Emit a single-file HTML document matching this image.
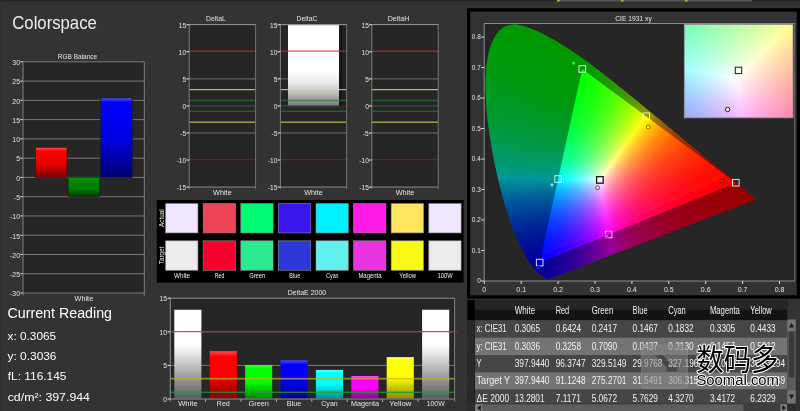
<!DOCTYPE html>
<html lang="en"><head><meta charset="utf-8"><title>Colorspace</title>
<style>
html,body{margin:0;padding:0;background:#333;overflow:hidden}
svg{display:block;font-family:"Liberation Sans", sans-serif;will-change:transform}
</style></head><body>
<svg width="800" height="411" viewBox="0 0 800 411">
<defs>
<linearGradient id="gR" x1="0" y1="0" x2="0" y2="1"><stop offset="0" stop-color="#ff5a5a"/><stop offset="0.12" stop-color="#ff0000"/><stop offset="0.55" stop-color="#e80000"/><stop offset="1" stop-color="#7a0000"/></linearGradient>
<linearGradient id="gG" x1="0" y1="0" x2="0" y2="1"><stop offset="0" stop-color="#00a000"/><stop offset="0.15" stop-color="#008a00"/><stop offset="0.6" stop-color="#007a00"/><stop offset="1" stop-color="#003c00"/></linearGradient>
<linearGradient id="gB" x1="0" y1="0" x2="0" y2="1"><stop offset="0" stop-color="#5a5aff"/><stop offset="0.05" stop-color="#0000ff"/><stop offset="0.55" stop-color="#0000e0"/><stop offset="1" stop-color="#000070"/></linearGradient>
<linearGradient id="gW" x1="0" y1="0" x2="0" y2="1"><stop offset="0" stop-color="#ffffff"/><stop offset="0.58" stop-color="#ffffff"/><stop offset="0.72" stop-color="#eaeaea"/><stop offset="0.86" stop-color="#b8b8b8"/><stop offset="1" stop-color="#7c7c7c"/></linearGradient>
</defs>
<rect width="800" height="411" fill="#333333"/>
<rect x="0" y="0" width="800" height="1.2" fill="#262626"/>
<rect x="558" y="0" width="194" height="1.5" fill="#555555"/>
<rect x="557" y="0" width="2.6" height="1.6" fill="#b4b428"/><rect x="621" y="0" width="2.6" height="1.6" fill="#b4b428"/><rect x="685" y="0" width="2.6" height="1.6" fill="#b4b428"/>
<rect x="0" y="0" width="1" height="411" fill="#2e2e2e"/>

<text x="12.30" y="28.70" font-size="19" text-anchor="start" fill="#ededed" textLength="84.5" lengthAdjust="spacingAndGlyphs" >Colorspace</text>
<rect x="23.0" y="61.8" width="121.3" height="231.2" fill="#262626"/>
<rect x="23.0" y="292.50" width="121.3" height="1" fill="#787878"/>
<rect x="20.4" y="292.50" width="2.6" height="1" fill="#e8e8e8"/>
<text transform="translate(20.00,296.30) scale(0.92,1)" font-size="7.5" text-anchor="end" fill="#e6e6e6" >-30</text>
<rect x="23.0" y="273.23" width="121.3" height="1" fill="#787878"/>
<rect x="20.4" y="273.23" width="2.6" height="1" fill="#e8e8e8"/>
<text transform="translate(20.00,277.03) scale(0.92,1)" font-size="7.5" text-anchor="end" fill="#e6e6e6" >-25</text>
<rect x="23.0" y="253.97" width="121.3" height="1" fill="#787878"/>
<rect x="20.4" y="253.97" width="2.6" height="1" fill="#e8e8e8"/>
<text transform="translate(20.00,257.77) scale(0.92,1)" font-size="7.5" text-anchor="end" fill="#e6e6e6" >-20</text>
<rect x="23.0" y="234.70" width="121.3" height="1" fill="#787878"/>
<rect x="20.4" y="234.70" width="2.6" height="1" fill="#e8e8e8"/>
<text transform="translate(20.00,238.50) scale(0.92,1)" font-size="7.5" text-anchor="end" fill="#e6e6e6" >-15</text>
<rect x="23.0" y="215.43" width="121.3" height="1" fill="#787878"/>
<rect x="20.4" y="215.43" width="2.6" height="1" fill="#e8e8e8"/>
<text transform="translate(20.00,219.23) scale(0.92,1)" font-size="7.5" text-anchor="end" fill="#e6e6e6" >-10</text>
<rect x="23.0" y="196.17" width="121.3" height="1" fill="#787878"/>
<rect x="20.4" y="196.17" width="2.6" height="1" fill="#e8e8e8"/>
<text transform="translate(20.00,199.97) scale(0.92,1)" font-size="7.5" text-anchor="end" fill="#e6e6e6" >-5</text>
<rect x="23.0" y="176.90" width="121.3" height="1" fill="#787878"/>
<rect x="20.4" y="176.90" width="2.6" height="1" fill="#e8e8e8"/>
<text transform="translate(20.00,180.70) scale(0.92,1)" font-size="7.5" text-anchor="end" fill="#e6e6e6" >0</text>
<rect x="23.0" y="157.63" width="121.3" height="1" fill="#787878"/>
<rect x="20.4" y="157.63" width="2.6" height="1" fill="#e8e8e8"/>
<text transform="translate(20.00,161.43) scale(0.92,1)" font-size="7.5" text-anchor="end" fill="#e6e6e6" >5</text>
<rect x="23.0" y="138.37" width="121.3" height="1" fill="#787878"/>
<rect x="20.4" y="138.37" width="2.6" height="1" fill="#e8e8e8"/>
<text transform="translate(20.00,142.17) scale(0.92,1)" font-size="7.5" text-anchor="end" fill="#e6e6e6" >10</text>
<rect x="23.0" y="119.10" width="121.3" height="1" fill="#787878"/>
<rect x="20.4" y="119.10" width="2.6" height="1" fill="#e8e8e8"/>
<text transform="translate(20.00,122.90) scale(0.92,1)" font-size="7.5" text-anchor="end" fill="#e6e6e6" >15</text>
<rect x="23.0" y="99.83" width="121.3" height="1" fill="#787878"/>
<rect x="20.4" y="99.83" width="2.6" height="1" fill="#e8e8e8"/>
<text transform="translate(20.00,103.63) scale(0.92,1)" font-size="7.5" text-anchor="end" fill="#e6e6e6" >20</text>
<rect x="23.0" y="80.57" width="121.3" height="1" fill="#787878"/>
<rect x="20.4" y="80.57" width="2.6" height="1" fill="#e8e8e8"/>
<text transform="translate(20.00,84.37) scale(0.92,1)" font-size="7.5" text-anchor="end" fill="#e6e6e6" >25</text>
<rect x="23.0" y="61.30" width="121.3" height="1" fill="#787878"/>
<rect x="20.4" y="61.30" width="2.6" height="1" fill="#e8e8e8"/>
<text transform="translate(20.00,65.10) scale(0.92,1)" font-size="7.5" text-anchor="end" fill="#e6e6e6" >30</text>
<rect x="22.5" y="61.8" width="1" height="233.7" fill="#808080"/>
<rect x="143.8" y="61.8" width="1" height="233.7" fill="#808080"/>
<rect x="35.5" y="147.34" width="31.50" height="30.06" fill="url(#gR)" stroke="#1a1a1a" stroke-width="0.6"/>
<rect x="68.0" y="177.40" width="31.90" height="19.27" fill="url(#gG)" stroke="#1a1a1a" stroke-width="0.6"/>
<rect x="100.5" y="98.02" width="31.80" height="79.38" fill="url(#gB)" stroke="#1a1a1a" stroke-width="0.6"/>
<text x="77.50" y="59.20" font-size="7.4" text-anchor="middle" fill="#e6e6e6" textLength="39.4" lengthAdjust="spacingAndGlyphs" >RGB Balance</text>
<text x="83.90" y="301.00" font-size="7.4" text-anchor="middle" fill="#e6e6e6" textLength="18.6" lengthAdjust="spacingAndGlyphs" >White</text>
<text x="7.50" y="318.40" font-size="14.0" text-anchor="start" fill="#fff" textLength="104.5" lengthAdjust="spacingAndGlyphs" >Current Reading</text>
<text x="7.50" y="339.50" font-size="11.6" text-anchor="start" fill="#fff" textLength="48.7" lengthAdjust="spacingAndGlyphs" >x: 0.3065</text>
<text x="7.50" y="359.80" font-size="11.6" text-anchor="start" fill="#fff" textLength="49.0" lengthAdjust="spacingAndGlyphs" >y: 0.3036</text>
<text x="7.70" y="380.30" font-size="11.6" text-anchor="start" fill="#fff" textLength="58.8" lengthAdjust="spacingAndGlyphs" >fL: 116.145</text>
<text x="7.70" y="400.60" font-size="11.6" text-anchor="start" fill="#fff" textLength="82.3" lengthAdjust="spacingAndGlyphs" >cd/m²: 397.944</text>
<rect x="189.2" y="24.6" width="66.4" height="162.5" fill="#262626"/>
<rect x="189.2" y="78.15" width="66.4" height="1.4" fill="#5a5a5a"/>
<rect x="189.2" y="132.25" width="66.4" height="1.4" fill="#5a5a5a"/>
<rect x="189.2" y="105.30" width="66.4" height="1.2" fill="#484848"/>
<rect x="189.2" y="50.55" width="67.4" height="1.3" fill="#c42626" opacity="0.85"/>
<rect x="189.2" y="158.85" width="67.4" height="1.3" fill="#8e1a1a" opacity="0.9"/>
<rect x="189.2" y="89.17" width="66.4" height="1.0" fill="#e6dc46" opacity="1"/>
<rect x="189.2" y="121.63" width="66.4" height="1.0" fill="#e6dc46" opacity="1"/>
<rect x="189.2" y="99.79" width="66.4" height="1.4" fill="#1f7a34" opacity="0.7"/>
<rect x="189.2" y="110.61" width="66.4" height="1.4" fill="#1f7a34" opacity="0.7"/>
<rect x="188.7" y="24.1" width="1" height="165.0" fill="#7c7c7c"/>
<rect x="255.1" y="24.1" width="1" height="165.0" fill="#727272"/>
<rect x="189.2" y="24.1" width="66.4" height="1" fill="#9a9a9a"/>
<rect x="189.2" y="186.55" width="66.4" height="1" fill="#8c8c8c"/>
<rect x="186.4" y="186.55" width="2.8" height="1" fill="#e8e8e8"/>
<text transform="translate(186.20,190.25) scale(0.88,1)" font-size="7.5" text-anchor="end" fill="#e6e6e6" >-15</text>
<rect x="186.4" y="159.50" width="2.8" height="1" fill="#e8e8e8"/>
<text transform="translate(186.20,163.20) scale(0.88,1)" font-size="7.5" text-anchor="end" fill="#e6e6e6" >-10</text>
<rect x="186.4" y="132.45" width="2.8" height="1" fill="#e8e8e8"/>
<text transform="translate(186.20,136.15) scale(0.88,1)" font-size="7.5" text-anchor="end" fill="#e6e6e6" >-5</text>
<rect x="186.4" y="105.40" width="2.8" height="1" fill="#e8e8e8"/>
<text transform="translate(186.20,109.10) scale(0.88,1)" font-size="7.5" text-anchor="end" fill="#e6e6e6" >0</text>
<rect x="186.4" y="78.35" width="2.8" height="1" fill="#e8e8e8"/>
<text transform="translate(186.20,82.05) scale(0.88,1)" font-size="7.5" text-anchor="end" fill="#e6e6e6" >5</text>
<rect x="186.4" y="51.30" width="2.8" height="1" fill="#e8e8e8"/>
<text transform="translate(186.20,55.00) scale(0.88,1)" font-size="7.5" text-anchor="end" fill="#e6e6e6" >10</text>
<rect x="186.4" y="24.25" width="2.8" height="1" fill="#e8e8e8"/>
<text transform="translate(186.20,27.95) scale(0.88,1)" font-size="7.5" text-anchor="end" fill="#e6e6e6" >15</text>
<text x="215.90" y="21.10" font-size="7.6" text-anchor="middle" fill="#e6e6e6" textLength="19.6" lengthAdjust="spacingAndGlyphs" >DeltaL</text>
<text x="222.40" y="195.00" font-size="7.6" text-anchor="middle" fill="#e6e6e6" textLength="18.6" lengthAdjust="spacingAndGlyphs" >White</text>
<rect x="280.4" y="24.6" width="66.2" height="162.5" fill="#262626"/>
<rect x="280.4" y="78.15" width="66.2" height="1.4" fill="#5a5a5a"/>
<rect x="280.4" y="132.25" width="66.2" height="1.4" fill="#5a5a5a"/>
<rect x="280.4" y="105.30" width="66.2" height="1.2" fill="#484848"/>
<rect x="339.0" y="25.1" width="3.6" height="81.3" fill="#181818"/>
<rect x="342.6" y="25.1" width="3.5" height="81.3" fill="#222222"/>
<rect x="288.0" y="25.1" width="51.0" height="80.3" fill="url(#gW)"/>
<rect x="280.4" y="50.55" width="67.2" height="1.3" fill="#c42626" opacity="0.85"/>
<rect x="280.4" y="158.85" width="67.2" height="1.3" fill="#8e1a1a" opacity="0.9"/>
<rect x="280.4" y="89.17" width="66.2" height="1.0" fill="#e6dc46" opacity="1"/>
<rect x="280.4" y="121.63" width="66.2" height="1.0" fill="#e6dc46" opacity="1"/>
<rect x="280.4" y="99.79" width="66.2" height="1.4" fill="#1f7a34" opacity="0.7"/>
<rect x="280.4" y="110.61" width="66.2" height="1.4" fill="#1f7a34" opacity="0.7"/>
<rect x="288.0" y="50.55" width="51.0" height="1.3" fill="#f78c8c"/>
<rect x="279.9" y="24.1" width="1" height="165.0" fill="#7c7c7c"/>
<rect x="346.1" y="24.1" width="1" height="165.0" fill="#727272"/>
<rect x="280.4" y="24.1" width="66.2" height="1" fill="#9a9a9a"/>
<rect x="280.4" y="186.55" width="66.2" height="1" fill="#8c8c8c"/>
<rect x="277.6" y="186.55" width="2.8" height="1" fill="#e8e8e8"/>
<text transform="translate(277.40,190.25) scale(0.88,1)" font-size="7.5" text-anchor="end" fill="#e6e6e6" >-15</text>
<rect x="277.6" y="159.50" width="2.8" height="1" fill="#e8e8e8"/>
<text transform="translate(277.40,163.20) scale(0.88,1)" font-size="7.5" text-anchor="end" fill="#e6e6e6" >-10</text>
<rect x="277.6" y="132.45" width="2.8" height="1" fill="#e8e8e8"/>
<text transform="translate(277.40,136.15) scale(0.88,1)" font-size="7.5" text-anchor="end" fill="#e6e6e6" >-5</text>
<rect x="277.6" y="105.40" width="2.8" height="1" fill="#e8e8e8"/>
<text transform="translate(277.40,109.10) scale(0.88,1)" font-size="7.5" text-anchor="end" fill="#e6e6e6" >0</text>
<rect x="277.6" y="78.35" width="2.8" height="1" fill="#e8e8e8"/>
<text transform="translate(277.40,82.05) scale(0.88,1)" font-size="7.5" text-anchor="end" fill="#e6e6e6" >5</text>
<rect x="277.6" y="51.30" width="2.8" height="1" fill="#e8e8e8"/>
<text transform="translate(277.40,55.00) scale(0.88,1)" font-size="7.5" text-anchor="end" fill="#e6e6e6" >10</text>
<rect x="277.6" y="24.25" width="2.8" height="1" fill="#e8e8e8"/>
<text transform="translate(277.40,27.95) scale(0.88,1)" font-size="7.5" text-anchor="end" fill="#e6e6e6" >15</text>
<text x="307.00" y="21.10" font-size="7.6" text-anchor="middle" fill="#e6e6e6" textLength="21.0" lengthAdjust="spacingAndGlyphs" >DeltaC</text>
<text x="313.50" y="195.00" font-size="7.6" text-anchor="middle" fill="#e6e6e6" textLength="18.6" lengthAdjust="spacingAndGlyphs" >White</text>
<rect x="371.8" y="24.6" width="66.4" height="162.5" fill="#262626"/>
<rect x="371.8" y="78.15" width="66.4" height="1.4" fill="#5a5a5a"/>
<rect x="371.8" y="132.25" width="66.4" height="1.4" fill="#5a5a5a"/>
<rect x="371.8" y="105.30" width="66.4" height="1.2" fill="#484848"/>
<rect x="371.8" y="50.55" width="67.4" height="1.3" fill="#c42626" opacity="0.85"/>
<rect x="371.8" y="158.85" width="67.4" height="1.3" fill="#8e1a1a" opacity="0.9"/>
<rect x="371.8" y="89.17" width="66.4" height="1.0" fill="#e6dc46" opacity="1"/>
<rect x="371.8" y="121.63" width="66.4" height="1.0" fill="#e6dc46" opacity="1"/>
<rect x="371.8" y="99.79" width="66.4" height="1.4" fill="#1f7a34" opacity="0.7"/>
<rect x="371.8" y="110.61" width="66.4" height="1.4" fill="#1f7a34" opacity="0.7"/>
<rect x="371.3" y="24.1" width="1" height="165.0" fill="#7c7c7c"/>
<rect x="437.7" y="24.1" width="1" height="165.0" fill="#727272"/>
<rect x="371.8" y="24.1" width="66.4" height="1" fill="#9a9a9a"/>
<rect x="371.8" y="186.55" width="66.4" height="1" fill="#8c8c8c"/>
<rect x="369.0" y="186.55" width="2.8" height="1" fill="#e8e8e8"/>
<text transform="translate(368.80,190.25) scale(0.88,1)" font-size="7.5" text-anchor="end" fill="#e6e6e6" >-15</text>
<rect x="369.0" y="159.50" width="2.8" height="1" fill="#e8e8e8"/>
<text transform="translate(368.80,163.20) scale(0.88,1)" font-size="7.5" text-anchor="end" fill="#e6e6e6" >-10</text>
<rect x="369.0" y="132.45" width="2.8" height="1" fill="#e8e8e8"/>
<text transform="translate(368.80,136.15) scale(0.88,1)" font-size="7.5" text-anchor="end" fill="#e6e6e6" >-5</text>
<rect x="369.0" y="105.40" width="2.8" height="1" fill="#e8e8e8"/>
<text transform="translate(368.80,109.10) scale(0.88,1)" font-size="7.5" text-anchor="end" fill="#e6e6e6" >0</text>
<rect x="369.0" y="78.35" width="2.8" height="1" fill="#e8e8e8"/>
<text transform="translate(368.80,82.05) scale(0.88,1)" font-size="7.5" text-anchor="end" fill="#e6e6e6" >5</text>
<rect x="369.0" y="51.30" width="2.8" height="1" fill="#e8e8e8"/>
<text transform="translate(368.80,55.00) scale(0.88,1)" font-size="7.5" text-anchor="end" fill="#e6e6e6" >10</text>
<rect x="369.0" y="24.25" width="2.8" height="1" fill="#e8e8e8"/>
<text transform="translate(368.80,27.95) scale(0.88,1)" font-size="7.5" text-anchor="end" fill="#e6e6e6" >15</text>
<text x="398.50" y="21.10" font-size="7.6" text-anchor="middle" fill="#e6e6e6" textLength="21.6" lengthAdjust="spacingAndGlyphs" >DeltaH</text>
<text x="405.00" y="195.00" font-size="7.6" text-anchor="middle" fill="#e6e6e6" textLength="18.6" lengthAdjust="spacingAndGlyphs" >White</text>
<rect x="156.8" y="200" width="306.8" height="82.6" fill="#000"/>
<rect x="165.6" y="203.6" width="32.3" height="29.3" fill="#f1e6ff" stroke="#9a9a9a" stroke-opacity="0.7" stroke-width="0.8"/>
<rect x="165.6" y="240.8" width="32.3" height="29.5" fill="#ebebeb" stroke="#9a9a9a" stroke-opacity="0.7" stroke-width="0.8"/>
<text x="182.00" y="277.50" font-size="6.7" text-anchor="middle" fill="#f0f0f0" textLength="16.0" lengthAdjust="spacingAndGlyphs" >White</text>
<rect x="203.2" y="203.6" width="32.3" height="29.3" fill="#ee4457" stroke="#9a9a9a" stroke-opacity="0.7" stroke-width="0.8"/>
<rect x="203.2" y="240.8" width="32.3" height="29.5" fill="#f5012c" stroke="#9a9a9a" stroke-opacity="0.7" stroke-width="0.8"/>
<text x="219.60" y="277.50" font-size="6.7" text-anchor="middle" fill="#f0f0f0" textLength="9.5" lengthAdjust="spacingAndGlyphs" >Red</text>
<rect x="240.8" y="203.6" width="32.3" height="29.3" fill="#00fb72" stroke="#9a9a9a" stroke-opacity="0.7" stroke-width="0.8"/>
<rect x="240.8" y="240.8" width="32.3" height="29.5" fill="#2aea8e" stroke="#9a9a9a" stroke-opacity="0.7" stroke-width="0.8"/>
<text x="257.20" y="277.50" font-size="6.7" text-anchor="middle" fill="#f0f0f0" textLength="16.0" lengthAdjust="spacingAndGlyphs" >Green</text>
<rect x="278.4" y="203.6" width="32.3" height="29.3" fill="#3a16f0" stroke="#9a9a9a" stroke-opacity="0.7" stroke-width="0.8"/>
<rect x="278.4" y="240.8" width="32.3" height="29.5" fill="#2c38d8" stroke="#9a9a9a" stroke-opacity="0.7" stroke-width="0.8"/>
<text x="294.80" y="277.50" font-size="6.7" text-anchor="middle" fill="#f0f0f0" textLength="11.0" lengthAdjust="spacingAndGlyphs" >Blue</text>
<rect x="316.0" y="203.6" width="32.3" height="29.3" fill="#00f0ff" stroke="#9a9a9a" stroke-opacity="0.7" stroke-width="0.8"/>
<rect x="316.0" y="240.8" width="32.3" height="29.5" fill="#60f0ee" stroke="#9a9a9a" stroke-opacity="0.7" stroke-width="0.8"/>
<text x="332.40" y="277.50" font-size="6.7" text-anchor="middle" fill="#f0f0f0" textLength="12.2" lengthAdjust="spacingAndGlyphs" >Cyan</text>
<rect x="353.6" y="203.6" width="32.3" height="29.3" fill="#ff1ce9" stroke="#9a9a9a" stroke-opacity="0.7" stroke-width="0.8"/>
<rect x="353.6" y="240.8" width="32.3" height="29.5" fill="#e932e0" stroke="#9a9a9a" stroke-opacity="0.7" stroke-width="0.8"/>
<text x="370.00" y="277.50" font-size="6.7" text-anchor="middle" fill="#f0f0f0" textLength="23.2" lengthAdjust="spacingAndGlyphs" >Magenta</text>
<rect x="391.2" y="203.6" width="32.3" height="29.3" fill="#ffe45e" stroke="#9a9a9a" stroke-opacity="0.7" stroke-width="0.8"/>
<rect x="391.2" y="240.8" width="32.3" height="29.5" fill="#f9f916" stroke="#9a9a9a" stroke-opacity="0.7" stroke-width="0.8"/>
<text x="407.60" y="277.50" font-size="6.7" text-anchor="middle" fill="#f0f0f0" textLength="16.6" lengthAdjust="spacingAndGlyphs" >Yellow</text>
<rect x="428.8" y="203.6" width="32.3" height="29.3" fill="#f1e6ff" stroke="#9a9a9a" stroke-opacity="0.7" stroke-width="0.8"/>
<rect x="428.8" y="240.8" width="32.3" height="29.5" fill="#ebebeb" stroke="#9a9a9a" stroke-opacity="0.7" stroke-width="0.8"/>
<text x="445.20" y="277.50" font-size="6.7" text-anchor="middle" fill="#f0f0f0" textLength="15.2" lengthAdjust="spacingAndGlyphs" >100W</text>
<text transform="translate(163.6,218.2) rotate(-90)" font-size="6.6" text-anchor="middle" fill="#f0f0f0" textLength="17.5" lengthAdjust="spacingAndGlyphs">Actual</text>
<text transform="translate(163.6,255.5) rotate(-90)" font-size="6.6" text-anchor="middle" fill="#f0f0f0" textLength="17.5" lengthAdjust="spacingAndGlyphs">Target</text>
<rect x="170.3" y="298.2" width="284.3" height="100.8" fill="#262626"/>
<rect x="170.3" y="364.90" width="284.3" height="1" fill="#777"/>
<rect x="170.3" y="331.30" width="284.3" height="1" fill="#777"/>
<defs>
<linearGradient id="e0" x1="0" y1="0" x2="0" y2="1"><stop offset="0" stop-color="#fff"/><stop offset="0.4" stop-color="#fff"/><stop offset="1" stop-color="#5c5c5c"/></linearGradient>
<linearGradient id="e1" x1="0" y1="0" x2="0" y2="1"><stop offset="0" stop-color="#ff4a4a"/><stop offset="0.12" stop-color="#ff0000"/><stop offset="0.5" stop-color="#ff0000"/><stop offset="1" stop-color="#8a0000"/></linearGradient>
<linearGradient id="e2" x1="0" y1="0" x2="0" y2="1"><stop offset="0" stop-color="#3cff3c"/><stop offset="0.12" stop-color="#00ff00"/><stop offset="0.5" stop-color="#00ff00"/><stop offset="1" stop-color="#008a00"/></linearGradient>
<linearGradient id="e3" x1="0" y1="0" x2="0" y2="1"><stop offset="0" stop-color="#4a4aff"/><stop offset="0.12" stop-color="#0000ff"/><stop offset="0.5" stop-color="#0000ff"/><stop offset="1" stop-color="#00008a"/></linearGradient>
<linearGradient id="e4" x1="0" y1="0" x2="0" y2="1"><stop offset="0" stop-color="#5affff"/><stop offset="0.12" stop-color="#00ffff"/><stop offset="0.5" stop-color="#00ffff"/><stop offset="1" stop-color="#008a8a"/></linearGradient>
<linearGradient id="e5" x1="0" y1="0" x2="0" y2="1"><stop offset="0" stop-color="#ff5aff"/><stop offset="0.12" stop-color="#ff00ff"/><stop offset="0.5" stop-color="#ff00ff"/><stop offset="1" stop-color="#8a008a"/></linearGradient>
<linearGradient id="e6" x1="0" y1="0" x2="0" y2="1"><stop offset="0" stop-color="#ffff5a"/><stop offset="0.12" stop-color="#ffff00"/><stop offset="0.5" stop-color="#ffff00"/><stop offset="1" stop-color="#8a8a00"/></linearGradient>
<linearGradient id="e7" x1="0" y1="0" x2="0" y2="1"><stop offset="0" stop-color="#fff"/><stop offset="0.4" stop-color="#fff"/><stop offset="1" stop-color="#5c5c5c"/></linearGradient>
</defs>
<rect x="174.3" y="309.76" width="27.1" height="88.74" fill="url(#e0)"/>
<text x="187.90" y="406.00" font-size="7.6" text-anchor="middle" fill="#e6e6e6" textLength="19.5" lengthAdjust="spacingAndGlyphs" >White</text>
<rect x="209.7" y="351.17" width="27.1" height="47.33" fill="url(#e1)"/>
<text x="223.30" y="406.00" font-size="7.6" text-anchor="middle" fill="#e6e6e6" textLength="13.0" lengthAdjust="spacingAndGlyphs" >Red</text>
<rect x="205.1" y="399.0" width="1" height="3" fill="#aaa"/>
<rect x="245.1" y="364.95" width="27.1" height="33.55" fill="url(#e2)"/>
<text x="258.70" y="406.00" font-size="7.6" text-anchor="middle" fill="#e6e6e6" textLength="20.5" lengthAdjust="spacingAndGlyphs" >Green</text>
<rect x="240.5" y="399.0" width="1" height="3" fill="#aaa"/>
<rect x="280.5" y="360.27" width="27.1" height="38.23" fill="url(#e3)"/>
<text x="294.10" y="406.00" font-size="7.6" text-anchor="middle" fill="#e6e6e6" textLength="14.5" lengthAdjust="spacingAndGlyphs" >Blue</text>
<rect x="275.9" y="399.0" width="1" height="3" fill="#aaa"/>
<rect x="315.9" y="369.92" width="27.1" height="28.58" fill="url(#e4)"/>
<text x="329.50" y="406.00" font-size="7.6" text-anchor="middle" fill="#e6e6e6" textLength="16.5" lengthAdjust="spacingAndGlyphs" >Cyan</text>
<rect x="311.3" y="399.0" width="1" height="3" fill="#aaa"/>
<rect x="351.3" y="376.04" width="27.1" height="22.46" fill="url(#e5)"/>
<text x="364.90" y="406.00" font-size="7.6" text-anchor="middle" fill="#e6e6e6" textLength="28.0" lengthAdjust="spacingAndGlyphs" >Magenta</text>
<rect x="346.7" y="399.0" width="1" height="3" fill="#aaa"/>
<rect x="386.7" y="357.11" width="27.1" height="41.39" fill="url(#e6)"/>
<text x="400.30" y="406.00" font-size="7.6" text-anchor="middle" fill="#e6e6e6" textLength="22.0" lengthAdjust="spacingAndGlyphs" >Yellow</text>
<rect x="382.1" y="399.0" width="1" height="3" fill="#aaa"/>
<rect x="422.1" y="309.76" width="27.1" height="88.74" fill="url(#e7)"/>
<text x="435.70" y="406.00" font-size="7.6" text-anchor="middle" fill="#e6e6e6" textLength="18.0" lengthAdjust="spacingAndGlyphs" >100W</text>
<rect x="417.5" y="399.0" width="1" height="3" fill="#aaa"/>
<rect x="170.3" y="331.20" width="286.8" height="1.0" fill="#d02222"/>
<rect x="170.3" y="377.84" width="284.3" height="1.7" fill="#c4b41e" opacity="0.7"/>
<rect x="170.3" y="391.68" width="284.3" height="1.2" fill="#1f9a34" opacity="0.9"/>
<rect x="169.8" y="297.7" width="1" height="103.8" fill="#909090"/>
<rect x="454.1" y="297.7" width="1" height="103.8" fill="#808080"/>
<rect x="170.3" y="297.7" width="284.3" height="1" fill="#909090"/>
<rect x="170.3" y="398.50" width="284.3" height="1" fill="#909090"/>
<rect x="167.5" y="398.50" width="2.8" height="1" fill="#e8e8e8"/>
<text transform="translate(167.10,402.00) scale(0.9,1)" font-size="7.5" text-anchor="end" fill="#e6e6e6" >0</text>
<rect x="167.5" y="364.90" width="2.8" height="1" fill="#e8e8e8"/>
<text transform="translate(167.10,368.40) scale(0.9,1)" font-size="7.5" text-anchor="end" fill="#e6e6e6" >5</text>
<rect x="167.5" y="331.30" width="2.8" height="1" fill="#e8e8e8"/>
<text transform="translate(167.10,334.80) scale(0.9,1)" font-size="7.5" text-anchor="end" fill="#e6e6e6" >10</text>
<rect x="167.5" y="297.70" width="2.8" height="1" fill="#e8e8e8"/>
<text transform="translate(167.10,301.20) scale(0.9,1)" font-size="7.5" text-anchor="end" fill="#e6e6e6" >15</text>
<text x="307.00" y="295.00" font-size="7.6" text-anchor="middle" fill="#e6e6e6" textLength="38.5" lengthAdjust="spacingAndGlyphs" >DeltaE 2000</text>
<rect x="467" y="8.2" width="333" height="290.5" fill="#000"/>
<rect x="470.2" y="11.6" width="326.6" height="283.7" fill="#333333"/>
<rect x="484.2" y="23.5" width="310.4" height="257.5" fill="#262626"/>
<defs><clipPath id="loc"><polygon points="547.6,279.4 547.5,279.3 547.3,279.2 547.0,279.1 546.7,278.9 546.4,278.6 546.0,278.4 545.5,278.0 545.0,277.7 544.4,277.2 543.8,276.8 543.0,276.2 542.1,275.6 541.2,274.9 540.1,274.1 538.9,273.2 537.5,271.9 535.8,270.1 533.8,267.9 531.9,265.5 530.1,263.2 528.7,261.2 527.4,259.1 526.1,256.9 524.8,254.3 523.2,251.3 521.6,248.0 519.8,244.3 518.0,240.2 516.0,235.7 513.9,230.7 511.8,225.3 509.6,219.3 507.5,212.8 505.3,205.8 503.1,198.3 501.0,190.3 498.9,181.9 496.8,172.9 494.7,163.6 492.9,154.2 491.2,144.6 489.7,134.8 488.3,125.1 487.2,115.5 486.4,106.3 485.9,97.1 485.6,88.2 485.6,79.8 486.1,71.8 486.8,64.1 487.9,56.9 489.3,50.5 491.2,44.7 493.4,39.6 495.9,35.1 498.6,31.5 501.6,28.7 504.8,26.8 508.2,25.5 511.7,24.8 515.3,24.6 519.0,25.1 522.7,26.0 526.5,27.1 530.2,28.4 534.0,29.9 537.7,31.6 541.4,33.3 545.0,35.1 548.6,36.9 552.1,38.9 555.6,40.8 559.0,42.8 562.4,44.9 565.8,47.0 569.2,49.2 572.5,51.4 575.9,53.7 579.2,56.1 582.5,58.4 585.9,60.8 589.2,63.3 592.5,65.8 595.8,68.3 599.1,70.8 602.4,73.3 605.7,75.9 609.0,78.5 612.3,81.1 615.6,83.8 618.9,86.4 622.2,89.1 625.5,91.8 628.8,94.4 632.1,97.1 635.4,99.8 638.7,102.5 642.0,105.2 645.3,107.9 648.5,110.5 651.8,113.2 655.0,115.9 658.2,118.5 661.4,121.1 664.5,123.8 667.6,126.3 670.8,128.9 673.8,131.5 676.9,134.0 679.9,136.5 682.8,138.9 685.8,141.4 688.7,143.7 691.5,146.1 694.3,148.4 697.0,150.6 699.7,152.9 702.3,155.0 704.8,157.1 707.3,159.2 709.6,161.1 711.9,163.0 714.1,164.8 716.2,166.5 718.3,168.2 720.3,169.9 722.2,171.5 724.0,173.0 725.7,174.4 727.2,175.6 728.7,176.9 730.5,178.4 732.8,180.2 735.3,182.3 737.8,184.4 740.1,186.3 741.9,187.8 743.4,189.0 744.8,190.2 746.1,191.3 747.3,192.3 748.4,193.2 749.4,194.0 750.2,194.7 751.0,195.3 751.7,195.9 752.3,196.4 752.8,196.8 753.3,197.2 753.6,197.5 753.9,197.7 754.3,198.0 754.8,198.4 755.3,198.8 755.7,199.2 756.0,199.5"/></clipPath><clipPath id="tri"><polygon points="735.8,182.7 582.2,69.0 539.7,262.6"/></clipPath>
<linearGradient id="r0" gradientUnits="userSpaceOnUse" x1="484.2" x2="758.0" y1="0" y2="0"><stop offset="0.000" stop-color="#00ff08"/><stop offset="0.190" stop-color="#00ff00"/><stop offset="0.410" stop-color="#03ff00"/><stop offset="0.516" stop-color="#27ff00"/><stop offset="0.645" stop-color="#6aff00"/><stop offset="0.766" stop-color="#bfff00"/><stop offset="0.842" stop-color="#fffd00"/><stop offset="0.916" stop-color="#ffc400"/><stop offset="1.000" stop-color="#ff9700"/></linearGradient>
<linearGradient id="r1" gradientUnits="userSpaceOnUse" x1="484.2" x2="758.0" y1="0" y2="0"><stop offset="0.000" stop-color="#00ff08"/><stop offset="0.205" stop-color="#00ff00"/><stop offset="0.410" stop-color="#03ff00"/><stop offset="0.513" stop-color="#27ff00"/><stop offset="0.641" stop-color="#6aff00"/><stop offset="0.758" stop-color="#bdff00"/><stop offset="0.835" stop-color="#fffe00"/><stop offset="0.908" stop-color="#ffc500"/><stop offset="1.000" stop-color="#ff9400"/></linearGradient>
<linearGradient id="r2" gradientUnits="userSpaceOnUse" x1="484.2" x2="758.0" y1="0" y2="0"><stop offset="0.000" stop-color="#00ff09"/><stop offset="0.209" stop-color="#00ff00"/><stop offset="0.407" stop-color="#03ff00"/><stop offset="0.505" stop-color="#25ff00"/><stop offset="0.619" stop-color="#5fff00"/><stop offset="0.740" stop-color="#b2ff00"/><stop offset="0.832" stop-color="#fffd00"/><stop offset="0.908" stop-color="#ffc100"/><stop offset="1.000" stop-color="#ff9100"/></linearGradient>
<linearGradient id="r3" gradientUnits="userSpaceOnUse" x1="484.2" x2="758.0" y1="0" y2="0"><stop offset="0.000" stop-color="#00ff0a"/><stop offset="0.212" stop-color="#00ff00"/><stop offset="0.407" stop-color="#03ff00"/><stop offset="0.516" stop-color="#2bff00"/><stop offset="0.645" stop-color="#71ff00"/><stop offset="0.755" stop-color="#c2ff00"/><stop offset="0.824" stop-color="#ffff00"/><stop offset="0.894" stop-color="#ffc700"/><stop offset="0.993" stop-color="#ff9100"/><stop offset="1.000" stop-color="#ff8e00"/></linearGradient>
<linearGradient id="r4" gradientUnits="userSpaceOnUse" x1="484.2" x2="758.0" y1="0" y2="0"><stop offset="0.000" stop-color="#00ff0b"/><stop offset="0.216" stop-color="#00ff00"/><stop offset="0.403" stop-color="#03ff00"/><stop offset="0.498" stop-color="#24ff00"/><stop offset="0.615" stop-color="#61ff00"/><stop offset="0.729" stop-color="#b1ff00"/><stop offset="0.821" stop-color="#fffd00"/><stop offset="0.894" stop-color="#ffc300"/><stop offset="0.993" stop-color="#ff8e00"/><stop offset="1.000" stop-color="#ff8b00"/></linearGradient>
<linearGradient id="r5" gradientUnits="userSpaceOnUse" x1="484.2" x2="758.0" y1="0" y2="0"><stop offset="0.000" stop-color="#00ff0c"/><stop offset="0.223" stop-color="#00ff00"/><stop offset="0.403" stop-color="#03ff00"/><stop offset="0.509" stop-color="#2aff00"/><stop offset="0.634" stop-color="#6fff00"/><stop offset="0.747" stop-color="#c3ff00"/><stop offset="0.813" stop-color="#ffff00"/><stop offset="0.886" stop-color="#ffc400"/><stop offset="0.985" stop-color="#ff8e00"/><stop offset="1.000" stop-color="#ff8800"/></linearGradient>
<linearGradient id="r6" gradientUnits="userSpaceOnUse" x1="484.2" x2="758.0" y1="0" y2="0"><stop offset="0.000" stop-color="#00ff0d"/><stop offset="0.231" stop-color="#00ff00"/><stop offset="0.399" stop-color="#03ff00"/><stop offset="0.491" stop-color="#23ff00"/><stop offset="0.608" stop-color="#61ff00"/><stop offset="0.725" stop-color="#b5ff00"/><stop offset="0.810" stop-color="#fffd00"/><stop offset="0.879" stop-color="#ffc500"/><stop offset="0.982" stop-color="#ff8d00"/><stop offset="1.000" stop-color="#ff8500"/></linearGradient>
<linearGradient id="r7" gradientUnits="userSpaceOnUse" x1="484.2" x2="758.0" y1="0" y2="0"><stop offset="0.000" stop-color="#00ff0e"/><stop offset="0.238" stop-color="#00ff00"/><stop offset="0.399" stop-color="#03ff00"/><stop offset="0.495" stop-color="#26ff00"/><stop offset="0.615" stop-color="#68ff00"/><stop offset="0.725" stop-color="#b9ff00"/><stop offset="0.802" stop-color="#ffff00"/><stop offset="0.879" stop-color="#ffc100"/><stop offset="0.974" stop-color="#ff8d00"/><stop offset="1.000" stop-color="#ff8300"/></linearGradient>
<linearGradient id="r8" gradientUnits="userSpaceOnUse" x1="484.2" x2="758.0" y1="0" y2="0"><stop offset="0.000" stop-color="#00ff0f"/><stop offset="0.242" stop-color="#00ff00"/><stop offset="0.399" stop-color="#03ff00"/><stop offset="0.505" stop-color="#2cff00"/><stop offset="0.623" stop-color="#6fff00"/><stop offset="0.740" stop-color="#c9ff00"/><stop offset="0.799" stop-color="#fffe00"/><stop offset="0.875" stop-color="#ffbf00"/><stop offset="0.974" stop-color="#ff8a00"/><stop offset="1.000" stop-color="#ff8000"/></linearGradient>
<linearGradient id="r9" gradientUnits="userSpaceOnUse" x1="484.2" x2="758.0" y1="0" y2="0"><stop offset="0.000" stop-color="#00ff10"/><stop offset="0.253" stop-color="#00ff00"/><stop offset="0.396" stop-color="#03ff00"/><stop offset="0.495" stop-color="#28ff00"/><stop offset="0.608" stop-color="#68ff00"/><stop offset="0.714" stop-color="#b7ff00"/><stop offset="0.795" stop-color="#fffc00"/><stop offset="0.868" stop-color="#ffc000"/><stop offset="0.967" stop-color="#ff8a00"/><stop offset="1.000" stop-color="#ff7d00"/></linearGradient>
<linearGradient id="r10" gradientUnits="userSpaceOnUse" x1="484.2" x2="758.0" y1="0" y2="0"><stop offset="0.000" stop-color="#00ff11"/><stop offset="0.260" stop-color="#00ff00"/><stop offset="0.396" stop-color="#03ff00"/><stop offset="0.502" stop-color="#2dff00"/><stop offset="0.612" stop-color="#6dff00"/><stop offset="0.714" stop-color="#bbff00"/><stop offset="0.788" stop-color="#fffe00"/><stop offset="0.868" stop-color="#ffbc00"/><stop offset="0.967" stop-color="#ff8700"/><stop offset="1.000" stop-color="#ff7a00"/></linearGradient>
<linearGradient id="r11" gradientUnits="userSpaceOnUse" x1="484.2" x2="758.0" y1="0" y2="0"><stop offset="0.000" stop-color="#00ff12"/><stop offset="0.271" stop-color="#00ff00"/><stop offset="0.392" stop-color="#03ff00"/><stop offset="0.487" stop-color="#27ff00"/><stop offset="0.601" stop-color="#68ff00"/><stop offset="0.711" stop-color="#bcff00"/><stop offset="0.784" stop-color="#fffc00"/><stop offset="0.861" stop-color="#ffbd00"/><stop offset="0.956" stop-color="#ff8900"/><stop offset="1.000" stop-color="#ff7800"/></linearGradient>
<linearGradient id="r12" gradientUnits="userSpaceOnUse" x1="484.2" x2="758.0" y1="0" y2="0"><stop offset="0.000" stop-color="#00ff13"/><stop offset="0.282" stop-color="#00ff00"/><stop offset="0.392" stop-color="#03ff00"/><stop offset="0.491" stop-color="#2aff00"/><stop offset="0.604" stop-color="#6dff00"/><stop offset="0.711" stop-color="#c0ff00"/><stop offset="0.777" stop-color="#fffe00"/><stop offset="0.850" stop-color="#ffc000"/><stop offset="0.956" stop-color="#ff8600"/><stop offset="1.000" stop-color="#ff7500"/></linearGradient>
<linearGradient id="r13" gradientUnits="userSpaceOnUse" x1="484.2" x2="758.0" y1="0" y2="0"><stop offset="0.000" stop-color="#00ff14"/><stop offset="0.286" stop-color="#00ff00"/><stop offset="0.388" stop-color="#03ff00"/><stop offset="0.480" stop-color="#26ff00"/><stop offset="0.586" stop-color="#63ff00"/><stop offset="0.692" stop-color="#b4ff00"/><stop offset="0.773" stop-color="#fffd00"/><stop offset="0.842" stop-color="#ffc100"/><stop offset="0.930" stop-color="#ff8f00"/><stop offset="1.000" stop-color="#ff7200"/></linearGradient>
<linearGradient id="r14" gradientUnits="userSpaceOnUse" x1="484.2" x2="758.0" y1="0" y2="0"><stop offset="0.000" stop-color="#00ff16"/><stop offset="0.293" stop-color="#00ff00"/><stop offset="0.388" stop-color="#03ff00"/><stop offset="0.491" stop-color="#2dff00"/><stop offset="0.597" stop-color="#6dff00"/><stop offset="0.703" stop-color="#c2ff00"/><stop offset="0.766" stop-color="#ffff00"/><stop offset="0.832" stop-color="#ffc500"/><stop offset="0.916" stop-color="#ff9200"/><stop offset="1.000" stop-color="#ff7000"/></linearGradient>
<linearGradient id="r15" gradientUnits="userSpaceOnUse" x1="484.2" x2="758.0" y1="0" y2="0"><stop offset="0.000" stop-color="#00ff17"/><stop offset="0.304" stop-color="#00ff00"/><stop offset="0.385" stop-color="#03ff00"/><stop offset="0.476" stop-color="#27ff00"/><stop offset="0.579" stop-color="#63ff00"/><stop offset="0.681" stop-color="#b3ff00"/><stop offset="0.762" stop-color="#fffd00"/><stop offset="0.828" stop-color="#ffc300"/><stop offset="0.919" stop-color="#ff8d00"/><stop offset="1.000" stop-color="#ff6d00"/></linearGradient>
<linearGradient id="r16" gradientUnits="userSpaceOnUse" x1="484.2" x2="758.0" y1="0" y2="0"><stop offset="0.000" stop-color="#00ff18"/><stop offset="0.311" stop-color="#00ff00"/><stop offset="0.385" stop-color="#03ff00"/><stop offset="0.484" stop-color="#2cff00"/><stop offset="0.590" stop-color="#6dff00"/><stop offset="0.696" stop-color="#c4ff00"/><stop offset="0.755" stop-color="#ffff00"/><stop offset="0.821" stop-color="#ffc400"/><stop offset="0.908" stop-color="#ff8f00"/><stop offset="1.000" stop-color="#ff6a00"/></linearGradient>
<linearGradient id="r17" gradientUnits="userSpaceOnUse" x1="484.2" x2="758.0" y1="0" y2="0"><stop offset="0.000" stop-color="#00ff19"/><stop offset="0.322" stop-color="#00ff00"/><stop offset="0.381" stop-color="#03ff00"/><stop offset="0.469" stop-color="#26ff00"/><stop offset="0.571" stop-color="#63ff00"/><stop offset="0.674" stop-color="#b4ff00"/><stop offset="0.751" stop-color="#fffd00"/><stop offset="0.817" stop-color="#ffc300"/><stop offset="0.897" stop-color="#ff9100"/><stop offset="1.000" stop-color="#ff6800"/></linearGradient>
<linearGradient id="r18" gradientUnits="userSpaceOnUse" x1="484.2" x2="758.0" y1="0" y2="0"><stop offset="0.000" stop-color="#00ff1b"/><stop offset="0.330" stop-color="#00ff00"/><stop offset="0.385" stop-color="#04ff00"/><stop offset="0.480" stop-color="#2dff00"/><stop offset="0.582" stop-color="#6dff00"/><stop offset="0.681" stop-color="#bfff00"/><stop offset="0.747" stop-color="#fffc00"/><stop offset="0.806" stop-color="#ffc600"/><stop offset="0.894" stop-color="#ff9000"/><stop offset="1.000" stop-color="#ff6500"/></linearGradient>
<linearGradient id="r19" gradientUnits="userSpaceOnUse" x1="484.2" x2="758.0" y1="0" y2="0"><stop offset="0.000" stop-color="#00ff1c"/><stop offset="0.337" stop-color="#00ff00"/><stop offset="0.381" stop-color="#04ff00"/><stop offset="0.465" stop-color="#27ff00"/><stop offset="0.564" stop-color="#63ff00"/><stop offset="0.678" stop-color="#c0ff00"/><stop offset="0.740" stop-color="#fffe00"/><stop offset="0.799" stop-color="#ffc800"/><stop offset="0.875" stop-color="#ff9600"/><stop offset="0.978" stop-color="#ff6a00"/><stop offset="1.000" stop-color="#ff6300"/></linearGradient>
<linearGradient id="r20" gradientUnits="userSpaceOnUse" x1="484.2" x2="758.0" y1="0" y2="0"><stop offset="0.000" stop-color="#00ff1e"/><stop offset="0.348" stop-color="#00ff00"/><stop offset="0.392" stop-color="#08ff00"/><stop offset="0.487" stop-color="#34ff00"/><stop offset="0.586" stop-color="#76ff00"/><stop offset="0.678" stop-color="#c5ff00"/><stop offset="0.736" stop-color="#fffc00"/><stop offset="0.802" stop-color="#ffc000"/><stop offset="0.886" stop-color="#ff8d00"/><stop offset="1.000" stop-color="#ff6000"/></linearGradient>
<linearGradient id="r21" gradientUnits="userSpaceOnUse" x1="484.2" x2="758.0" y1="0" y2="0"><stop offset="0.000" stop-color="#00ff1f"/><stop offset="0.355" stop-color="#00ff00"/><stop offset="0.414" stop-color="#11ff00"/><stop offset="0.516" stop-color="#47ff00"/><stop offset="0.619" stop-color="#94ff00"/><stop offset="0.707" stop-color="#e8ff00"/><stop offset="0.729" stop-color="#fffe00"/><stop offset="0.791" stop-color="#ffc400"/><stop offset="0.872" stop-color="#ff9100"/><stop offset="0.989" stop-color="#ff6100"/><stop offset="1.000" stop-color="#ff5e00"/></linearGradient>
<linearGradient id="r22" gradientUnits="userSpaceOnUse" x1="484.2" x2="758.0" y1="0" y2="0"><stop offset="0.000" stop-color="#00ff20"/><stop offset="0.366" stop-color="#01ff00"/><stop offset="0.454" stop-color="#25ff00"/><stop offset="0.557" stop-color="#65ff00"/><stop offset="0.659" stop-color="#bcff00"/><stop offset="0.725" stop-color="#fffc00"/><stop offset="0.791" stop-color="#ffbf00"/><stop offset="0.875" stop-color="#ff8b00"/><stop offset="0.989" stop-color="#ff5f00"/><stop offset="1.000" stop-color="#ff5b00"/></linearGradient>
<linearGradient id="r23" gradientUnits="userSpaceOnUse" x1="484.2" x2="758.0" y1="0" y2="0"><stop offset="0.000" stop-color="#00ff22"/><stop offset="0.370" stop-color="#03ff00"/><stop offset="0.454" stop-color="#26ff00"/><stop offset="0.557" stop-color="#68ff00"/><stop offset="0.648" stop-color="#b6ff00"/><stop offset="0.718" stop-color="#ffff00"/><stop offset="0.773" stop-color="#ffc900"/><stop offset="0.853" stop-color="#ff9300"/><stop offset="0.967" stop-color="#ff6300"/><stop offset="1.000" stop-color="#ff5900"/></linearGradient>
<linearGradient id="r24" gradientUnits="userSpaceOnUse" x1="484.2" x2="758.0" y1="0" y2="0"><stop offset="0.000" stop-color="#00ff24"/><stop offset="0.370" stop-color="#03ff00"/><stop offset="0.454" stop-color="#28ff00"/><stop offset="0.549" stop-color="#65ff00"/><stop offset="0.645" stop-color="#b7ff00"/><stop offset="0.714" stop-color="#fffd00"/><stop offset="0.777" stop-color="#ffc100"/><stop offset="0.857" stop-color="#ff8e00"/><stop offset="0.960" stop-color="#ff6300"/><stop offset="1.000" stop-color="#ff5600"/></linearGradient>
<linearGradient id="r25" gradientUnits="userSpaceOnUse" x1="484.2" x2="758.0" y1="0" y2="0"><stop offset="0.000" stop-color="#00ff25"/><stop offset="0.366" stop-color="#03ff01"/><stop offset="0.447" stop-color="#25ff00"/><stop offset="0.546" stop-color="#65ff00"/><stop offset="0.641" stop-color="#b8ff00"/><stop offset="0.707" stop-color="#ffff00"/><stop offset="0.766" stop-color="#ffc500"/><stop offset="0.846" stop-color="#ff9000"/><stop offset="0.949" stop-color="#ff6400"/><stop offset="1.000" stop-color="#ff5400"/></linearGradient>
<linearGradient id="r26" gradientUnits="userSpaceOnUse" x1="484.2" x2="758.0" y1="0" y2="0"><stop offset="0.000" stop-color="#00ff27"/><stop offset="0.366" stop-color="#03ff01"/><stop offset="0.447" stop-color="#27ff00"/><stop offset="0.535" stop-color="#60ff00"/><stop offset="0.626" stop-color="#aeff00"/><stop offset="0.703" stop-color="#fffd00"/><stop offset="0.758" stop-color="#ffc700"/><stop offset="0.839" stop-color="#ff9000"/><stop offset="0.941" stop-color="#ff6400"/><stop offset="1.000" stop-color="#ff5200"/></linearGradient>
<linearGradient id="r27" gradientUnits="userSpaceOnUse" x1="484.2" x2="758.0" y1="0" y2="0"><stop offset="0.000" stop-color="#00ff29"/><stop offset="0.363" stop-color="#03ff03"/><stop offset="0.440" stop-color="#24ff00"/><stop offset="0.538" stop-color="#65ff00"/><stop offset="0.630" stop-color="#b6ff00"/><stop offset="0.696" stop-color="#ffff00"/><stop offset="0.755" stop-color="#ffc500"/><stop offset="0.828" stop-color="#ff9300"/><stop offset="0.919" stop-color="#ff6900"/><stop offset="1.000" stop-color="#ff4f00"/></linearGradient>
<linearGradient id="r28" gradientUnits="userSpaceOnUse" x1="484.2" x2="758.0" y1="0" y2="0"><stop offset="0.000" stop-color="#00ff2a"/><stop offset="0.363" stop-color="#03ff04"/><stop offset="0.443" stop-color="#28ff00"/><stop offset="0.535" stop-color="#65ff00"/><stop offset="0.626" stop-color="#b7ff00"/><stop offset="0.692" stop-color="#fffd00"/><stop offset="0.751" stop-color="#ffc300"/><stop offset="0.824" stop-color="#ff9100"/><stop offset="0.919" stop-color="#ff6600"/><stop offset="1.000" stop-color="#ff4d00"/></linearGradient>
<linearGradient id="r29" gradientUnits="userSpaceOnUse" x1="484.2" x2="758.0" y1="0" y2="0"><stop offset="0.000" stop-color="#00ff2c"/><stop offset="0.359" stop-color="#02ff05"/><stop offset="0.443" stop-color="#29ff00"/><stop offset="0.535" stop-color="#68ff00"/><stop offset="0.623" stop-color="#b8ff00"/><stop offset="0.685" stop-color="#feff00"/><stop offset="0.744" stop-color="#ffc400"/><stop offset="0.824" stop-color="#ff8d00"/><stop offset="0.930" stop-color="#ff5f00"/><stop offset="1.000" stop-color="#ff4b00"/></linearGradient>
<linearGradient id="r30" gradientUnits="userSpaceOnUse" x1="484.2" x2="758.0" y1="0" y2="0"><stop offset="0.000" stop-color="#00ff2e"/><stop offset="0.359" stop-color="#03ff06"/><stop offset="0.440" stop-color="#28ff00"/><stop offset="0.535" stop-color="#6bff00"/><stop offset="0.623" stop-color="#bdff00"/><stop offset="0.681" stop-color="#fffe00"/><stop offset="0.736" stop-color="#ffc500"/><stop offset="0.806" stop-color="#ff9400"/><stop offset="0.897" stop-color="#ff6800"/><stop offset="1.000" stop-color="#ff4900"/></linearGradient>
<linearGradient id="r31" gradientUnits="userSpaceOnUse" x1="484.2" x2="758.0" y1="0" y2="0"><stop offset="0.000" stop-color="#00ff30"/><stop offset="0.355" stop-color="#02ff08"/><stop offset="0.436" stop-color="#28ff00"/><stop offset="0.527" stop-color="#68ff00"/><stop offset="0.615" stop-color="#baff00"/><stop offset="0.674" stop-color="#feff00"/><stop offset="0.736" stop-color="#ffc000"/><stop offset="0.810" stop-color="#ff8e00"/><stop offset="0.901" stop-color="#ff6400"/><stop offset="1.000" stop-color="#ff4600"/></linearGradient>
<linearGradient id="r32" gradientUnits="userSpaceOnUse" x1="484.2" x2="758.0" y1="0" y2="0"><stop offset="0.000" stop-color="#00ff32"/><stop offset="0.355" stop-color="#03ff09"/><stop offset="0.436" stop-color="#29ff01"/><stop offset="0.535" stop-color="#71ff00"/><stop offset="0.626" stop-color="#cbff00"/><stop offset="0.670" stop-color="#fffe00"/><stop offset="0.725" stop-color="#ffc400"/><stop offset="0.799" stop-color="#ff9000"/><stop offset="0.894" stop-color="#ff6400"/><stop offset="1.000" stop-color="#ff4400"/></linearGradient>
<linearGradient id="r33" gradientUnits="userSpaceOnUse" x1="484.2" x2="758.0" y1="0" y2="0"><stop offset="0.000" stop-color="#00ff34"/><stop offset="0.355" stop-color="#03ff0b"/><stop offset="0.440" stop-color="#2dff01"/><stop offset="0.531" stop-color="#71ff00"/><stop offset="0.615" stop-color="#c4ff00"/><stop offset="0.667" stop-color="#fffc00"/><stop offset="0.722" stop-color="#ffc200"/><stop offset="0.799" stop-color="#ff8c00"/><stop offset="0.894" stop-color="#ff6100"/><stop offset="1.000" stop-color="#ff4200"/></linearGradient>
<linearGradient id="r34" gradientUnits="userSpaceOnUse" x1="484.2" x2="758.0" y1="0" y2="0"><stop offset="0.000" stop-color="#00ff36"/><stop offset="0.352" stop-color="#03ff0c"/><stop offset="0.432" stop-color="#2aff03"/><stop offset="0.524" stop-color="#6eff00"/><stop offset="0.604" stop-color="#beff00"/><stop offset="0.659" stop-color="#ffff00"/><stop offset="0.711" stop-color="#ffc700"/><stop offset="0.777" stop-color="#ff9500"/><stop offset="0.872" stop-color="#ff6600"/><stop offset="1.000" stop-color="#ff4000"/></linearGradient>
<linearGradient id="r35" gradientUnits="userSpaceOnUse" x1="484.2" x2="758.0" y1="0" y2="0"><stop offset="0.000" stop-color="#00ff38"/><stop offset="0.352" stop-color="#03ff0e"/><stop offset="0.436" stop-color="#2eff04"/><stop offset="0.524" stop-color="#72ff00"/><stop offset="0.601" stop-color="#bfff00"/><stop offset="0.656" stop-color="#fffc00"/><stop offset="0.711" stop-color="#ffc100"/><stop offset="0.784" stop-color="#ff8d00"/><stop offset="0.872" stop-color="#ff6300"/><stop offset="1.000" stop-color="#ff3e00"/></linearGradient>
<linearGradient id="r36" gradientUnits="userSpaceOnUse" x1="484.2" x2="758.0" y1="0" y2="0"><stop offset="0.000" stop-color="#00ff3b"/><stop offset="0.348" stop-color="#03ff10"/><stop offset="0.421" stop-color="#27ff07"/><stop offset="0.505" stop-color="#65ff00"/><stop offset="0.582" stop-color="#b0ff00"/><stop offset="0.648" stop-color="#ffff00"/><stop offset="0.707" stop-color="#ffbf00"/><stop offset="0.780" stop-color="#ff8b00"/><stop offset="0.872" stop-color="#ff6000"/><stop offset="1.000" stop-color="#ff3c00"/></linearGradient>
<linearGradient id="r37" gradientUnits="userSpaceOnUse" x1="484.2" x2="758.0" y1="0" y2="0"><stop offset="0.000" stop-color="#00ff3d"/><stop offset="0.348" stop-color="#03ff12"/><stop offset="0.421" stop-color="#29ff08"/><stop offset="0.502" stop-color="#65ff00"/><stop offset="0.579" stop-color="#b0ff00"/><stop offset="0.645" stop-color="#fffd00"/><stop offset="0.703" stop-color="#ffbd00"/><stop offset="0.777" stop-color="#ff8900"/><stop offset="0.875" stop-color="#ff5c00"/><stop offset="1.000" stop-color="#ff3a00"/></linearGradient>
<linearGradient id="r38" gradientUnits="userSpaceOnUse" x1="484.2" x2="758.0" y1="0" y2="0"><stop offset="0.000" stop-color="#00ff3f"/><stop offset="0.344" stop-color="#03ff14"/><stop offset="0.421" stop-color="#2aff0a"/><stop offset="0.505" stop-color="#6bff00"/><stop offset="0.590" stop-color="#c2ff00"/><stop offset="0.637" stop-color="#feff00"/><stop offset="0.700" stop-color="#ffbb00"/><stop offset="0.773" stop-color="#ff8700"/><stop offset="0.875" stop-color="#ff5900"/><stop offset="1.000" stop-color="#ff3800"/></linearGradient>
<linearGradient id="r39" gradientUnits="userSpaceOnUse" x1="484.2" x2="758.0" y1="0" y2="0"><stop offset="0.000" stop-color="#00ff42"/><stop offset="0.344" stop-color="#03ff16"/><stop offset="0.429" stop-color="#31ff0a"/><stop offset="0.516" stop-color="#79ff00"/><stop offset="0.601" stop-color="#d5ff00"/><stop offset="0.634" stop-color="#fffd00"/><stop offset="0.685" stop-color="#ffc300"/><stop offset="0.751" stop-color="#ff9000"/><stop offset="0.842" stop-color="#ff6200"/><stop offset="0.982" stop-color="#ff3900"/><stop offset="1.000" stop-color="#ff3600"/></linearGradient>
<linearGradient id="r40" gradientUnits="userSpaceOnUse" x1="484.2" x2="758.0" y1="0" y2="0"><stop offset="0.000" stop-color="#00ff44"/><stop offset="0.341" stop-color="#03ff19"/><stop offset="0.407" stop-color="#24ff0f"/><stop offset="0.487" stop-color="#61ff04"/><stop offset="0.564" stop-color="#afff00"/><stop offset="0.626" stop-color="#feff00"/><stop offset="0.678" stop-color="#ffc400"/><stop offset="0.747" stop-color="#ff8e00"/><stop offset="0.835" stop-color="#ff6200"/><stop offset="0.963" stop-color="#ff3b00"/><stop offset="1.000" stop-color="#ff3400"/></linearGradient>
<linearGradient id="r41" gradientUnits="userSpaceOnUse" x1="484.2" x2="758.0" y1="0" y2="0"><stop offset="0.000" stop-color="#00ff47"/><stop offset="0.341" stop-color="#03ff1b"/><stop offset="0.418" stop-color="#2dff10"/><stop offset="0.502" stop-color="#72ff04"/><stop offset="0.586" stop-color="#cfff00"/><stop offset="0.623" stop-color="#fffe00"/><stop offset="0.667" stop-color="#ffc900"/><stop offset="0.733" stop-color="#ff9300"/><stop offset="0.817" stop-color="#ff6600"/><stop offset="0.945" stop-color="#ff3d00"/><stop offset="1.000" stop-color="#ff3200"/></linearGradient>
<linearGradient id="r42" gradientUnits="userSpaceOnUse" x1="484.2" x2="758.0" y1="0" y2="0"><stop offset="0.000" stop-color="#00ff49"/><stop offset="0.337" stop-color="#03ff1e"/><stop offset="0.403" stop-color="#25ff14"/><stop offset="0.480" stop-color="#61ff08"/><stop offset="0.557" stop-color="#b1ff00"/><stop offset="0.615" stop-color="#fdff00"/><stop offset="0.674" stop-color="#ffbc00"/><stop offset="0.744" stop-color="#ff8800"/><stop offset="0.832" stop-color="#ff5d00"/><stop offset="0.967" stop-color="#ff3600"/><stop offset="1.000" stop-color="#ff3000"/></linearGradient>
<linearGradient id="r43" gradientUnits="userSpaceOnUse" x1="484.2" x2="758.0" y1="0" y2="0"><stop offset="0.000" stop-color="#00ff4c"/><stop offset="0.337" stop-color="#03ff20"/><stop offset="0.414" stop-color="#2eff14"/><stop offset="0.498" stop-color="#76ff07"/><stop offset="0.571" stop-color="#c9ff00"/><stop offset="0.612" stop-color="#fffe00"/><stop offset="0.659" stop-color="#ffc500"/><stop offset="0.725" stop-color="#ff8f00"/><stop offset="0.813" stop-color="#ff6100"/><stop offset="0.938" stop-color="#ff3b00"/><stop offset="1.000" stop-color="#ff2e00"/></linearGradient>
<linearGradient id="r44" gradientUnits="userSpaceOnUse" x1="484.2" x2="758.0" y1="0" y2="0"><stop offset="0.000" stop-color="#00ff4f"/><stop offset="0.333" stop-color="#03ff23"/><stop offset="0.407" stop-color="#2bff18"/><stop offset="0.480" stop-color="#68ff0c"/><stop offset="0.553" stop-color="#b8ff01"/><stop offset="0.608" stop-color="#fffc00"/><stop offset="0.656" stop-color="#ffc200"/><stop offset="0.722" stop-color="#ff8d00"/><stop offset="0.806" stop-color="#ff6100"/><stop offset="0.934" stop-color="#ff3900"/><stop offset="1.000" stop-color="#ff2c00"/></linearGradient>
<linearGradient id="r45" gradientUnits="userSpaceOnUse" x1="484.2" x2="758.0" y1="0" y2="0"><stop offset="0.000" stop-color="#00ff52"/><stop offset="0.333" stop-color="#03ff26"/><stop offset="0.399" stop-color="#28ff1b"/><stop offset="0.476" stop-color="#68ff0e"/><stop offset="0.549" stop-color="#b9ff03"/><stop offset="0.601" stop-color="#ffff00"/><stop offset="0.641" stop-color="#ffcc00"/><stop offset="0.696" stop-color="#ff9a00"/><stop offset="0.773" stop-color="#ff6c00"/><stop offset="0.886" stop-color="#ff4300"/><stop offset="1.000" stop-color="#ff2a00"/></linearGradient>
<linearGradient id="r46" gradientUnits="userSpaceOnUse" x1="484.2" x2="758.0" y1="0" y2="0"><stop offset="0.000" stop-color="#00ff55"/><stop offset="0.330" stop-color="#02ff29"/><stop offset="0.396" stop-color="#27ff1e"/><stop offset="0.469" stop-color="#64ff12"/><stop offset="0.546" stop-color="#baff05"/><stop offset="0.597" stop-color="#fffc00"/><stop offset="0.641" stop-color="#ffc500"/><stop offset="0.703" stop-color="#ff9000"/><stop offset="0.788" stop-color="#ff6200"/><stop offset="0.905" stop-color="#ff3c00"/><stop offset="1.000" stop-color="#ff2800"/></linearGradient>
<linearGradient id="r47" gradientUnits="userSpaceOnUse" x1="484.2" x2="758.0" y1="0" y2="0"><stop offset="0.000" stop-color="#00ff58"/><stop offset="0.330" stop-color="#03ff2c"/><stop offset="0.396" stop-color="#29ff21"/><stop offset="0.469" stop-color="#68ff14"/><stop offset="0.538" stop-color="#b7ff08"/><stop offset="0.590" stop-color="#ffff00"/><stop offset="0.634" stop-color="#ffc700"/><stop offset="0.692" stop-color="#ff9300"/><stop offset="0.773" stop-color="#ff6500"/><stop offset="0.890" stop-color="#ff3d00"/><stop offset="1.000" stop-color="#ff2600"/></linearGradient>
<linearGradient id="r48" gradientUnits="userSpaceOnUse" x1="484.2" x2="758.0" y1="0" y2="0"><stop offset="0.000" stop-color="#00ff5b"/><stop offset="0.326" stop-color="#02ff2f"/><stop offset="0.392" stop-color="#28ff24"/><stop offset="0.465" stop-color="#68ff17"/><stop offset="0.535" stop-color="#b8ff0b"/><stop offset="0.586" stop-color="#fffd02"/><stop offset="0.630" stop-color="#ffc400"/><stop offset="0.692" stop-color="#ff8e00"/><stop offset="0.777" stop-color="#ff6000"/><stop offset="0.886" stop-color="#ff3c00"/><stop offset="1.000" stop-color="#ff2500"/></linearGradient>
<linearGradient id="r49" gradientUnits="userSpaceOnUse" x1="484.2" x2="758.0" y1="0" y2="0"><stop offset="0.000" stop-color="#00ff5e"/><stop offset="0.326" stop-color="#03ff32"/><stop offset="0.392" stop-color="#2aff27"/><stop offset="0.465" stop-color="#6cff1a"/><stop offset="0.535" stop-color="#beff0d"/><stop offset="0.579" stop-color="#feff05"/><stop offset="0.623" stop-color="#ffc600"/><stop offset="0.681" stop-color="#ff9100"/><stop offset="0.762" stop-color="#ff6300"/><stop offset="0.872" stop-color="#ff3d00"/><stop offset="1.000" stop-color="#ff2300"/></linearGradient>
<linearGradient id="r50" gradientUnits="userSpaceOnUse" x1="484.2" x2="758.0" y1="0" y2="0"><stop offset="0.000" stop-color="#00ff62"/><stop offset="0.322" stop-color="#02ff36"/><stop offset="0.385" stop-color="#27ff2b"/><stop offset="0.454" stop-color="#64ff1f"/><stop offset="0.524" stop-color="#b6ff11"/><stop offset="0.575" stop-color="#fffd08"/><stop offset="0.619" stop-color="#ffc300"/><stop offset="0.681" stop-color="#ff8c00"/><stop offset="0.769" stop-color="#ff5c00"/><stop offset="0.886" stop-color="#ff3700"/><stop offset="1.000" stop-color="#ff2100"/></linearGradient>
<linearGradient id="r51" gradientUnits="userSpaceOnUse" x1="484.2" x2="758.0" y1="0" y2="0"><stop offset="0.000" stop-color="#00ff65"/><stop offset="0.322" stop-color="#03ff39"/><stop offset="0.381" stop-color="#26ff2f"/><stop offset="0.454" stop-color="#68ff22"/><stop offset="0.524" stop-color="#bcff14"/><stop offset="0.568" stop-color="#feff0b"/><stop offset="0.615" stop-color="#ffc102"/><stop offset="0.670" stop-color="#ff8f00"/><stop offset="0.747" stop-color="#ff6200"/><stop offset="0.857" stop-color="#ff3c00"/><stop offset="1.000" stop-color="#ff1f00"/></linearGradient>
<linearGradient id="r52" gradientUnits="userSpaceOnUse" x1="484.2" x2="758.0" y1="0" y2="0"><stop offset="0.000" stop-color="#00ff69"/><stop offset="0.319" stop-color="#02ff3d"/><stop offset="0.377" stop-color="#25ff33"/><stop offset="0.447" stop-color="#64ff26"/><stop offset="0.513" stop-color="#b3ff19"/><stop offset="0.564" stop-color="#fffe0f"/><stop offset="0.608" stop-color="#ffc204"/><stop offset="0.667" stop-color="#ff8d00"/><stop offset="0.740" stop-color="#ff6200"/><stop offset="0.850" stop-color="#ff3b00"/><stop offset="1.000" stop-color="#ff1e00"/></linearGradient>
<linearGradient id="r53" gradientUnits="userSpaceOnUse" x1="484.2" x2="758.0" y1="0" y2="0"><stop offset="0.000" stop-color="#00ff6c"/><stop offset="0.319" stop-color="#03ff41"/><stop offset="0.377" stop-color="#27ff37"/><stop offset="0.447" stop-color="#68ff2a"/><stop offset="0.509" stop-color="#b5ff1d"/><stop offset="0.557" stop-color="#fdff13"/><stop offset="0.601" stop-color="#ffc407"/><stop offset="0.656" stop-color="#ff9000"/><stop offset="0.729" stop-color="#ff6400"/><stop offset="0.824" stop-color="#ff4000"/><stop offset="0.971" stop-color="#ff2000"/><stop offset="1.000" stop-color="#ff1c00"/></linearGradient>
<linearGradient id="r54" gradientUnits="userSpaceOnUse" x1="484.2" x2="758.0" y1="0" y2="0"><stop offset="0.000" stop-color="#00ff70"/><stop offset="0.315" stop-color="#02ff45"/><stop offset="0.374" stop-color="#26ff3b"/><stop offset="0.447" stop-color="#6cff2d"/><stop offset="0.509" stop-color="#bbff20"/><stop offset="0.553" stop-color="#fffe17"/><stop offset="0.601" stop-color="#ffbd09"/><stop offset="0.659" stop-color="#ff8800"/><stop offset="0.751" stop-color="#ff5600"/><stop offset="0.861" stop-color="#ff3300"/><stop offset="1.000" stop-color="#ff1a00"/></linearGradient>
<linearGradient id="r55" gradientUnits="userSpaceOnUse" x1="484.2" x2="758.0" y1="0" y2="0"><stop offset="0.000" stop-color="#00ff74"/><stop offset="0.315" stop-color="#03ff49"/><stop offset="0.374" stop-color="#28ff3f"/><stop offset="0.447" stop-color="#70ff31"/><stop offset="0.509" stop-color="#c2ff24"/><stop offset="0.546" stop-color="#fcff1c"/><stop offset="0.597" stop-color="#ffba0c"/><stop offset="0.656" stop-color="#ff8602"/><stop offset="0.747" stop-color="#ff5400"/><stop offset="0.868" stop-color="#ff2f00"/><stop offset="1.000" stop-color="#ff1900"/></linearGradient>
<linearGradient id="r56" gradientUnits="userSpaceOnUse" x1="484.2" x2="758.0" y1="0" y2="0"><stop offset="0.000" stop-color="#00ff78"/><stop offset="0.311" stop-color="#02ff4e"/><stop offset="0.366" stop-color="#25ff45"/><stop offset="0.432" stop-color="#64ff38"/><stop offset="0.495" stop-color="#b3ff2b"/><stop offset="0.542" stop-color="#ffff20"/><stop offset="0.582" stop-color="#ffc411"/><stop offset="0.634" stop-color="#ff9206"/><stop offset="0.696" stop-color="#ff6900"/><stop offset="0.780" stop-color="#ff4500"/><stop offset="0.912" stop-color="#ff2400"/><stop offset="1.000" stop-color="#ff1700"/></linearGradient>
<linearGradient id="r57" gradientUnits="userSpaceOnUse" x1="484.2" x2="758.0" y1="0" y2="0"><stop offset="0.000" stop-color="#00ff7d"/><stop offset="0.311" stop-color="#03ff53"/><stop offset="0.363" stop-color="#24ff4a"/><stop offset="0.425" stop-color="#60ff3e"/><stop offset="0.487" stop-color="#afff31"/><stop offset="0.538" stop-color="#fffc24"/><stop offset="0.575" stop-color="#ffc616"/><stop offset="0.626" stop-color="#ff9209"/><stop offset="0.696" stop-color="#ff6400"/><stop offset="0.799" stop-color="#ff3c00"/><stop offset="0.945" stop-color="#ff1d00"/><stop offset="1.000" stop-color="#ff1600"/></linearGradient>
<linearGradient id="r58" gradientUnits="userSpaceOnUse" x1="484.2" x2="758.0" y1="0" y2="0"><stop offset="0.000" stop-color="#00ff81"/><stop offset="0.311" stop-color="#03ff57"/><stop offset="0.370" stop-color="#2cff4d"/><stop offset="0.432" stop-color="#6cff41"/><stop offset="0.498" stop-color="#c7ff32"/><stop offset="0.531" stop-color="#ffff2b"/><stop offset="0.571" stop-color="#ffc319"/><stop offset="0.619" stop-color="#ff930c"/><stop offset="0.685" stop-color="#ff6601"/><stop offset="0.780" stop-color="#ff3f00"/><stop offset="0.919" stop-color="#ff1f00"/><stop offset="1.000" stop-color="#ff1400"/></linearGradient>
<linearGradient id="r59" gradientUnits="userSpaceOnUse" x1="484.2" x2="758.0" y1="0" y2="0"><stop offset="0.000" stop-color="#00ff86"/><stop offset="0.308" stop-color="#03ff5d"/><stop offset="0.359" stop-color="#25ff54"/><stop offset="0.418" stop-color="#5fff48"/><stop offset="0.476" stop-color="#adff3c"/><stop offset="0.527" stop-color="#fffc2f"/><stop offset="0.568" stop-color="#ffc01c"/><stop offset="0.619" stop-color="#ff8d0d"/><stop offset="0.685" stop-color="#ff6202"/><stop offset="0.780" stop-color="#ff3c00"/><stop offset="0.919" stop-color="#ff1d00"/><stop offset="1.000" stop-color="#ff1300"/></linearGradient>
<linearGradient id="r60" gradientUnits="userSpaceOnUse" x1="484.2" x2="758.0" y1="0" y2="0"><stop offset="0.000" stop-color="#00ff8a"/><stop offset="0.308" stop-color="#03ff62"/><stop offset="0.363" stop-color="#2aff58"/><stop offset="0.436" stop-color="#7aff4a"/><stop offset="0.491" stop-color="#cbff3d"/><stop offset="0.520" stop-color="#feff36"/><stop offset="0.564" stop-color="#ffbd20"/><stop offset="0.619" stop-color="#ff870f"/><stop offset="0.692" stop-color="#ff5a03"/><stop offset="0.795" stop-color="#ff3500"/><stop offset="0.949" stop-color="#ff1700"/><stop offset="1.000" stop-color="#ff1100"/></linearGradient>
<linearGradient id="r61" gradientUnits="userSpaceOnUse" x1="484.2" x2="758.0" y1="0" y2="0"><stop offset="0.000" stop-color="#00ff8f"/><stop offset="0.304" stop-color="#03ff68"/><stop offset="0.355" stop-color="#26ff5f"/><stop offset="0.414" stop-color="#63ff53"/><stop offset="0.473" stop-color="#b5ff47"/><stop offset="0.516" stop-color="#fffd3c"/><stop offset="0.553" stop-color="#ffc427"/><stop offset="0.601" stop-color="#ff9116"/><stop offset="0.667" stop-color="#ff6307"/><stop offset="0.762" stop-color="#ff3c00"/><stop offset="0.897" stop-color="#ff1d00"/><stop offset="1.000" stop-color="#ff1000"/></linearGradient>
<linearGradient id="r62" gradientUnits="userSpaceOnUse" x1="484.2" x2="758.0" y1="0" y2="0"><stop offset="0.000" stop-color="#00ff94"/><stop offset="0.300" stop-color="#02ff6e"/><stop offset="0.352" stop-color="#25ff65"/><stop offset="0.421" stop-color="#71ff58"/><stop offset="0.480" stop-color="#c8ff4b"/><stop offset="0.509" stop-color="#fdff44"/><stop offset="0.549" stop-color="#ffc12b"/><stop offset="0.597" stop-color="#ff8e19"/><stop offset="0.663" stop-color="#ff6109"/><stop offset="0.758" stop-color="#ff3a00"/><stop offset="0.890" stop-color="#ff1c00"/><stop offset="1.000" stop-color="#ff0e00"/></linearGradient>
<linearGradient id="r63" gradientUnits="userSpaceOnUse" x1="484.2" x2="758.0" y1="0" y2="0"><stop offset="0.000" stop-color="#00ff99"/><stop offset="0.293" stop-color="#00ff75"/><stop offset="0.333" stop-color="#18ff6e"/><stop offset="0.388" stop-color="#4dff64"/><stop offset="0.447" stop-color="#9bff58"/><stop offset="0.498" stop-color="#f2ff4c"/><stop offset="0.505" stop-color="#fffe4a"/><stop offset="0.542" stop-color="#ffc232"/><stop offset="0.593" stop-color="#ff8b1c"/><stop offset="0.659" stop-color="#ff5f0b"/><stop offset="0.755" stop-color="#ff3800"/><stop offset="0.897" stop-color="#ff1900"/><stop offset="1.000" stop-color="#ff0d00"/></linearGradient>
<linearGradient id="r64" gradientUnits="userSpaceOnUse" x1="484.2" x2="758.0" y1="0" y2="0"><stop offset="0.000" stop-color="#00ff9f"/><stop offset="0.300" stop-color="#03ff7a"/><stop offset="0.352" stop-color="#2aff71"/><stop offset="0.410" stop-color="#6dff66"/><stop offset="0.462" stop-color="#baff5b"/><stop offset="0.498" stop-color="#fcff52"/><stop offset="0.538" stop-color="#ffbf36"/><stop offset="0.586" stop-color="#ff8c20"/><stop offset="0.648" stop-color="#ff600f"/><stop offset="0.751" stop-color="#ff3601"/><stop offset="0.886" stop-color="#ff1900"/><stop offset="1.000" stop-color="#ff0c00"/></linearGradient>
<linearGradient id="r65" gradientUnits="userSpaceOnUse" x1="484.2" x2="758.0" y1="0" y2="0"><stop offset="0.000" stop-color="#00ffa4"/><stop offset="0.289" stop-color="#00ff82"/><stop offset="0.326" stop-color="#16ff7c"/><stop offset="0.381" stop-color="#4cff72"/><stop offset="0.440" stop-color="#9dff67"/><stop offset="0.495" stop-color="#fffe5a"/><stop offset="0.535" stop-color="#ffbc3b"/><stop offset="0.582" stop-color="#ff8924"/><stop offset="0.648" stop-color="#ff5c10"/><stop offset="0.736" stop-color="#ff3803"/><stop offset="0.861" stop-color="#ff1b00"/><stop offset="1.000" stop-color="#ff0a00"/></linearGradient>
<linearGradient id="r66" gradientUnits="userSpaceOnUse" x1="484.2" x2="758.0" y1="0" y2="0"><stop offset="0.000" stop-color="#00ffaa"/><stop offset="0.293" stop-color="#01ff88"/><stop offset="0.344" stop-color="#28ff80"/><stop offset="0.399" stop-color="#68ff76"/><stop offset="0.447" stop-color="#b0ff6c"/><stop offset="0.487" stop-color="#fcff63"/><stop offset="0.527" stop-color="#ffbe42"/><stop offset="0.579" stop-color="#ff8627"/><stop offset="0.645" stop-color="#ff5913"/><stop offset="0.736" stop-color="#ff3504"/><stop offset="0.868" stop-color="#ff1800"/><stop offset="1.000" stop-color="#ff0900"/></linearGradient>
<linearGradient id="r67" gradientUnits="userSpaceOnUse" x1="484.2" x2="758.0" y1="0" y2="0"><stop offset="0.000" stop-color="#00ffb0"/><stop offset="0.293" stop-color="#02ff8f"/><stop offset="0.341" stop-color="#27ff88"/><stop offset="0.396" stop-color="#68ff7e"/><stop offset="0.447" stop-color="#b8ff74"/><stop offset="0.484" stop-color="#ffff6b"/><stop offset="0.516" stop-color="#ffc54d"/><stop offset="0.557" stop-color="#ff9434"/><stop offset="0.612" stop-color="#ff681d"/><stop offset="0.692" stop-color="#ff400b"/><stop offset="0.813" stop-color="#ff2000"/><stop offset="0.985" stop-color="#ff0900"/><stop offset="1.000" stop-color="#ff0800"/></linearGradient>
<linearGradient id="r68" gradientUnits="userSpaceOnUse" x1="484.2" x2="758.0" y1="0" y2="0"><stop offset="0.000" stop-color="#00ffb7"/><stop offset="0.293" stop-color="#03ff97"/><stop offset="0.341" stop-color="#2aff8f"/><stop offset="0.392" stop-color="#68ff86"/><stop offset="0.440" stop-color="#b3ff7d"/><stop offset="0.476" stop-color="#fbff75"/><stop offset="0.491" stop-color="#ffe667"/><stop offset="0.527" stop-color="#ffae47"/><stop offset="0.579" stop-color="#ff7a2b"/><stop offset="0.652" stop-color="#ff4d14"/><stop offset="0.758" stop-color="#ff2903"/><stop offset="0.919" stop-color="#ff0e00"/><stop offset="1.000" stop-color="#ff0700"/></linearGradient>
<linearGradient id="r69" gradientUnits="userSpaceOnUse" x1="484.2" x2="758.0" y1="0" y2="0"><stop offset="0.000" stop-color="#00ffbd"/><stop offset="0.289" stop-color="#02ff9f"/><stop offset="0.337" stop-color="#29ff98"/><stop offset="0.388" stop-color="#68ff8f"/><stop offset="0.440" stop-color="#bcff86"/><stop offset="0.473" stop-color="#feff7f"/><stop offset="0.509" stop-color="#ffbe58"/><stop offset="0.553" stop-color="#ff8a3a"/><stop offset="0.615" stop-color="#ff5c20"/><stop offset="0.700" stop-color="#ff370c"/><stop offset="0.824" stop-color="#ff1900"/><stop offset="1.000" stop-color="#ff0600"/></linearGradient>
<linearGradient id="r70" gradientUnits="userSpaceOnUse" x1="484.2" x2="758.0" y1="0" y2="0"><stop offset="0.000" stop-color="#00ffc4"/><stop offset="0.289" stop-color="#03ffa7"/><stop offset="0.333" stop-color="#28ffa1"/><stop offset="0.385" stop-color="#68ff99"/><stop offset="0.432" stop-color="#b7ff90"/><stop offset="0.469" stop-color="#fffc87"/><stop offset="0.502" stop-color="#ffc062"/><stop offset="0.542" stop-color="#ff8e43"/><stop offset="0.601" stop-color="#ff6027"/><stop offset="0.681" stop-color="#ff3a11"/><stop offset="0.795" stop-color="#ff1c02"/><stop offset="0.989" stop-color="#ff0500"/><stop offset="1.000" stop-color="#ff0400"/></linearGradient>
<linearGradient id="r71" gradientUnits="userSpaceOnUse" x1="484.2" x2="758.0" y1="0" y2="0"><stop offset="0.000" stop-color="#00ffcb"/><stop offset="0.286" stop-color="#02ffb0"/><stop offset="0.330" stop-color="#27ffab"/><stop offset="0.377" stop-color="#62ffa4"/><stop offset="0.425" stop-color="#b2ff9c"/><stop offset="0.462" stop-color="#feff95"/><stop offset="0.495" stop-color="#ffc26c"/><stop offset="0.535" stop-color="#ff8f4a"/><stop offset="0.590" stop-color="#ff622d"/><stop offset="0.663" stop-color="#ff3d16"/><stop offset="0.784" stop-color="#ff1c03"/><stop offset="0.963" stop-color="#ff0600"/><stop offset="1.000" stop-color="#ff0300"/></linearGradient>
<linearGradient id="r72" gradientUnits="userSpaceOnUse" x1="484.2" x2="758.0" y1="0" y2="0"><stop offset="0.000" stop-color="#00ffd3"/><stop offset="0.286" stop-color="#03ffba"/><stop offset="0.330" stop-color="#29ffb4"/><stop offset="0.388" stop-color="#79ffac"/><stop offset="0.432" stop-color="#c9ffa5"/><stop offset="0.458" stop-color="#fffd9f"/><stop offset="0.487" stop-color="#ffc477"/><stop offset="0.527" stop-color="#ff9052"/><stop offset="0.571" stop-color="#ff6937"/><stop offset="0.648" stop-color="#ff3f1b"/><stop offset="0.758" stop-color="#ff1f07"/><stop offset="0.886" stop-color="#ff0c00"/><stop offset="1.000" stop-color="#ff0200"/></linearGradient>
<linearGradient id="r73" gradientUnits="userSpaceOnUse" x1="484.2" x2="758.0" y1="0" y2="0"><stop offset="0.000" stop-color="#00ffda"/><stop offset="0.282" stop-color="#02ffc4"/><stop offset="0.326" stop-color="#28ffbf"/><stop offset="0.381" stop-color="#73ffb8"/><stop offset="0.425" stop-color="#c4ffb1"/><stop offset="0.451" stop-color="#fdffad"/><stop offset="0.484" stop-color="#ffc17e"/><stop offset="0.520" stop-color="#ff905a"/><stop offset="0.571" stop-color="#ff6439"/><stop offset="0.645" stop-color="#ff3d1e"/><stop offset="0.766" stop-color="#ff1b07"/><stop offset="0.897" stop-color="#ff0900"/><stop offset="1.000" stop-color="#ff0200"/></linearGradient>
<linearGradient id="r74" gradientUnits="userSpaceOnUse" x1="484.2" x2="758.0" y1="0" y2="0"><stop offset="0.000" stop-color="#00ffe2"/><stop offset="0.282" stop-color="#03ffce"/><stop offset="0.326" stop-color="#2bffca"/><stop offset="0.370" stop-color="#68ffc5"/><stop offset="0.414" stop-color="#b7ffbf"/><stop offset="0.447" stop-color="#fffdb9"/><stop offset="0.476" stop-color="#ffc38a"/><stop offset="0.513" stop-color="#ff9163"/><stop offset="0.564" stop-color="#ff633f"/><stop offset="0.637" stop-color="#ff3c22"/><stop offset="0.755" stop-color="#ff1b09"/><stop offset="0.897" stop-color="#ff0800"/><stop offset="1.000" stop-color="#ff0100"/></linearGradient>
<linearGradient id="r75" gradientUnits="userSpaceOnUse" x1="484.2" x2="758.0" y1="0" y2="0"><stop offset="0.000" stop-color="#00ffeb"/><stop offset="0.278" stop-color="#02ffd9"/><stop offset="0.315" stop-color="#22ffd6"/><stop offset="0.366" stop-color="#68ffd1"/><stop offset="0.410" stop-color="#b9ffcc"/><stop offset="0.440" stop-color="#fcffc8"/><stop offset="0.476" stop-color="#ffb98d"/><stop offset="0.516" stop-color="#ff8562"/><stop offset="0.571" stop-color="#ff593e"/><stop offset="0.648" stop-color="#ff3420"/><stop offset="0.773" stop-color="#ff1508"/><stop offset="0.912" stop-color="#ff0500"/><stop offset="1.000" stop-color="#ff0000"/></linearGradient>
<linearGradient id="r76" gradientUnits="userSpaceOnUse" x1="484.2" x2="758.0" y1="0" y2="0"><stop offset="0.000" stop-color="#00fff3"/><stop offset="0.278" stop-color="#03ffe5"/><stop offset="0.315" stop-color="#25ffe2"/><stop offset="0.359" stop-color="#62ffdf"/><stop offset="0.403" stop-color="#b3ffda"/><stop offset="0.436" stop-color="#fffed6"/><stop offset="0.462" stop-color="#ffc8a6"/><stop offset="0.495" stop-color="#ff967a"/><stop offset="0.546" stop-color="#ff654f"/><stop offset="0.619" stop-color="#ff3c2b"/><stop offset="0.729" stop-color="#ff1b0f"/><stop offset="0.886" stop-color="#ff0600"/><stop offset="1.000" stop-color="#ff0000"/></linearGradient>
<linearGradient id="r77" gradientUnits="userSpaceOnUse" x1="484.2" x2="758.0" y1="0" y2="0"><stop offset="0.000" stop-color="#00fffc"/><stop offset="0.275" stop-color="#01fff1"/><stop offset="0.311" stop-color="#23ffef"/><stop offset="0.355" stop-color="#62ffec"/><stop offset="0.403" stop-color="#bdffe9"/><stop offset="0.429" stop-color="#fbffe7"/><stop offset="0.443" stop-color="#ffe0ca"/><stop offset="0.473" stop-color="#ffab98"/><stop offset="0.516" stop-color="#ff7767"/><stop offset="0.575" stop-color="#ff4d40"/><stop offset="0.656" stop-color="#ff2b21"/><stop offset="0.780" stop-color="#ff1009"/><stop offset="0.923" stop-color="#ff0200"/><stop offset="1.000" stop-color="#ff0000"/></linearGradient>
<linearGradient id="r78" gradientUnits="userSpaceOnUse" x1="484.2" x2="758.0" y1="0" y2="0"><stop offset="0.000" stop-color="#00f8ff"/><stop offset="0.275" stop-color="#03fffe"/><stop offset="0.308" stop-color="#22fffd"/><stop offset="0.352" stop-color="#61fffb"/><stop offset="0.396" stop-color="#b7fff9"/><stop offset="0.425" stop-color="#fffff7"/><stop offset="0.451" stop-color="#ffc6bf"/><stop offset="0.480" stop-color="#ff9891"/><stop offset="0.524" stop-color="#ff6a64"/><stop offset="0.582" stop-color="#ff443e"/><stop offset="0.670" stop-color="#ff241f"/><stop offset="0.795" stop-color="#ff0c08"/><stop offset="0.945" stop-color="#ff0000"/><stop offset="1.000" stop-color="#ff0000"/></linearGradient>
<linearGradient id="r79" gradientUnits="userSpaceOnUse" x1="484.2" x2="758.0" y1="0" y2="0"><stop offset="0.000" stop-color="#00efff"/><stop offset="0.271" stop-color="#01f2ff"/><stop offset="0.308" stop-color="#23f3ff"/><stop offset="0.352" stop-color="#63f4ff"/><stop offset="0.392" stop-color="#b2f5ff"/><stop offset="0.421" stop-color="#faf5ff"/><stop offset="0.429" stop-color="#ffe8f1"/><stop offset="0.458" stop-color="#ffafb5"/><stop offset="0.495" stop-color="#ff7f82"/><stop offset="0.546" stop-color="#ff5456"/><stop offset="0.612" stop-color="#ff3333"/><stop offset="0.733" stop-color="#ff1312"/><stop offset="0.905" stop-color="#ff0100"/><stop offset="1.000" stop-color="#ff0000"/></linearGradient>
<linearGradient id="r80" gradientUnits="userSpaceOnUse" x1="484.2" x2="758.0" y1="0" y2="0"><stop offset="0.000" stop-color="#00e6ff"/><stop offset="0.271" stop-color="#02e6ff"/><stop offset="0.308" stop-color="#24e6ff"/><stop offset="0.352" stop-color="#63e5ff"/><stop offset="0.392" stop-color="#b1e5ff"/><stop offset="0.425" stop-color="#ffe4fe"/><stop offset="0.451" stop-color="#ffb1c5"/><stop offset="0.484" stop-color="#ff8392"/><stop offset="0.527" stop-color="#ff5b66"/><stop offset="0.586" stop-color="#ff3a40"/><stop offset="0.674" stop-color="#ff1d21"/><stop offset="0.810" stop-color="#ff0708"/><stop offset="0.967" stop-color="#ff0000"/><stop offset="1.000" stop-color="#ff0000"/></linearGradient>
<linearGradient id="r81" gradientUnits="userSpaceOnUse" x1="484.2" x2="758.0" y1="0" y2="0"><stop offset="0.000" stop-color="#00deff"/><stop offset="0.271" stop-color="#03daff"/><stop offset="0.311" stop-color="#2ad9ff"/><stop offset="0.355" stop-color="#6ad7ff"/><stop offset="0.396" stop-color="#b7d6ff"/><stop offset="0.425" stop-color="#fdd5ff"/><stop offset="0.454" stop-color="#ffa1c1"/><stop offset="0.491" stop-color="#ff748c"/><stop offset="0.538" stop-color="#ff4e5f"/><stop offset="0.608" stop-color="#ff2d38"/><stop offset="0.714" stop-color="#ff1218"/><stop offset="0.879" stop-color="#ff0103"/><stop offset="1.000" stop-color="#ff0000"/></linearGradient>
<linearGradient id="r82" gradientUnits="userSpaceOnUse" x1="484.2" x2="758.0" y1="0" y2="0"><stop offset="0.000" stop-color="#00d5ff"/><stop offset="0.267" stop-color="#02ceff"/><stop offset="0.304" stop-color="#22cdff"/><stop offset="0.352" stop-color="#64caff"/><stop offset="0.392" stop-color="#aec8ff"/><stop offset="0.425" stop-color="#fac6ff"/><stop offset="0.432" stop-color="#ffbbf1"/><stop offset="0.465" stop-color="#ff88b2"/><stop offset="0.502" stop-color="#ff6282"/><stop offset="0.557" stop-color="#ff3e55"/><stop offset="0.634" stop-color="#ff2130"/><stop offset="0.747" stop-color="#ff0b13"/><stop offset="0.908" stop-color="#ff0001"/><stop offset="1.000" stop-color="#ff0000"/></linearGradient>
<linearGradient id="r83" gradientUnits="userSpaceOnUse" x1="484.2" x2="758.0" y1="0" y2="0"><stop offset="0.000" stop-color="#00cdff"/><stop offset="0.267" stop-color="#03c3ff"/><stop offset="0.308" stop-color="#27c1ff"/><stop offset="0.352" stop-color="#64beff"/><stop offset="0.392" stop-color="#adbbff"/><stop offset="0.429" stop-color="#ffb7fd"/><stop offset="0.458" stop-color="#ff89c0"/><stop offset="0.498" stop-color="#ff5f89"/><stop offset="0.549" stop-color="#ff3d5c"/><stop offset="0.626" stop-color="#ff2034"/><stop offset="0.747" stop-color="#ff0914"/><stop offset="0.897" stop-color="#ff0003"/><stop offset="1.000" stop-color="#ff0000"/></linearGradient>
<linearGradient id="r84" gradientUnits="userSpaceOnUse" x1="484.2" x2="758.0" y1="0" y2="0"><stop offset="0.000" stop-color="#00c5ff"/><stop offset="0.264" stop-color="#01b9ff"/><stop offset="0.308" stop-color="#28b5ff"/><stop offset="0.355" stop-color="#6ab2ff"/><stop offset="0.399" stop-color="#bbaeff"/><stop offset="0.429" stop-color="#feaaff"/><stop offset="0.458" stop-color="#ff80c3"/><stop offset="0.502" stop-color="#ff5687"/><stop offset="0.557" stop-color="#ff3559"/><stop offset="0.634" stop-color="#ff1b33"/><stop offset="0.744" stop-color="#ff0816"/><stop offset="0.883" stop-color="#ff0004"/><stop offset="1.000" stop-color="#ff0000"/></linearGradient>
<linearGradient id="r85" gradientUnits="userSpaceOnUse" x1="484.2" x2="758.0" y1="0" y2="0"><stop offset="0.000" stop-color="#00beff"/><stop offset="0.264" stop-color="#02aeff"/><stop offset="0.308" stop-color="#29abff"/><stop offset="0.355" stop-color="#6aa6ff"/><stop offset="0.399" stop-color="#baa1ff"/><stop offset="0.429" stop-color="#fb9eff"/><stop offset="0.443" stop-color="#ff8ae2"/><stop offset="0.473" stop-color="#ff68af"/><stop offset="0.509" stop-color="#ff4a82"/><stop offset="0.564" stop-color="#ff2e57"/><stop offset="0.645" stop-color="#ff1631"/><stop offset="0.762" stop-color="#ff0414"/><stop offset="0.941" stop-color="#ff0001"/><stop offset="1.000" stop-color="#ff0000"/></linearGradient>
<linearGradient id="r86" gradientUnits="userSpaceOnUse" x1="484.2" x2="758.0" y1="0" y2="0"><stop offset="0.000" stop-color="#00b6ff"/><stop offset="0.264" stop-color="#03a5ff"/><stop offset="0.308" stop-color="#2aa0ff"/><stop offset="0.359" stop-color="#709bff"/><stop offset="0.403" stop-color="#c095ff"/><stop offset="0.432" stop-color="#ff90fd"/><stop offset="0.458" stop-color="#ff6fc9"/><stop offset="0.491" stop-color="#ff5199"/><stop offset="0.542" stop-color="#ff3368"/><stop offset="0.608" stop-color="#ff1b41"/><stop offset="0.707" stop-color="#ff0921"/><stop offset="0.839" stop-color="#ff000a"/><stop offset="1.000" stop-color="#ff0000"/></linearGradient>
<linearGradient id="r87" gradientUnits="userSpaceOnUse" x1="484.2" x2="758.0" y1="0" y2="0"><stop offset="0.000" stop-color="#00afff"/><stop offset="0.260" stop-color="#029cff"/><stop offset="0.304" stop-color="#2797ff"/><stop offset="0.352" stop-color="#6491ff"/><stop offset="0.403" stop-color="#be8aff"/><stop offset="0.432" stop-color="#fe85ff"/><stop offset="0.465" stop-color="#ff60bf"/><stop offset="0.509" stop-color="#ff3f87"/><stop offset="0.564" stop-color="#ff265b"/><stop offset="0.637" stop-color="#ff1237"/><stop offset="0.762" stop-color="#ff0216"/><stop offset="0.945" stop-color="#ff0002"/><stop offset="1.000" stop-color="#ff0000"/></linearGradient>
<linearGradient id="r88" gradientUnits="userSpaceOnUse" x1="484.2" x2="758.0" y1="0" y2="0"><stop offset="0.000" stop-color="#00a8ff"/><stop offset="0.260" stop-color="#0393ff"/><stop offset="0.304" stop-color="#288dff"/><stop offset="0.355" stop-color="#6a87ff"/><stop offset="0.399" stop-color="#b680ff"/><stop offset="0.432" stop-color="#fc7aff"/><stop offset="0.469" stop-color="#ff55bc"/><stop offset="0.513" stop-color="#ff3786"/><stop offset="0.564" stop-color="#ff225d"/><stop offset="0.641" stop-color="#ff0e37"/><stop offset="0.758" stop-color="#ff0118"/><stop offset="0.938" stop-color="#ff0003"/><stop offset="1.000" stop-color="#ff0000"/></linearGradient>
<linearGradient id="r89" gradientUnits="userSpaceOnUse" x1="484.2" x2="758.0" y1="0" y2="0"><stop offset="0.000" stop-color="#00a1ff"/><stop offset="0.256" stop-color="#028aff"/><stop offset="0.304" stop-color="#2984ff"/><stop offset="0.355" stop-color="#6a7dff"/><stop offset="0.399" stop-color="#b476ff"/><stop offset="0.436" stop-color="#ff6efd"/><stop offset="0.465" stop-color="#ff51c5"/><stop offset="0.502" stop-color="#ff3894"/><stop offset="0.553" stop-color="#ff2166"/><stop offset="0.630" stop-color="#ff0e3d"/><stop offset="0.740" stop-color="#ff011d"/><stop offset="0.908" stop-color="#ff0006"/><stop offset="1.000" stop-color="#ff0000"/></linearGradient>
<linearGradient id="r90" gradientUnits="userSpaceOnUse" x1="484.2" x2="758.0" y1="0" y2="0"><stop offset="0.000" stop-color="#009aff"/><stop offset="0.256" stop-color="#0282ff"/><stop offset="0.304" stop-color="#2a7cff"/><stop offset="0.355" stop-color="#6a74ff"/><stop offset="0.407" stop-color="#c16bff"/><stop offset="0.436" stop-color="#ff65ff"/><stop offset="0.469" stop-color="#ff47c1"/><stop offset="0.513" stop-color="#ff2d8b"/><stop offset="0.571" stop-color="#ff185c"/><stop offset="0.659" stop-color="#ff0734"/><stop offset="0.777" stop-color="#ff0017"/><stop offset="0.960" stop-color="#ff0003"/><stop offset="1.000" stop-color="#ff0001"/></linearGradient>
<linearGradient id="r91" gradientUnits="userSpaceOnUse" x1="484.2" x2="758.0" y1="0" y2="0"><stop offset="0.000" stop-color="#0094ff"/><stop offset="0.256" stop-color="#037aff"/><stop offset="0.308" stop-color="#2e73ff"/><stop offset="0.359" stop-color="#706aff"/><stop offset="0.403" stop-color="#b962ff"/><stop offset="0.436" stop-color="#fc5cff"/><stop offset="0.476" stop-color="#ff3cb9"/><stop offset="0.520" stop-color="#ff2586"/><stop offset="0.579" stop-color="#ff135a"/><stop offset="0.663" stop-color="#ff0534"/><stop offset="0.780" stop-color="#ff0018"/><stop offset="0.952" stop-color="#ff0004"/><stop offset="1.000" stop-color="#ff0001"/></linearGradient>
<linearGradient id="r92" gradientUnits="userSpaceOnUse" x1="484.2" x2="758.0" y1="0" y2="0"><stop offset="0.000" stop-color="#008eff"/><stop offset="0.253" stop-color="#0273ff"/><stop offset="0.308" stop-color="#2f6bff"/><stop offset="0.363" stop-color="#7561ff"/><stop offset="0.410" stop-color="#c558ff"/><stop offset="0.440" stop-color="#ff51fc"/><stop offset="0.476" stop-color="#ff36bb"/><stop offset="0.520" stop-color="#ff2188"/><stop offset="0.579" stop-color="#ff105c"/><stop offset="0.659" stop-color="#ff0337"/><stop offset="0.788" stop-color="#ff0017"/><stop offset="0.978" stop-color="#ff0003"/><stop offset="1.000" stop-color="#ff0002"/></linearGradient>
<linearGradient id="r93" gradientUnits="userSpaceOnUse" x1="484.2" x2="758.0" y1="0" y2="0"><stop offset="0.000" stop-color="#0088ff"/><stop offset="0.253" stop-color="#036bff"/><stop offset="0.308" stop-color="#3063ff"/><stop offset="0.359" stop-color="#705aff"/><stop offset="0.410" stop-color="#c450ff"/><stop offset="0.440" stop-color="#ff49ff"/><stop offset="0.473" stop-color="#ff32c3"/><stop offset="0.513" stop-color="#ff1f91"/><stop offset="0.571" stop-color="#ff0e62"/><stop offset="0.652" stop-color="#ff023b"/><stop offset="0.777" stop-color="#ff001a"/><stop offset="0.967" stop-color="#ff0004"/><stop offset="1.000" stop-color="#ff0002"/></linearGradient>
<linearGradient id="r94" gradientUnits="userSpaceOnUse" x1="484.2" x2="758.0" y1="0" y2="0"><stop offset="0.000" stop-color="#0082ff"/><stop offset="0.249" stop-color="#0265ff"/><stop offset="0.293" stop-color="#225eff"/><stop offset="0.352" stop-color="#6554ff"/><stop offset="0.403" stop-color="#b54aff"/><stop offset="0.440" stop-color="#fd42ff"/><stop offset="0.480" stop-color="#ff29bb"/><stop offset="0.524" stop-color="#ff1889"/><stop offset="0.582" stop-color="#ff095d"/><stop offset="0.670" stop-color="#ff0036"/><stop offset="0.795" stop-color="#ff0018"/><stop offset="0.993" stop-color="#ff0003"/><stop offset="1.000" stop-color="#ff0002"/></linearGradient>
<linearGradient id="r95" gradientUnits="userSpaceOnUse" x1="484.2" x2="758.0" y1="0" y2="0"><stop offset="0.000" stop-color="#007cff"/><stop offset="0.249" stop-color="#035eff"/><stop offset="0.293" stop-color="#2357ff"/><stop offset="0.344" stop-color="#5c4eff"/><stop offset="0.396" stop-color="#a844ff"/><stop offset="0.443" stop-color="#ff38fc"/><stop offset="0.476" stop-color="#ff25c3"/><stop offset="0.516" stop-color="#ff1692"/><stop offset="0.571" stop-color="#ff0966"/><stop offset="0.645" stop-color="#ff0041"/><stop offset="0.784" stop-color="#ff001b"/><stop offset="0.982" stop-color="#ff0004"/><stop offset="1.000" stop-color="#ff0003"/></linearGradient>
<linearGradient id="r96" gradientUnits="userSpaceOnUse" x1="484.2" x2="758.0" y1="0" y2="0"><stop offset="0.000" stop-color="#0076ff"/><stop offset="0.249" stop-color="#0357ff"/><stop offset="0.300" stop-color="#2b4fff"/><stop offset="0.352" stop-color="#6646ff"/><stop offset="0.403" stop-color="#b33bff"/><stop offset="0.443" stop-color="#ff32fe"/><stop offset="0.476" stop-color="#ff20c5"/><stop offset="0.520" stop-color="#ff1191"/><stop offset="0.571" stop-color="#ff0668"/><stop offset="0.648" stop-color="#ff0041"/><stop offset="0.784" stop-color="#ff001c"/><stop offset="0.978" stop-color="#ff0005"/><stop offset="1.000" stop-color="#ff0004"/></linearGradient>
<linearGradient id="r97" gradientUnits="userSpaceOnUse" x1="484.2" x2="758.0" y1="0" y2="0"><stop offset="0.000" stop-color="#0071ff"/><stop offset="0.245" stop-color="#0252ff"/><stop offset="0.297" stop-color="#2849ff"/><stop offset="0.352" stop-color="#663fff"/><stop offset="0.407" stop-color="#b833ff"/><stop offset="0.443" stop-color="#fd2bff"/><stop offset="0.484" stop-color="#ff19bd"/><stop offset="0.535" stop-color="#ff0a85"/><stop offset="0.597" stop-color="#ff015a"/><stop offset="0.696" stop-color="#ff0032"/><stop offset="0.846" stop-color="#ff0013"/><stop offset="1.000" stop-color="#ff0004"/></linearGradient>
<linearGradient id="r98" gradientUnits="userSpaceOnUse" x1="484.2" x2="758.0" y1="0" y2="0"><stop offset="0.000" stop-color="#006bff"/><stop offset="0.245" stop-color="#034cff"/><stop offset="0.297" stop-color="#2943ff"/><stop offset="0.352" stop-color="#6639ff"/><stop offset="0.407" stop-color="#b72dff"/><stop offset="0.447" stop-color="#ff23fc"/><stop offset="0.484" stop-color="#ff14bf"/><stop offset="0.535" stop-color="#ff0787"/><stop offset="0.604" stop-color="#ff0058"/><stop offset="0.696" stop-color="#ff0034"/><stop offset="0.832" stop-color="#ff0016"/><stop offset="1.000" stop-color="#ff0005"/></linearGradient>
<linearGradient id="r99" gradientUnits="userSpaceOnUse" x1="484.2" x2="758.0" y1="0" y2="0"><stop offset="0.000" stop-color="#0066ff"/><stop offset="0.242" stop-color="#0246ff"/><stop offset="0.293" stop-color="#263eff"/><stop offset="0.355" stop-color="#6b32ff"/><stop offset="0.410" stop-color="#bc26ff"/><stop offset="0.447" stop-color="#ff1efe"/><stop offset="0.484" stop-color="#ff10c2"/><stop offset="0.538" stop-color="#ff0486"/><stop offset="0.612" stop-color="#ff0056"/><stop offset="0.707" stop-color="#ff0032"/><stop offset="0.846" stop-color="#ff0015"/><stop offset="1.000" stop-color="#ff0005"/></linearGradient>
<linearGradient id="r100" gradientUnits="userSpaceOnUse" x1="484.2" x2="758.0" y1="0" y2="0"><stop offset="0.000" stop-color="#0061ff"/><stop offset="0.242" stop-color="#0341ff"/><stop offset="0.293" stop-color="#2738ff"/><stop offset="0.355" stop-color="#6b2cff"/><stop offset="0.410" stop-color="#bb21ff"/><stop offset="0.447" stop-color="#fe18ff"/><stop offset="0.484" stop-color="#ff0cc4"/><stop offset="0.538" stop-color="#ff0288"/><stop offset="0.604" stop-color="#ff005c"/><stop offset="0.700" stop-color="#ff0035"/><stop offset="0.839" stop-color="#ff0017"/><stop offset="1.000" stop-color="#ff0006"/></linearGradient>
<linearGradient id="r101" gradientUnits="userSpaceOnUse" x1="484.2" x2="758.0" y1="0" y2="0"><stop offset="0.000" stop-color="#005cff"/><stop offset="0.242" stop-color="#033bff"/><stop offset="0.297" stop-color="#2b32ff"/><stop offset="0.359" stop-color="#6f26ff"/><stop offset="0.418" stop-color="#c61aff"/><stop offset="0.451" stop-color="#ff12fc"/><stop offset="0.487" stop-color="#ff08c1"/><stop offset="0.538" stop-color="#ff008a"/><stop offset="0.604" stop-color="#ff005d"/><stop offset="0.696" stop-color="#ff0038"/><stop offset="0.832" stop-color="#ff0019"/><stop offset="1.000" stop-color="#ff0006"/></linearGradient>
<linearGradient id="r102" gradientUnits="userSpaceOnUse" x1="484.2" x2="758.0" y1="0" y2="0"><stop offset="0.000" stop-color="#0057ff"/><stop offset="0.238" stop-color="#0237ff"/><stop offset="0.289" stop-color="#252eff"/><stop offset="0.352" stop-color="#6622ff"/><stop offset="0.410" stop-color="#b916ff"/><stop offset="0.451" stop-color="#ff0dfe"/><stop offset="0.487" stop-color="#ff04c3"/><stop offset="0.538" stop-color="#ff008c"/><stop offset="0.608" stop-color="#ff005d"/><stop offset="0.703" stop-color="#ff0037"/><stop offset="0.839" stop-color="#ff0019"/><stop offset="1.000" stop-color="#ff0007"/></linearGradient>
<linearGradient id="r103" gradientUnits="userSpaceOnUse" x1="484.2" x2="758.0" y1="0" y2="0"><stop offset="0.000" stop-color="#0053ff"/><stop offset="0.238" stop-color="#0332ff"/><stop offset="0.293" stop-color="#2928ff"/><stop offset="0.352" stop-color="#661dff"/><stop offset="0.410" stop-color="#b811ff"/><stop offset="0.451" stop-color="#fe09ff"/><stop offset="0.487" stop-color="#ff02c6"/><stop offset="0.538" stop-color="#ff008e"/><stop offset="0.604" stop-color="#ff0061"/><stop offset="0.689" stop-color="#ff003d"/><stop offset="0.813" stop-color="#ff001e"/><stop offset="1.000" stop-color="#ff0008"/></linearGradient>
<linearGradient id="r104" gradientUnits="userSpaceOnUse" x1="484.2" x2="758.0" y1="0" y2="0"><stop offset="0.000" stop-color="#004eff"/><stop offset="0.234" stop-color="#022eff"/><stop offset="0.293" stop-color="#2a23ff"/><stop offset="0.359" stop-color="#6f17ff"/><stop offset="0.418" stop-color="#c30cff"/><stop offset="0.451" stop-color="#fc05ff"/><stop offset="0.502" stop-color="#ff00b5"/><stop offset="0.557" stop-color="#ff0081"/><stop offset="0.634" stop-color="#ff0054"/><stop offset="0.736" stop-color="#ff0030"/><stop offset="0.894" stop-color="#ff0013"/><stop offset="1.000" stop-color="#ff0008"/></linearGradient>
<linearGradient id="r105" gradientUnits="userSpaceOnUse" x1="484.2" x2="758.0" y1="0" y2="0"><stop offset="0.000" stop-color="#004aff"/><stop offset="0.234" stop-color="#0329ff"/><stop offset="0.286" stop-color="#2520ff"/><stop offset="0.344" stop-color="#5e16ff"/><stop offset="0.407" stop-color="#b00aff"/><stop offset="0.454" stop-color="#ff02fe"/><stop offset="0.491" stop-color="#ff00c5"/><stop offset="0.538" stop-color="#ff0092"/><stop offset="0.612" stop-color="#ff0060"/><stop offset="0.703" stop-color="#ff003b"/><stop offset="0.832" stop-color="#ff001d"/><stop offset="1.000" stop-color="#ff0009"/></linearGradient>
<linearGradient id="r106" gradientUnits="userSpaceOnUse" x1="484.2" x2="758.0" y1="0" y2="0"><stop offset="0.000" stop-color="#0046ff"/><stop offset="0.234" stop-color="#0325ff"/><stop offset="0.293" stop-color="#2b1bff"/><stop offset="0.359" stop-color="#6f0fff"/><stop offset="0.418" stop-color="#c004ff"/><stop offset="0.454" stop-color="#fe00ff"/><stop offset="0.495" stop-color="#ff00c2"/><stop offset="0.546" stop-color="#ff008e"/><stop offset="0.612" stop-color="#ff0062"/><stop offset="0.707" stop-color="#ff003b"/><stop offset="0.842" stop-color="#ff001c"/><stop offset="1.000" stop-color="#ff000a"/></linearGradient>
<linearGradient id="r107" gradientUnits="userSpaceOnUse" x1="484.2" x2="758.0" y1="0" y2="0"><stop offset="0.000" stop-color="#0041ff"/><stop offset="0.231" stop-color="#0321ff"/><stop offset="0.286" stop-color="#2618ff"/><stop offset="0.348" stop-color="#630dff"/><stop offset="0.403" stop-color="#a904ff"/><stop offset="0.454" stop-color="#fc00ff"/><stop offset="0.505" stop-color="#ff00b7"/><stop offset="0.564" stop-color="#ff0081"/><stop offset="0.645" stop-color="#ff0053"/><stop offset="0.762" stop-color="#ff002d"/><stop offset="0.930" stop-color="#ff0011"/><stop offset="1.000" stop-color="#ff000a"/></linearGradient>
<linearGradient id="r108" gradientUnits="userSpaceOnUse" x1="484.2" x2="758.0" y1="0" y2="0"><stop offset="0.000" stop-color="#003dff"/><stop offset="0.231" stop-color="#031dff"/><stop offset="0.286" stop-color="#2714ff"/><stop offset="0.348" stop-color="#630aff"/><stop offset="0.407" stop-color="#ae01ff"/><stop offset="0.458" stop-color="#ff00fd"/><stop offset="0.498" stop-color="#ff00c2"/><stop offset="0.546" stop-color="#ff0092"/><stop offset="0.612" stop-color="#ff0065"/><stop offset="0.714" stop-color="#ff003b"/><stop offset="0.861" stop-color="#ff001b"/><stop offset="1.000" stop-color="#ff000b"/></linearGradient>
<linearGradient id="r109" gradientUnits="userSpaceOnUse" x1="484.2" x2="758.0" y1="0" y2="0"><stop offset="0.000" stop-color="#003aff"/><stop offset="0.227" stop-color="#021aff"/><stop offset="0.286" stop-color="#2710ff"/><stop offset="0.355" stop-color="#6b05ff"/><stop offset="0.418" stop-color="#bd00ff"/><stop offset="0.458" stop-color="#ff00ff"/><stop offset="0.498" stop-color="#ff00c4"/><stop offset="0.553" stop-color="#ff008d"/><stop offset="0.626" stop-color="#ff005f"/><stop offset="0.729" stop-color="#ff0038"/><stop offset="0.879" stop-color="#ff0019"/><stop offset="1.000" stop-color="#ff000c"/></linearGradient>
<linearGradient id="r110" gradientUnits="userSpaceOnUse" x1="484.2" x2="758.0" y1="0" y2="0"><stop offset="0.000" stop-color="#0036ff"/><stop offset="0.227" stop-color="#0316ff"/><stop offset="0.286" stop-color="#280dff"/><stop offset="0.352" stop-color="#6703ff"/><stop offset="0.410" stop-color="#b100ff"/><stop offset="0.458" stop-color="#fd00ff"/><stop offset="0.509" stop-color="#ff00b9"/><stop offset="0.564" stop-color="#ff0087"/><stop offset="0.637" stop-color="#ff005b"/><stop offset="0.751" stop-color="#ff0033"/><stop offset="0.916" stop-color="#ff0015"/><stop offset="1.000" stop-color="#ff000c"/></linearGradient>
<linearGradient id="r111" gradientUnits="userSpaceOnUse" x1="484.2" x2="758.0" y1="0" y2="0"><stop offset="0.000" stop-color="#0032ff"/><stop offset="0.223" stop-color="#0213ff"/><stop offset="0.282" stop-color="#260aff"/><stop offset="0.348" stop-color="#6301ff"/><stop offset="0.410" stop-color="#b100ff"/><stop offset="0.462" stop-color="#ff00fd"/><stop offset="0.502" stop-color="#ff00c3"/><stop offset="0.560" stop-color="#ff008b"/><stop offset="0.634" stop-color="#ff005f"/><stop offset="0.729" stop-color="#ff003b"/><stop offset="0.872" stop-color="#ff001c"/><stop offset="1.000" stop-color="#ff000d"/></linearGradient>
<linearGradient id="r112" gradientUnits="userSpaceOnUse" x1="484.2" x2="758.0" y1="0" y2="0"><stop offset="0.000" stop-color="#002fff"/><stop offset="0.223" stop-color="#0310ff"/><stop offset="0.282" stop-color="#2607ff"/><stop offset="0.352" stop-color="#6700ff"/><stop offset="0.414" stop-color="#b500ff"/><stop offset="0.462" stop-color="#ff00ff"/><stop offset="0.502" stop-color="#ff00c5"/><stop offset="0.560" stop-color="#ff008d"/><stop offset="0.634" stop-color="#ff0060"/><stop offset="0.736" stop-color="#ff003a"/><stop offset="0.890" stop-color="#ff001a"/><stop offset="1.000" stop-color="#ff000e"/></linearGradient>
<linearGradient id="r113" gradientUnits="userSpaceOnUse" x1="484.2" x2="758.0" y1="0" y2="0"><stop offset="0.000" stop-color="#002bff"/><stop offset="0.223" stop-color="#030dff"/><stop offset="0.286" stop-color="#2a04ff"/><stop offset="0.355" stop-color="#6b00ff"/><stop offset="0.421" stop-color="#be00ff"/><stop offset="0.462" stop-color="#fd00ff"/><stop offset="0.509" stop-color="#ff00bf"/><stop offset="0.568" stop-color="#ff0089"/><stop offset="0.645" stop-color="#ff005c"/><stop offset="0.762" stop-color="#ff0034"/><stop offset="0.927" stop-color="#ff0016"/><stop offset="1.000" stop-color="#ff000e"/></linearGradient>
<linearGradient id="r114" gradientUnits="userSpaceOnUse" x1="484.2" x2="758.0" y1="0" y2="0"><stop offset="0.000" stop-color="#0028ff"/><stop offset="0.220" stop-color="#020aff"/><stop offset="0.278" stop-color="#2503ff"/><stop offset="0.352" stop-color="#6700ff"/><stop offset="0.421" stop-color="#bd00ff"/><stop offset="0.465" stop-color="#ff00fd"/><stop offset="0.509" stop-color="#ff00c1"/><stop offset="0.560" stop-color="#ff0090"/><stop offset="0.637" stop-color="#ff0061"/><stop offset="0.747" stop-color="#ff0039"/><stop offset="0.905" stop-color="#ff001a"/><stop offset="1.000" stop-color="#ff000f"/></linearGradient>
<linearGradient id="r115" gradientUnits="userSpaceOnUse" x1="484.2" x2="758.0" y1="0" y2="0"><stop offset="0.000" stop-color="#0024ff"/><stop offset="0.220" stop-color="#0308ff"/><stop offset="0.286" stop-color="#2b00ff"/><stop offset="0.359" stop-color="#6f00ff"/><stop offset="0.421" stop-color="#bc00ff"/><stop offset="0.465" stop-color="#ff00ff"/><stop offset="0.513" stop-color="#ff00be"/><stop offset="0.571" stop-color="#ff008a"/><stop offset="0.645" stop-color="#ff005f"/><stop offset="0.758" stop-color="#ff0037"/><stop offset="0.934" stop-color="#ff0017"/><stop offset="1.000" stop-color="#ff0010"/></linearGradient>
<linearGradient id="r116" gradientUnits="userSpaceOnUse" x1="484.2" x2="758.0" y1="0" y2="0"><stop offset="0.000" stop-color="#0021ff"/><stop offset="0.216" stop-color="#0206ff"/><stop offset="0.278" stop-color="#2600ff"/><stop offset="0.348" stop-color="#6400ff"/><stop offset="0.410" stop-color="#ad00ff"/><stop offset="0.465" stop-color="#fd00ff"/><stop offset="0.516" stop-color="#ff00bc"/><stop offset="0.579" stop-color="#ff0086"/><stop offset="0.670" stop-color="#ff0055"/><stop offset="0.791" stop-color="#ff0030"/><stop offset="0.974" stop-color="#ff0013"/><stop offset="1.000" stop-color="#ff0010"/></linearGradient>
<linearGradient id="r117" gradientUnits="userSpaceOnUse" x1="484.2" x2="758.0" y1="0" y2="0"><stop offset="0.000" stop-color="#001eff"/><stop offset="0.216" stop-color="#0303ff"/><stop offset="0.275" stop-color="#2400ff"/><stop offset="0.348" stop-color="#6400ff"/><stop offset="0.410" stop-color="#ac00ff"/><stop offset="0.469" stop-color="#ff00fd"/><stop offset="0.513" stop-color="#ff00c2"/><stop offset="0.571" stop-color="#ff008d"/><stop offset="0.648" stop-color="#ff0060"/><stop offset="0.758" stop-color="#ff003a"/><stop offset="0.901" stop-color="#ff001d"/><stop offset="1.000" stop-color="#ff0011"/></linearGradient>
<linearGradient id="r118" gradientUnits="userSpaceOnUse" x1="484.2" x2="758.0" y1="0" y2="0"><stop offset="0.000" stop-color="#001bff"/><stop offset="0.216" stop-color="#0301ff"/><stop offset="0.282" stop-color="#2a00ff"/><stop offset="0.355" stop-color="#6b00ff"/><stop offset="0.421" stop-color="#ba00ff"/><stop offset="0.469" stop-color="#ff00fe"/><stop offset="0.513" stop-color="#ff00c4"/><stop offset="0.568" stop-color="#ff0092"/><stop offset="0.641" stop-color="#ff0065"/><stop offset="0.751" stop-color="#ff003d"/><stop offset="0.905" stop-color="#ff001d"/><stop offset="1.000" stop-color="#ff0012"/></linearGradient>
<linearGradient id="r119" gradientUnits="userSpaceOnUse" x1="484.2" x2="758.0" y1="0" y2="0"><stop offset="0.000" stop-color="#0019ff"/><stop offset="0.212" stop-color="#0200ff"/><stop offset="0.278" stop-color="#2800ff"/><stop offset="0.355" stop-color="#6b00ff"/><stop offset="0.421" stop-color="#b900ff"/><stop offset="0.469" stop-color="#fe00ff"/><stop offset="0.516" stop-color="#ff00c2"/><stop offset="0.568" stop-color="#ff0093"/><stop offset="0.648" stop-color="#ff0063"/><stop offset="0.758" stop-color="#ff003c"/><stop offset="0.912" stop-color="#ff001d"/><stop offset="1.000" stop-color="#ff0012"/></linearGradient>
<linearGradient id="r120" gradientUnits="userSpaceOnUse" x1="484.2" x2="758.0" y1="0" y2="0"><stop offset="0.000" stop-color="#0016ff"/><stop offset="0.212" stop-color="#0300ff"/><stop offset="0.275" stop-color="#2600ff"/><stop offset="0.348" stop-color="#6400ff"/><stop offset="0.418" stop-color="#b300ff"/><stop offset="0.473" stop-color="#ff00fc"/><stop offset="0.516" stop-color="#ff00c4"/><stop offset="0.571" stop-color="#ff0092"/><stop offset="0.656" stop-color="#ff0061"/><stop offset="0.773" stop-color="#ff0039"/><stop offset="0.949" stop-color="#ff0019"/><stop offset="1.000" stop-color="#ff0013"/></linearGradient>
<linearGradient id="r121" gradientUnits="userSpaceOnUse" x1="484.2" x2="758.0" y1="0" y2="0"><stop offset="0.000" stop-color="#0013ff"/><stop offset="0.201" stop-color="#0000ff"/><stop offset="0.264" stop-color="#1f00ff"/><stop offset="0.348" stop-color="#6400ff"/><stop offset="0.421" stop-color="#b700ff"/><stop offset="0.473" stop-color="#ff00fe"/><stop offset="0.520" stop-color="#ff00c1"/><stop offset="0.579" stop-color="#ff008f"/><stop offset="0.652" stop-color="#ff0064"/><stop offset="0.766" stop-color="#ff003c"/><stop offset="0.930" stop-color="#ff001c"/><stop offset="1.000" stop-color="#ff0014"/></linearGradient>
<linearGradient id="r122" gradientUnits="userSpaceOnUse" x1="484.2" x2="758.0" y1="0" y2="0"><stop offset="0.000" stop-color="#0011ff"/><stop offset="0.187" stop-color="#0000ff"/><stop offset="0.216" stop-color="#0600ff"/><stop offset="0.278" stop-color="#2a00ff"/><stop offset="0.352" stop-color="#6800ff"/><stop offset="0.421" stop-color="#b600ff"/><stop offset="0.473" stop-color="#fe00ff"/><stop offset="0.524" stop-color="#ff00bf"/><stop offset="0.593" stop-color="#ff0086"/><stop offset="0.681" stop-color="#ff0059"/><stop offset="0.810" stop-color="#ff0032"/><stop offset="1.000" stop-color="#ff0014"/></linearGradient>
<linearGradient id="r123" gradientUnits="userSpaceOnUse" x1="484.2" x2="758.0" y1="0" y2="0"><stop offset="0.000" stop-color="#000eff"/><stop offset="0.172" stop-color="#0000ff"/><stop offset="0.209" stop-color="#0300ff"/><stop offset="0.278" stop-color="#2a00ff"/><stop offset="0.359" stop-color="#6f00ff"/><stop offset="0.429" stop-color="#bf00ff"/><stop offset="0.476" stop-color="#ff00fc"/><stop offset="0.527" stop-color="#ff00bd"/><stop offset="0.597" stop-color="#ff0085"/><stop offset="0.689" stop-color="#ff0057"/><stop offset="0.821" stop-color="#ff0031"/><stop offset="1.000" stop-color="#ff0015"/></linearGradient>
<linearGradient id="r124" gradientUnits="userSpaceOnUse" x1="484.2" x2="758.0" y1="0" y2="0"><stop offset="0.000" stop-color="#000cff"/><stop offset="0.158" stop-color="#0000ff"/><stop offset="0.205" stop-color="#0300ff"/><stop offset="0.278" stop-color="#2b00ff"/><stop offset="0.352" stop-color="#6800ff"/><stop offset="0.425" stop-color="#b900ff"/><stop offset="0.476" stop-color="#ff00fe"/><stop offset="0.520" stop-color="#ff00c7"/><stop offset="0.579" stop-color="#ff0093"/><stop offset="0.678" stop-color="#ff005d"/><stop offset="0.806" stop-color="#ff0035"/><stop offset="0.982" stop-color="#ff0018"/><stop offset="1.000" stop-color="#ff0016"/></linearGradient>
<linearGradient id="r125" gradientUnits="userSpaceOnUse" x1="484.2" x2="758.0" y1="0" y2="0"><stop offset="0.000" stop-color="#000aff"/><stop offset="0.147" stop-color="#0000ff"/><stop offset="0.205" stop-color="#0300ff"/><stop offset="0.275" stop-color="#2900ff"/><stop offset="0.359" stop-color="#6f00ff"/><stop offset="0.436" stop-color="#c600ff"/><stop offset="0.476" stop-color="#fe00ff"/><stop offset="0.524" stop-color="#ff00c4"/><stop offset="0.597" stop-color="#ff0088"/><stop offset="0.685" stop-color="#ff005b"/><stop offset="0.828" stop-color="#ff0031"/><stop offset="1.000" stop-color="#ff0017"/></linearGradient>
<linearGradient id="r126" gradientUnits="userSpaceOnUse" x1="484.2" x2="758.0" y1="0" y2="0"><stop offset="0.000" stop-color="#0008ff"/><stop offset="0.132" stop-color="#0000ff"/><stop offset="0.201" stop-color="#0200ff"/><stop offset="0.278" stop-color="#2c00ff"/><stop offset="0.359" stop-color="#6f00ff"/><stop offset="0.429" stop-color="#bc00ff"/><stop offset="0.480" stop-color="#ff00fc"/><stop offset="0.527" stop-color="#ff00c2"/><stop offset="0.593" stop-color="#ff008c"/><stop offset="0.681" stop-color="#ff005e"/><stop offset="0.806" stop-color="#ff0037"/><stop offset="0.993" stop-color="#ff0018"/><stop offset="1.000" stop-color="#ff0017"/></linearGradient>
<linearGradient id="r127" gradientUnits="userSpaceOnUse" x1="484.2" x2="758.0" y1="0" y2="0"><stop offset="0.000" stop-color="#0006ff"/><stop offset="0.132" stop-color="#0000ff"/><stop offset="0.201" stop-color="#0300ff"/><stop offset="0.282" stop-color="#2f00ff"/><stop offset="0.359" stop-color="#6f00ff"/><stop offset="0.436" stop-color="#c400ff"/><stop offset="0.480" stop-color="#ff00fe"/><stop offset="0.524" stop-color="#ff00c8"/><stop offset="0.582" stop-color="#ff0095"/><stop offset="0.678" stop-color="#ff0061"/><stop offset="0.802" stop-color="#ff0039"/><stop offset="0.982" stop-color="#ff001a"/><stop offset="1.000" stop-color="#ff0018"/></linearGradient>
<linearGradient id="r128" gradientUnits="userSpaceOnUse" x1="484.2" x2="758.0" y1="0" y2="0"><stop offset="0.000" stop-color="#0004ff"/><stop offset="0.190" stop-color="#0000ff"/><stop offset="0.253" stop-color="#1d00ff"/><stop offset="0.330" stop-color="#5500ff"/><stop offset="0.403" stop-color="#9d00ff"/><stop offset="0.469" stop-color="#ef00ff"/><stop offset="0.480" stop-color="#ff00ff"/><stop offset="0.527" stop-color="#ff00c6"/><stop offset="0.601" stop-color="#ff008a"/><stop offset="0.692" stop-color="#ff005c"/><stop offset="0.828" stop-color="#ff0034"/><stop offset="1.000" stop-color="#ff0019"/></linearGradient>
<linearGradient id="r129" gradientUnits="userSpaceOnUse" x1="484.2" x2="758.0" y1="0" y2="0"><stop offset="0.000" stop-color="#0003ff"/><stop offset="0.198" stop-color="#0300ff"/><stop offset="0.267" stop-color="#2600ff"/><stop offset="0.352" stop-color="#6800ff"/><stop offset="0.425" stop-color="#b500ff"/><stop offset="0.484" stop-color="#ff00fc"/><stop offset="0.527" stop-color="#ff00c7"/><stop offset="0.597" stop-color="#ff008e"/><stop offset="0.689" stop-color="#ff005f"/><stop offset="0.806" stop-color="#ff003a"/><stop offset="0.993" stop-color="#ff001a"/><stop offset="1.000" stop-color="#ff0019"/></linearGradient>
</defs>
<filter id="vb" x="0" y="0" width="1" height="1"><feGaussianBlur stdDeviation="0 0.7"/></filter>
<g clip-path="url(#loc)"><g filter="url(#vb)">
<rect x="484.2" y="22" width="273.8" height="3" fill="url(#r0)"/>
<rect x="484.2" y="24" width="273.8" height="3" fill="url(#r1)"/>
<rect x="484.2" y="26" width="273.8" height="3" fill="url(#r2)"/>
<rect x="484.2" y="28" width="273.8" height="3" fill="url(#r3)"/>
<rect x="484.2" y="30" width="273.8" height="3" fill="url(#r4)"/>
<rect x="484.2" y="32" width="273.8" height="3" fill="url(#r5)"/>
<rect x="484.2" y="34" width="273.8" height="3" fill="url(#r6)"/>
<rect x="484.2" y="36" width="273.8" height="3" fill="url(#r7)"/>
<rect x="484.2" y="38" width="273.8" height="3" fill="url(#r8)"/>
<rect x="484.2" y="40" width="273.8" height="3" fill="url(#r9)"/>
<rect x="484.2" y="42" width="273.8" height="3" fill="url(#r10)"/>
<rect x="484.2" y="44" width="273.8" height="3" fill="url(#r11)"/>
<rect x="484.2" y="46" width="273.8" height="3" fill="url(#r12)"/>
<rect x="484.2" y="48" width="273.8" height="3" fill="url(#r13)"/>
<rect x="484.2" y="50" width="273.8" height="3" fill="url(#r14)"/>
<rect x="484.2" y="52" width="273.8" height="3" fill="url(#r15)"/>
<rect x="484.2" y="54" width="273.8" height="3" fill="url(#r16)"/>
<rect x="484.2" y="56" width="273.8" height="3" fill="url(#r17)"/>
<rect x="484.2" y="58" width="273.8" height="3" fill="url(#r18)"/>
<rect x="484.2" y="60" width="273.8" height="3" fill="url(#r19)"/>
<rect x="484.2" y="62" width="273.8" height="3" fill="url(#r20)"/>
<rect x="484.2" y="64" width="273.8" height="3" fill="url(#r21)"/>
<rect x="484.2" y="66" width="273.8" height="3" fill="url(#r22)"/>
<rect x="484.2" y="68" width="273.8" height="3" fill="url(#r23)"/>
<rect x="484.2" y="70" width="273.8" height="3" fill="url(#r24)"/>
<rect x="484.2" y="72" width="273.8" height="3" fill="url(#r25)"/>
<rect x="484.2" y="74" width="273.8" height="3" fill="url(#r26)"/>
<rect x="484.2" y="76" width="273.8" height="3" fill="url(#r27)"/>
<rect x="484.2" y="78" width="273.8" height="3" fill="url(#r28)"/>
<rect x="484.2" y="80" width="273.8" height="3" fill="url(#r29)"/>
<rect x="484.2" y="82" width="273.8" height="3" fill="url(#r30)"/>
<rect x="484.2" y="84" width="273.8" height="3" fill="url(#r31)"/>
<rect x="484.2" y="86" width="273.8" height="3" fill="url(#r32)"/>
<rect x="484.2" y="88" width="273.8" height="3" fill="url(#r33)"/>
<rect x="484.2" y="90" width="273.8" height="3" fill="url(#r34)"/>
<rect x="484.2" y="92" width="273.8" height="3" fill="url(#r35)"/>
<rect x="484.2" y="94" width="273.8" height="3" fill="url(#r36)"/>
<rect x="484.2" y="96" width="273.8" height="3" fill="url(#r37)"/>
<rect x="484.2" y="98" width="273.8" height="3" fill="url(#r38)"/>
<rect x="484.2" y="100" width="273.8" height="3" fill="url(#r39)"/>
<rect x="484.2" y="102" width="273.8" height="3" fill="url(#r40)"/>
<rect x="484.2" y="104" width="273.8" height="3" fill="url(#r41)"/>
<rect x="484.2" y="106" width="273.8" height="3" fill="url(#r42)"/>
<rect x="484.2" y="108" width="273.8" height="3" fill="url(#r43)"/>
<rect x="484.2" y="110" width="273.8" height="3" fill="url(#r44)"/>
<rect x="484.2" y="112" width="273.8" height="3" fill="url(#r45)"/>
<rect x="484.2" y="114" width="273.8" height="3" fill="url(#r46)"/>
<rect x="484.2" y="116" width="273.8" height="3" fill="url(#r47)"/>
<rect x="484.2" y="118" width="273.8" height="3" fill="url(#r48)"/>
<rect x="484.2" y="120" width="273.8" height="3" fill="url(#r49)"/>
<rect x="484.2" y="122" width="273.8" height="3" fill="url(#r50)"/>
<rect x="484.2" y="124" width="273.8" height="3" fill="url(#r51)"/>
<rect x="484.2" y="126" width="273.8" height="3" fill="url(#r52)"/>
<rect x="484.2" y="128" width="273.8" height="3" fill="url(#r53)"/>
<rect x="484.2" y="130" width="273.8" height="3" fill="url(#r54)"/>
<rect x="484.2" y="132" width="273.8" height="3" fill="url(#r55)"/>
<rect x="484.2" y="134" width="273.8" height="3" fill="url(#r56)"/>
<rect x="484.2" y="136" width="273.8" height="3" fill="url(#r57)"/>
<rect x="484.2" y="138" width="273.8" height="3" fill="url(#r58)"/>
<rect x="484.2" y="140" width="273.8" height="3" fill="url(#r59)"/>
<rect x="484.2" y="142" width="273.8" height="3" fill="url(#r60)"/>
<rect x="484.2" y="144" width="273.8" height="3" fill="url(#r61)"/>
<rect x="484.2" y="146" width="273.8" height="3" fill="url(#r62)"/>
<rect x="484.2" y="148" width="273.8" height="3" fill="url(#r63)"/>
<rect x="484.2" y="150" width="273.8" height="3" fill="url(#r64)"/>
<rect x="484.2" y="152" width="273.8" height="3" fill="url(#r65)"/>
<rect x="484.2" y="154" width="273.8" height="3" fill="url(#r66)"/>
<rect x="484.2" y="156" width="273.8" height="3" fill="url(#r67)"/>
<rect x="484.2" y="158" width="273.8" height="3" fill="url(#r68)"/>
<rect x="484.2" y="160" width="273.8" height="3" fill="url(#r69)"/>
<rect x="484.2" y="162" width="273.8" height="3" fill="url(#r70)"/>
<rect x="484.2" y="164" width="273.8" height="3" fill="url(#r71)"/>
<rect x="484.2" y="166" width="273.8" height="3" fill="url(#r72)"/>
<rect x="484.2" y="168" width="273.8" height="3" fill="url(#r73)"/>
<rect x="484.2" y="170" width="273.8" height="3" fill="url(#r74)"/>
<rect x="484.2" y="172" width="273.8" height="3" fill="url(#r75)"/>
<rect x="484.2" y="174" width="273.8" height="3" fill="url(#r76)"/>
<rect x="484.2" y="176" width="273.8" height="3" fill="url(#r77)"/>
<rect x="484.2" y="178" width="273.8" height="3" fill="url(#r78)"/>
<rect x="484.2" y="180" width="273.8" height="3" fill="url(#r79)"/>
<rect x="484.2" y="182" width="273.8" height="3" fill="url(#r80)"/>
<rect x="484.2" y="184" width="273.8" height="3" fill="url(#r81)"/>
<rect x="484.2" y="186" width="273.8" height="3" fill="url(#r82)"/>
<rect x="484.2" y="188" width="273.8" height="3" fill="url(#r83)"/>
<rect x="484.2" y="190" width="273.8" height="3" fill="url(#r84)"/>
<rect x="484.2" y="192" width="273.8" height="3" fill="url(#r85)"/>
<rect x="484.2" y="194" width="273.8" height="3" fill="url(#r86)"/>
<rect x="484.2" y="196" width="273.8" height="3" fill="url(#r87)"/>
<rect x="484.2" y="198" width="273.8" height="3" fill="url(#r88)"/>
<rect x="484.2" y="200" width="273.8" height="3" fill="url(#r89)"/>
<rect x="484.2" y="202" width="273.8" height="3" fill="url(#r90)"/>
<rect x="484.2" y="204" width="273.8" height="3" fill="url(#r91)"/>
<rect x="484.2" y="206" width="273.8" height="3" fill="url(#r92)"/>
<rect x="484.2" y="208" width="273.8" height="3" fill="url(#r93)"/>
<rect x="484.2" y="210" width="273.8" height="3" fill="url(#r94)"/>
<rect x="484.2" y="212" width="273.8" height="3" fill="url(#r95)"/>
<rect x="484.2" y="214" width="273.8" height="3" fill="url(#r96)"/>
<rect x="484.2" y="216" width="273.8" height="3" fill="url(#r97)"/>
<rect x="484.2" y="218" width="273.8" height="3" fill="url(#r98)"/>
<rect x="484.2" y="220" width="273.8" height="3" fill="url(#r99)"/>
<rect x="484.2" y="222" width="273.8" height="3" fill="url(#r100)"/>
<rect x="484.2" y="224" width="273.8" height="3" fill="url(#r101)"/>
<rect x="484.2" y="226" width="273.8" height="3" fill="url(#r102)"/>
<rect x="484.2" y="228" width="273.8" height="3" fill="url(#r103)"/>
<rect x="484.2" y="230" width="273.8" height="3" fill="url(#r104)"/>
<rect x="484.2" y="232" width="273.8" height="3" fill="url(#r105)"/>
<rect x="484.2" y="234" width="273.8" height="3" fill="url(#r106)"/>
<rect x="484.2" y="236" width="273.8" height="3" fill="url(#r107)"/>
<rect x="484.2" y="238" width="273.8" height="3" fill="url(#r108)"/>
<rect x="484.2" y="240" width="273.8" height="3" fill="url(#r109)"/>
<rect x="484.2" y="242" width="273.8" height="3" fill="url(#r110)"/>
<rect x="484.2" y="244" width="273.8" height="3" fill="url(#r111)"/>
<rect x="484.2" y="246" width="273.8" height="3" fill="url(#r112)"/>
<rect x="484.2" y="248" width="273.8" height="3" fill="url(#r113)"/>
<rect x="484.2" y="250" width="273.8" height="3" fill="url(#r114)"/>
<rect x="484.2" y="252" width="273.8" height="3" fill="url(#r115)"/>
<rect x="484.2" y="254" width="273.8" height="3" fill="url(#r116)"/>
<rect x="484.2" y="256" width="273.8" height="3" fill="url(#r117)"/>
<rect x="484.2" y="258" width="273.8" height="3" fill="url(#r118)"/>
<rect x="484.2" y="260" width="273.8" height="3" fill="url(#r119)"/>
<rect x="484.2" y="262" width="273.8" height="3" fill="url(#r120)"/>
<rect x="484.2" y="264" width="273.8" height="3" fill="url(#r121)"/>
<rect x="484.2" y="266" width="273.8" height="3" fill="url(#r122)"/>
<rect x="484.2" y="268" width="273.8" height="3" fill="url(#r123)"/>
<rect x="484.2" y="270" width="273.8" height="3" fill="url(#r124)"/>
<rect x="484.2" y="272" width="273.8" height="3" fill="url(#r125)"/>
<rect x="484.2" y="274" width="273.8" height="3" fill="url(#r126)"/>
<rect x="484.2" y="276" width="273.8" height="3" fill="url(#r127)"/>
<rect x="484.2" y="278" width="273.8" height="3" fill="url(#r128)"/>
<rect x="484.2" y="280" width="273.8" height="3" fill="url(#r129)"/>
</g>
<path d="M482.2,20.0H760.0V283.0H482.2Z M735.8,182.7 L582.2,69.0 L539.7,262.6Z" fill="#000" fill-opacity="0.4" fill-rule="evenodd"/>
</g>
<rect x="483.7" y="23.0" width="1" height="258.5" fill="#8c8c8c"/>
<rect x="794.1" y="23.0" width="1" height="258.5" fill="#6c6c6c"/>
<rect x="484.2" y="23.0" width="310.4" height="1" fill="#8c8c8c"/>
<rect x="484.2" y="280.5" width="310.4" height="1" fill="#8c8c8c"/>
<rect x="483.80" y="281.0" width="1" height="3" fill="#ddd"/>
<text x="484.30" y="291.60" font-size="7.0" text-anchor="middle" fill="#e6e6e6" >0</text>
<rect x="481.2" y="280.50" width="3" height="1" fill="#ddd"/>
<text transform="translate(480.80,283.10) scale(0.92,1)" font-size="7.0" text-anchor="end" fill="#e6e6e6" >0</text>
<rect x="520.70" y="281.0" width="1" height="3" fill="#ddd"/>
<text x="521.20" y="291.60" font-size="7.0" text-anchor="middle" fill="#e6e6e6" >0.1</text>
<rect x="481.2" y="250.00" width="3" height="1" fill="#ddd"/>
<text transform="translate(480.80,252.60) scale(0.92,1)" font-size="7.0" text-anchor="end" fill="#e6e6e6" >0.1</text>
<rect x="557.60" y="281.0" width="1" height="3" fill="#ddd"/>
<text x="558.10" y="291.60" font-size="7.0" text-anchor="middle" fill="#e6e6e6" >0.2</text>
<rect x="481.2" y="219.50" width="3" height="1" fill="#ddd"/>
<text transform="translate(480.80,222.10) scale(0.92,1)" font-size="7.0" text-anchor="end" fill="#e6e6e6" >0.2</text>
<rect x="594.50" y="281.0" width="1" height="3" fill="#ddd"/>
<text x="595.00" y="291.60" font-size="7.0" text-anchor="middle" fill="#e6e6e6" >0.3</text>
<rect x="481.2" y="189.00" width="3" height="1" fill="#ddd"/>
<text transform="translate(480.80,191.60) scale(0.92,1)" font-size="7.0" text-anchor="end" fill="#e6e6e6" >0.3</text>
<rect x="631.40" y="281.0" width="1" height="3" fill="#ddd"/>
<text x="631.90" y="291.60" font-size="7.0" text-anchor="middle" fill="#e6e6e6" >0.4</text>
<rect x="481.2" y="158.50" width="3" height="1" fill="#ddd"/>
<text transform="translate(480.80,161.10) scale(0.92,1)" font-size="7.0" text-anchor="end" fill="#e6e6e6" >0.4</text>
<rect x="668.30" y="281.0" width="1" height="3" fill="#ddd"/>
<text x="668.80" y="291.60" font-size="7.0" text-anchor="middle" fill="#e6e6e6" >0.5</text>
<rect x="481.2" y="128.00" width="3" height="1" fill="#ddd"/>
<text transform="translate(480.80,130.60) scale(0.92,1)" font-size="7.0" text-anchor="end" fill="#e6e6e6" >0.5</text>
<rect x="705.20" y="281.0" width="1" height="3" fill="#ddd"/>
<text x="705.70" y="291.60" font-size="7.0" text-anchor="middle" fill="#e6e6e6" >0.6</text>
<rect x="481.2" y="97.50" width="3" height="1" fill="#ddd"/>
<text transform="translate(480.80,100.10) scale(0.92,1)" font-size="7.0" text-anchor="end" fill="#e6e6e6" >0.6</text>
<rect x="742.10" y="281.0" width="1" height="3" fill="#ddd"/>
<text x="742.60" y="291.60" font-size="7.0" text-anchor="middle" fill="#e6e6e6" >0.7</text>
<rect x="481.2" y="67.00" width="3" height="1" fill="#ddd"/>
<text transform="translate(480.80,69.60) scale(0.92,1)" font-size="7.0" text-anchor="end" fill="#e6e6e6" >0.7</text>
<rect x="779.00" y="281.0" width="1" height="3" fill="#ddd"/>
<text x="779.50" y="291.60" font-size="7.0" text-anchor="middle" fill="#e6e6e6" >0.8</text>
<rect x="481.2" y="36.50" width="3" height="1" fill="#ddd"/>
<text transform="translate(480.80,39.10) scale(0.92,1)" font-size="7.0" text-anchor="end" fill="#e6e6e6" >0.8</text>
<text x="633.50" y="20.50" font-size="7.0" text-anchor="middle" fill="#e6e6e6" textLength="36.5" lengthAdjust="spacingAndGlyphs" >CIE 1931 xy</text>
<rect x="596.6" y="176.6" width="6.6" height="6.6" fill="none" stroke="#1a1a1a" stroke-width="1.3" stroke-opacity="1"/>
<rect x="732.5" y="179.4" width="6.6" height="6.6" fill="none" stroke="#fff" stroke-width="1.0" stroke-opacity="0.85"/>
<rect x="579.0" y="65.7" width="6.6" height="6.6" fill="none" stroke="#fff" stroke-width="1.0" stroke-opacity="0.85"/>
<rect x="536.4" y="259.3" width="6.6" height="6.6" fill="none" stroke="#fff" stroke-width="1.0" stroke-opacity="0.85"/>
<rect x="554.8" y="175.7" width="6.6" height="6.6" fill="none" stroke="#fff" stroke-width="1.0" stroke-opacity="0.8"/>
<rect x="605.3" y="231.2" width="6.6" height="6.6" fill="none" stroke="#fff" stroke-width="1.0" stroke-opacity="0.8"/>
<rect x="642.9" y="113.0" width="6.6" height="6.6" fill="none" stroke="#fff" stroke-width="1.0" stroke-opacity="0.8"/>
<circle cx="597.6" cy="187.7" r="1.9" fill="#fff" stroke="#000" stroke-width="0.8" stroke-opacity="0.8"/>
<circle cx="721.9" cy="180.9" r="1.9" fill="#ff1a1a" stroke="#7a0000" stroke-width="0.8" stroke-opacity="0.8"/>
<circle cx="573.6" cy="63.1" r="1.9" fill="#30ff30" stroke="#0a7a0a" stroke-width="0.8" stroke-opacity="0.8"/>
<circle cx="538.5" cy="267.6" r="1.9" fill="#2020ff" stroke="#000080" stroke-width="0.8" stroke-opacity="0.8"/>
<circle cx="552.0" cy="184.8" r="1.9" fill="#40ffff" stroke="#008a8a" stroke-width="0.8" stroke-opacity="0.8"/>
<circle cx="606.5" cy="236.2" r="1.9" fill="#ff40ff" stroke="#7a007a" stroke-width="0.8" stroke-opacity="0.8"/>
<circle cx="648.2" cy="127.0" r="1.9" fill="#ffff30" stroke="#3a3a00" stroke-width="0.8" stroke-opacity="0.8"/>
<defs><clipPath id="ins"><rect x="684.3" y="24.6" width="108.7" height="93.2"/></clipPath>
<linearGradient id="i0" gradientUnits="userSpaceOnUse" x1="684.3" x2="793.0" y1="0" y2="0"><stop offset="0.000" stop-color="#76ffb7"/><stop offset="0.062" stop-color="#7dffb5"/><stop offset="0.125" stop-color="#85ffb2"/><stop offset="0.188" stop-color="#8dffb0"/><stop offset="0.250" stop-color="#95ffad"/><stop offset="0.312" stop-color="#9dffab"/><stop offset="0.375" stop-color="#a6ffa8"/><stop offset="0.438" stop-color="#afffa6"/><stop offset="0.500" stop-color="#b7ffa3"/><stop offset="0.562" stop-color="#c0ffa1"/><stop offset="0.625" stop-color="#c9ff9e"/><stop offset="0.688" stop-color="#d3ff9c"/><stop offset="0.750" stop-color="#dcff99"/><stop offset="0.812" stop-color="#e5ff97"/><stop offset="0.875" stop-color="#efff94"/><stop offset="0.938" stop-color="#f9ff92"/><stop offset="1.000" stop-color="#fffb8d"/></linearGradient>
<linearGradient id="i1" gradientUnits="userSpaceOnUse" x1="684.3" x2="793.0" y1="0" y2="0"><stop offset="0.000" stop-color="#77ffba"/><stop offset="0.062" stop-color="#7fffb7"/><stop offset="0.125" stop-color="#87ffb5"/><stop offset="0.188" stop-color="#8fffb3"/><stop offset="0.250" stop-color="#97ffb0"/><stop offset="0.312" stop-color="#9fffae"/><stop offset="0.375" stop-color="#a8ffab"/><stop offset="0.438" stop-color="#b1ffa9"/><stop offset="0.500" stop-color="#baffa6"/><stop offset="0.562" stop-color="#c3ffa4"/><stop offset="0.625" stop-color="#ccffa1"/><stop offset="0.688" stop-color="#d5ff9f"/><stop offset="0.750" stop-color="#dfff9c"/><stop offset="0.812" stop-color="#e8ff99"/><stop offset="0.875" stop-color="#f2ff97"/><stop offset="0.938" stop-color="#fcff94"/><stop offset="1.000" stop-color="#fff88e"/></linearGradient>
<linearGradient id="i2" gradientUnits="userSpaceOnUse" x1="684.3" x2="793.0" y1="0" y2="0"><stop offset="0.000" stop-color="#79ffbd"/><stop offset="0.062" stop-color="#80ffba"/><stop offset="0.125" stop-color="#88ffb8"/><stop offset="0.188" stop-color="#91ffb5"/><stop offset="0.250" stop-color="#99ffb3"/><stop offset="0.312" stop-color="#a1ffb0"/><stop offset="0.375" stop-color="#aaffae"/><stop offset="0.438" stop-color="#b3ffab"/><stop offset="0.500" stop-color="#bcffa9"/><stop offset="0.562" stop-color="#c5ffa6"/><stop offset="0.625" stop-color="#ceffa4"/><stop offset="0.688" stop-color="#d8ffa1"/><stop offset="0.750" stop-color="#e1ff9f"/><stop offset="0.812" stop-color="#ebff9c"/><stop offset="0.875" stop-color="#f5ff99"/><stop offset="0.938" stop-color="#ffff97"/><stop offset="1.000" stop-color="#fff58e"/></linearGradient>
<linearGradient id="i3" gradientUnits="userSpaceOnUse" x1="684.3" x2="793.0" y1="0" y2="0"><stop offset="0.000" stop-color="#7affbf"/><stop offset="0.062" stop-color="#82ffbd"/><stop offset="0.125" stop-color="#8affbb"/><stop offset="0.188" stop-color="#92ffb8"/><stop offset="0.250" stop-color="#9bffb6"/><stop offset="0.312" stop-color="#a3ffb3"/><stop offset="0.375" stop-color="#acffb1"/><stop offset="0.438" stop-color="#b5ffae"/><stop offset="0.500" stop-color="#beffab"/><stop offset="0.562" stop-color="#c7ffa9"/><stop offset="0.625" stop-color="#d1ffa6"/><stop offset="0.688" stop-color="#daffa4"/><stop offset="0.750" stop-color="#e4ffa1"/><stop offset="0.812" stop-color="#eeff9f"/><stop offset="0.875" stop-color="#f8ff9c"/><stop offset="0.938" stop-color="#fffc98"/><stop offset="1.000" stop-color="#fff28f"/></linearGradient>
<linearGradient id="i4" gradientUnits="userSpaceOnUse" x1="684.3" x2="793.0" y1="0" y2="0"><stop offset="0.000" stop-color="#7cffc2"/><stop offset="0.062" stop-color="#84ffc0"/><stop offset="0.125" stop-color="#8cffbd"/><stop offset="0.188" stop-color="#94ffbb"/><stop offset="0.250" stop-color="#9dffb8"/><stop offset="0.312" stop-color="#a5ffb6"/><stop offset="0.375" stop-color="#aeffb3"/><stop offset="0.438" stop-color="#b7ffb1"/><stop offset="0.500" stop-color="#c0ffae"/><stop offset="0.562" stop-color="#caffac"/><stop offset="0.625" stop-color="#d3ffa9"/><stop offset="0.688" stop-color="#ddffa7"/><stop offset="0.750" stop-color="#e7ffa4"/><stop offset="0.812" stop-color="#f1ffa1"/><stop offset="0.875" stop-color="#fbff9f"/><stop offset="0.938" stop-color="#fff998"/><stop offset="1.000" stop-color="#fff090"/></linearGradient>
<linearGradient id="i5" gradientUnits="userSpaceOnUse" x1="684.3" x2="793.0" y1="0" y2="0"><stop offset="0.000" stop-color="#7dffc5"/><stop offset="0.062" stop-color="#86ffc3"/><stop offset="0.125" stop-color="#8effc0"/><stop offset="0.188" stop-color="#96ffbe"/><stop offset="0.250" stop-color="#9fffbb"/><stop offset="0.312" stop-color="#a8ffb9"/><stop offset="0.375" stop-color="#b0ffb6"/><stop offset="0.438" stop-color="#baffb4"/><stop offset="0.500" stop-color="#c3ffb1"/><stop offset="0.562" stop-color="#ccffae"/><stop offset="0.625" stop-color="#d6ffac"/><stop offset="0.688" stop-color="#dfffa9"/><stop offset="0.750" stop-color="#e9ffa7"/><stop offset="0.812" stop-color="#f3ffa4"/><stop offset="0.875" stop-color="#feffa1"/><stop offset="0.938" stop-color="#fff699"/><stop offset="1.000" stop-color="#ffed91"/></linearGradient>
<linearGradient id="i6" gradientUnits="userSpaceOnUse" x1="684.3" x2="793.0" y1="0" y2="0"><stop offset="0.000" stop-color="#7fffc8"/><stop offset="0.062" stop-color="#87ffc6"/><stop offset="0.125" stop-color="#90ffc3"/><stop offset="0.188" stop-color="#98ffc1"/><stop offset="0.250" stop-color="#a1ffbe"/><stop offset="0.312" stop-color="#aaffbc"/><stop offset="0.375" stop-color="#b3ffb9"/><stop offset="0.438" stop-color="#bcffb7"/><stop offset="0.500" stop-color="#c5ffb4"/><stop offset="0.562" stop-color="#cfffb1"/><stop offset="0.625" stop-color="#d8ffaf"/><stop offset="0.688" stop-color="#e2ffac"/><stop offset="0.750" stop-color="#ecffa9"/><stop offset="0.812" stop-color="#f6ffa7"/><stop offset="0.875" stop-color="#fffda3"/><stop offset="0.938" stop-color="#fff39a"/><stop offset="1.000" stop-color="#ffea92"/></linearGradient>
<linearGradient id="i7" gradientUnits="userSpaceOnUse" x1="684.3" x2="793.0" y1="0" y2="0"><stop offset="0.000" stop-color="#81ffcb"/><stop offset="0.062" stop-color="#89ffc9"/><stop offset="0.125" stop-color="#92ffc6"/><stop offset="0.188" stop-color="#9affc4"/><stop offset="0.250" stop-color="#a3ffc1"/><stop offset="0.312" stop-color="#acffbf"/><stop offset="0.375" stop-color="#b5ffbc"/><stop offset="0.438" stop-color="#beffb9"/><stop offset="0.500" stop-color="#c8ffb7"/><stop offset="0.562" stop-color="#d1ffb4"/><stop offset="0.625" stop-color="#dbffb2"/><stop offset="0.688" stop-color="#e5ffaf"/><stop offset="0.750" stop-color="#efffac"/><stop offset="0.812" stop-color="#f9ffaa"/><stop offset="0.875" stop-color="#fffaa4"/><stop offset="0.938" stop-color="#fff09b"/><stop offset="1.000" stop-color="#ffe792"/></linearGradient>
<linearGradient id="i8" gradientUnits="userSpaceOnUse" x1="684.3" x2="793.0" y1="0" y2="0"><stop offset="0.000" stop-color="#83ffce"/><stop offset="0.062" stop-color="#8bffcc"/><stop offset="0.125" stop-color="#93ffc9"/><stop offset="0.188" stop-color="#9cffc7"/><stop offset="0.250" stop-color="#a5ffc4"/><stop offset="0.312" stop-color="#aeffc2"/><stop offset="0.375" stop-color="#b7ffbf"/><stop offset="0.438" stop-color="#c1ffbc"/><stop offset="0.500" stop-color="#caffba"/><stop offset="0.562" stop-color="#d4ffb7"/><stop offset="0.625" stop-color="#deffb5"/><stop offset="0.688" stop-color="#e8ffb2"/><stop offset="0.750" stop-color="#f2ffaf"/><stop offset="0.812" stop-color="#fcffad"/><stop offset="0.875" stop-color="#fff7a5"/><stop offset="0.938" stop-color="#ffed9c"/><stop offset="1.000" stop-color="#ffe493"/></linearGradient>
<linearGradient id="i9" gradientUnits="userSpaceOnUse" x1="684.3" x2="793.0" y1="0" y2="0"><stop offset="0.000" stop-color="#84ffd1"/><stop offset="0.062" stop-color="#8dffcf"/><stop offset="0.125" stop-color="#95ffcc"/><stop offset="0.188" stop-color="#9effca"/><stop offset="0.250" stop-color="#a7ffc7"/><stop offset="0.312" stop-color="#b0ffc5"/><stop offset="0.375" stop-color="#baffc2"/><stop offset="0.438" stop-color="#c3ffbf"/><stop offset="0.500" stop-color="#cdffbd"/><stop offset="0.562" stop-color="#d6ffba"/><stop offset="0.625" stop-color="#e0ffb8"/><stop offset="0.688" stop-color="#ebffb5"/><stop offset="0.750" stop-color="#f5ffb2"/><stop offset="0.812" stop-color="#fffeaf"/><stop offset="0.875" stop-color="#fff4a5"/><stop offset="0.938" stop-color="#ffeb9c"/><stop offset="1.000" stop-color="#ffe294"/></linearGradient>
<linearGradient id="i10" gradientUnits="userSpaceOnUse" x1="684.3" x2="793.0" y1="0" y2="0"><stop offset="0.000" stop-color="#86ffd5"/><stop offset="0.062" stop-color="#8fffd2"/><stop offset="0.125" stop-color="#97ffd0"/><stop offset="0.188" stop-color="#a0ffcd"/><stop offset="0.250" stop-color="#a9ffca"/><stop offset="0.312" stop-color="#b3ffc8"/><stop offset="0.375" stop-color="#bcffc5"/><stop offset="0.438" stop-color="#c6ffc3"/><stop offset="0.500" stop-color="#cfffc0"/><stop offset="0.562" stop-color="#d9ffbd"/><stop offset="0.625" stop-color="#e3ffbb"/><stop offset="0.688" stop-color="#eeffb8"/><stop offset="0.750" stop-color="#f8ffb5"/><stop offset="0.812" stop-color="#fffbb0"/><stop offset="0.875" stop-color="#fff1a6"/><stop offset="0.938" stop-color="#ffe89d"/><stop offset="1.000" stop-color="#ffdf95"/></linearGradient>
<linearGradient id="i11" gradientUnits="userSpaceOnUse" x1="684.3" x2="793.0" y1="0" y2="0"><stop offset="0.000" stop-color="#88ffd8"/><stop offset="0.062" stop-color="#91ffd5"/><stop offset="0.125" stop-color="#99ffd3"/><stop offset="0.188" stop-color="#a2ffd0"/><stop offset="0.250" stop-color="#acffce"/><stop offset="0.312" stop-color="#b5ffcb"/><stop offset="0.375" stop-color="#beffc8"/><stop offset="0.438" stop-color="#c8ffc6"/><stop offset="0.500" stop-color="#d2ffc3"/><stop offset="0.562" stop-color="#dcffc0"/><stop offset="0.625" stop-color="#e6ffbe"/><stop offset="0.688" stop-color="#f1ffbb"/><stop offset="0.750" stop-color="#fbffb8"/><stop offset="0.812" stop-color="#fff8b1"/><stop offset="0.875" stop-color="#ffeea7"/><stop offset="0.938" stop-color="#ffe59e"/><stop offset="1.000" stop-color="#ffdc96"/></linearGradient>
<linearGradient id="i12" gradientUnits="userSpaceOnUse" x1="684.3" x2="793.0" y1="0" y2="0"><stop offset="0.000" stop-color="#8affdb"/><stop offset="0.062" stop-color="#93ffd9"/><stop offset="0.125" stop-color="#9bffd6"/><stop offset="0.188" stop-color="#a5ffd3"/><stop offset="0.250" stop-color="#aeffd1"/><stop offset="0.312" stop-color="#b7ffce"/><stop offset="0.375" stop-color="#c1ffcc"/><stop offset="0.438" stop-color="#cbffc9"/><stop offset="0.500" stop-color="#d5ffc6"/><stop offset="0.562" stop-color="#dfffc4"/><stop offset="0.625" stop-color="#e9ffc1"/><stop offset="0.688" stop-color="#f4ffbe"/><stop offset="0.750" stop-color="#feffbb"/><stop offset="0.812" stop-color="#fff5b2"/><stop offset="0.875" stop-color="#ffeba8"/><stop offset="0.938" stop-color="#ffe29f"/><stop offset="1.000" stop-color="#ffd996"/></linearGradient>
<linearGradient id="i13" gradientUnits="userSpaceOnUse" x1="684.3" x2="793.0" y1="0" y2="0"><stop offset="0.000" stop-color="#8cffde"/><stop offset="0.062" stop-color="#95ffdc"/><stop offset="0.125" stop-color="#9effd9"/><stop offset="0.188" stop-color="#a7ffd7"/><stop offset="0.250" stop-color="#b0ffd4"/><stop offset="0.312" stop-color="#baffd1"/><stop offset="0.375" stop-color="#c3ffcf"/><stop offset="0.438" stop-color="#cdffcc"/><stop offset="0.500" stop-color="#d7ffc9"/><stop offset="0.562" stop-color="#e2ffc7"/><stop offset="0.625" stop-color="#ecffc4"/><stop offset="0.688" stop-color="#f7ffc1"/><stop offset="0.750" stop-color="#fffdbd"/><stop offset="0.812" stop-color="#fff2b2"/><stop offset="0.875" stop-color="#ffe8a9"/><stop offset="0.938" stop-color="#ffdfa0"/><stop offset="1.000" stop-color="#ffd797"/></linearGradient>
<linearGradient id="i14" gradientUnits="userSpaceOnUse" x1="684.3" x2="793.0" y1="0" y2="0"><stop offset="0.000" stop-color="#8effe2"/><stop offset="0.062" stop-color="#97ffdf"/><stop offset="0.125" stop-color="#a0ffdd"/><stop offset="0.188" stop-color="#a9ffda"/><stop offset="0.250" stop-color="#b2ffd7"/><stop offset="0.312" stop-color="#bcffd5"/><stop offset="0.375" stop-color="#c6ffd2"/><stop offset="0.438" stop-color="#d0ffcf"/><stop offset="0.500" stop-color="#daffcd"/><stop offset="0.562" stop-color="#e4ffca"/><stop offset="0.625" stop-color="#efffc7"/><stop offset="0.688" stop-color="#faffc5"/><stop offset="0.750" stop-color="#fff9be"/><stop offset="0.812" stop-color="#ffefb3"/><stop offset="0.875" stop-color="#ffe6a9"/><stop offset="0.938" stop-color="#ffdda0"/><stop offset="1.000" stop-color="#ffd498"/></linearGradient>
<linearGradient id="i15" gradientUnits="userSpaceOnUse" x1="684.3" x2="793.0" y1="0" y2="0"><stop offset="0.000" stop-color="#90ffe5"/><stop offset="0.062" stop-color="#99ffe3"/><stop offset="0.125" stop-color="#a2ffe0"/><stop offset="0.188" stop-color="#abffde"/><stop offset="0.250" stop-color="#b5ffdb"/><stop offset="0.312" stop-color="#bfffd8"/><stop offset="0.375" stop-color="#c8ffd6"/><stop offset="0.438" stop-color="#d3ffd3"/><stop offset="0.500" stop-color="#ddffd0"/><stop offset="0.562" stop-color="#e7ffcd"/><stop offset="0.625" stop-color="#f2ffcb"/><stop offset="0.688" stop-color="#fdffc8"/><stop offset="0.750" stop-color="#fff6be"/><stop offset="0.812" stop-color="#ffecb4"/><stop offset="0.875" stop-color="#ffe3aa"/><stop offset="0.938" stop-color="#ffdaa1"/><stop offset="1.000" stop-color="#ffd199"/></linearGradient>
<linearGradient id="i16" gradientUnits="userSpaceOnUse" x1="684.3" x2="793.0" y1="0" y2="0"><stop offset="0.000" stop-color="#92ffe9"/><stop offset="0.062" stop-color="#9bffe6"/><stop offset="0.125" stop-color="#a4ffe4"/><stop offset="0.188" stop-color="#aeffe1"/><stop offset="0.250" stop-color="#b7ffde"/><stop offset="0.312" stop-color="#c1ffdc"/><stop offset="0.375" stop-color="#cbffd9"/><stop offset="0.438" stop-color="#d5ffd6"/><stop offset="0.500" stop-color="#e0ffd4"/><stop offset="0.562" stop-color="#eaffd1"/><stop offset="0.625" stop-color="#f5ffce"/><stop offset="0.688" stop-color="#fffeca"/><stop offset="0.750" stop-color="#fff3bf"/><stop offset="0.812" stop-color="#ffe9b5"/><stop offset="0.875" stop-color="#ffe0ab"/><stop offset="0.938" stop-color="#ffd7a2"/><stop offset="1.000" stop-color="#ffcf99"/></linearGradient>
<linearGradient id="i17" gradientUnits="userSpaceOnUse" x1="684.3" x2="793.0" y1="0" y2="0"><stop offset="0.000" stop-color="#94ffed"/><stop offset="0.062" stop-color="#9dffea"/><stop offset="0.125" stop-color="#a6ffe7"/><stop offset="0.188" stop-color="#b0ffe5"/><stop offset="0.250" stop-color="#baffe2"/><stop offset="0.312" stop-color="#c4ffdf"/><stop offset="0.375" stop-color="#ceffdd"/><stop offset="0.438" stop-color="#d8ffda"/><stop offset="0.500" stop-color="#e3ffd7"/><stop offset="0.562" stop-color="#edffd4"/><stop offset="0.625" stop-color="#f8ffd2"/><stop offset="0.688" stop-color="#fffbcb"/><stop offset="0.750" stop-color="#fff0c0"/><stop offset="0.812" stop-color="#ffe6b6"/><stop offset="0.875" stop-color="#ffddac"/><stop offset="0.938" stop-color="#ffd4a3"/><stop offset="1.000" stop-color="#ffcc9a"/></linearGradient>
<linearGradient id="i18" gradientUnits="userSpaceOnUse" x1="684.3" x2="793.0" y1="0" y2="0"><stop offset="0.000" stop-color="#96fff0"/><stop offset="0.062" stop-color="#9fffee"/><stop offset="0.125" stop-color="#a9ffeb"/><stop offset="0.188" stop-color="#b2ffe8"/><stop offset="0.250" stop-color="#bcffe6"/><stop offset="0.312" stop-color="#c6ffe3"/><stop offset="0.375" stop-color="#d1ffe0"/><stop offset="0.438" stop-color="#dbffdd"/><stop offset="0.500" stop-color="#e6ffdb"/><stop offset="0.562" stop-color="#f1ffd8"/><stop offset="0.625" stop-color="#fcffd5"/><stop offset="0.688" stop-color="#fff7cc"/><stop offset="0.750" stop-color="#ffedc1"/><stop offset="0.812" stop-color="#ffe3b6"/><stop offset="0.875" stop-color="#ffdaad"/><stop offset="0.938" stop-color="#ffd2a3"/><stop offset="1.000" stop-color="#ffca9b"/></linearGradient>
<linearGradient id="i19" gradientUnits="userSpaceOnUse" x1="684.3" x2="793.0" y1="0" y2="0"><stop offset="0.000" stop-color="#98fff4"/><stop offset="0.062" stop-color="#a1fff1"/><stop offset="0.125" stop-color="#abffef"/><stop offset="0.188" stop-color="#b5ffec"/><stop offset="0.250" stop-color="#bfffe9"/><stop offset="0.312" stop-color="#c9ffe7"/><stop offset="0.375" stop-color="#d3ffe4"/><stop offset="0.438" stop-color="#deffe1"/><stop offset="0.500" stop-color="#e9ffde"/><stop offset="0.562" stop-color="#f4ffdb"/><stop offset="0.625" stop-color="#ffffd9"/><stop offset="0.688" stop-color="#fff4cd"/><stop offset="0.750" stop-color="#ffeac2"/><stop offset="0.812" stop-color="#ffe0b7"/><stop offset="0.875" stop-color="#ffd7ad"/><stop offset="0.938" stop-color="#ffcfa4"/><stop offset="1.000" stop-color="#ffc79c"/></linearGradient>
<linearGradient id="i20" gradientUnits="userSpaceOnUse" x1="684.3" x2="793.0" y1="0" y2="0"><stop offset="0.000" stop-color="#9afff8"/><stop offset="0.062" stop-color="#a3fff5"/><stop offset="0.125" stop-color="#adfff2"/><stop offset="0.188" stop-color="#b7fff0"/><stop offset="0.250" stop-color="#c1ffed"/><stop offset="0.312" stop-color="#ccffea"/><stop offset="0.375" stop-color="#d6ffe8"/><stop offset="0.438" stop-color="#e1ffe5"/><stop offset="0.500" stop-color="#ecffe2"/><stop offset="0.562" stop-color="#f7ffdf"/><stop offset="0.625" stop-color="#fffcda"/><stop offset="0.688" stop-color="#fff1ce"/><stop offset="0.750" stop-color="#ffe7c2"/><stop offset="0.812" stop-color="#ffddb8"/><stop offset="0.875" stop-color="#ffd5ae"/><stop offset="0.938" stop-color="#ffcca5"/><stop offset="1.000" stop-color="#ffc59c"/></linearGradient>
<linearGradient id="i21" gradientUnits="userSpaceOnUse" x1="684.3" x2="793.0" y1="0" y2="0"><stop offset="0.000" stop-color="#9cfffc"/><stop offset="0.062" stop-color="#a6fff9"/><stop offset="0.125" stop-color="#b0fff6"/><stop offset="0.188" stop-color="#bafff4"/><stop offset="0.250" stop-color="#c4fff1"/><stop offset="0.312" stop-color="#ceffee"/><stop offset="0.375" stop-color="#d9ffeb"/><stop offset="0.438" stop-color="#e4ffe9"/><stop offset="0.500" stop-color="#efffe6"/><stop offset="0.562" stop-color="#faffe3"/><stop offset="0.625" stop-color="#fff8da"/><stop offset="0.688" stop-color="#ffeece"/><stop offset="0.750" stop-color="#ffe4c3"/><stop offset="0.812" stop-color="#ffdbb9"/><stop offset="0.875" stop-color="#ffd2af"/><stop offset="0.938" stop-color="#ffcaa6"/><stop offset="1.000" stop-color="#ffc29d"/></linearGradient>
<linearGradient id="i22" gradientUnits="userSpaceOnUse" x1="684.3" x2="793.0" y1="0" y2="0"><stop offset="0.000" stop-color="#9efeff"/><stop offset="0.062" stop-color="#a8fffd"/><stop offset="0.125" stop-color="#b2fffa"/><stop offset="0.188" stop-color="#bcfff7"/><stop offset="0.250" stop-color="#c7fff5"/><stop offset="0.312" stop-color="#d1fff2"/><stop offset="0.375" stop-color="#dcffef"/><stop offset="0.438" stop-color="#e7ffec"/><stop offset="0.500" stop-color="#f2ffea"/><stop offset="0.562" stop-color="#feffe7"/><stop offset="0.625" stop-color="#fff5db"/><stop offset="0.688" stop-color="#ffebcf"/><stop offset="0.750" stop-color="#ffe1c4"/><stop offset="0.812" stop-color="#ffd8b9"/><stop offset="0.875" stop-color="#ffcfb0"/><stop offset="0.938" stop-color="#ffc7a7"/><stop offset="1.000" stop-color="#ffc09e"/></linearGradient>
<linearGradient id="i23" gradientUnits="userSpaceOnUse" x1="684.3" x2="793.0" y1="0" y2="0"><stop offset="0.000" stop-color="#9efbff"/><stop offset="0.062" stop-color="#a9fdff"/><stop offset="0.125" stop-color="#b5fffe"/><stop offset="0.188" stop-color="#bffffb"/><stop offset="0.250" stop-color="#c9fff9"/><stop offset="0.312" stop-color="#d4fff6"/><stop offset="0.375" stop-color="#dffff3"/><stop offset="0.438" stop-color="#eafff0"/><stop offset="0.500" stop-color="#f5ffee"/><stop offset="0.562" stop-color="#fffde9"/><stop offset="0.625" stop-color="#fff2dc"/><stop offset="0.688" stop-color="#ffe8d0"/><stop offset="0.750" stop-color="#ffdec5"/><stop offset="0.812" stop-color="#ffd5ba"/><stop offset="0.875" stop-color="#ffccb0"/><stop offset="0.938" stop-color="#ffc4a7"/><stop offset="1.000" stop-color="#ffbd9f"/></linearGradient>
<linearGradient id="i24" gradientUnits="userSpaceOnUse" x1="684.3" x2="793.0" y1="0" y2="0"><stop offset="0.000" stop-color="#9ef7ff"/><stop offset="0.062" stop-color="#a9f9ff"/><stop offset="0.125" stop-color="#b5fcff"/><stop offset="0.188" stop-color="#c1feff"/><stop offset="0.250" stop-color="#ccfffd"/><stop offset="0.312" stop-color="#d7fffa"/><stop offset="0.375" stop-color="#e2fff7"/><stop offset="0.438" stop-color="#edfff4"/><stop offset="0.500" stop-color="#f9fff2"/><stop offset="0.562" stop-color="#fffaea"/><stop offset="0.625" stop-color="#ffefdd"/><stop offset="0.688" stop-color="#ffe5d1"/><stop offset="0.750" stop-color="#ffdbc6"/><stop offset="0.812" stop-color="#ffd2bb"/><stop offset="0.875" stop-color="#ffcab1"/><stop offset="0.938" stop-color="#ffc2a8"/><stop offset="1.000" stop-color="#ffbb9f"/></linearGradient>
<linearGradient id="i25" gradientUnits="userSpaceOnUse" x1="684.3" x2="793.0" y1="0" y2="0"><stop offset="0.000" stop-color="#9df3ff"/><stop offset="0.062" stop-color="#a9f5ff"/><stop offset="0.125" stop-color="#b4f8ff"/><stop offset="0.188" stop-color="#c1faff"/><stop offset="0.250" stop-color="#cdfdff"/><stop offset="0.312" stop-color="#dafffe"/><stop offset="0.375" stop-color="#e5fffb"/><stop offset="0.438" stop-color="#f1fff8"/><stop offset="0.500" stop-color="#fcfff6"/><stop offset="0.562" stop-color="#fff6ea"/><stop offset="0.625" stop-color="#ffecde"/><stop offset="0.688" stop-color="#ffe2d1"/><stop offset="0.750" stop-color="#ffd8c6"/><stop offset="0.812" stop-color="#ffcfbc"/><stop offset="0.875" stop-color="#ffc7b2"/><stop offset="0.938" stop-color="#ffbfa9"/><stop offset="1.000" stop-color="#ffb8a0"/></linearGradient>
<linearGradient id="i26" gradientUnits="userSpaceOnUse" x1="684.3" x2="793.0" y1="0" y2="0"><stop offset="0.000" stop-color="#9defff"/><stop offset="0.062" stop-color="#a8f1ff"/><stop offset="0.125" stop-color="#b4f4ff"/><stop offset="0.188" stop-color="#c0f6ff"/><stop offset="0.250" stop-color="#cdf9ff"/><stop offset="0.312" stop-color="#dafcff"/><stop offset="0.375" stop-color="#e8ffff"/><stop offset="0.438" stop-color="#f4fffd"/><stop offset="0.500" stop-color="#fffef9"/><stop offset="0.562" stop-color="#fff3eb"/><stop offset="0.625" stop-color="#ffe8de"/><stop offset="0.688" stop-color="#ffded2"/><stop offset="0.750" stop-color="#ffd5c7"/><stop offset="0.812" stop-color="#ffcdbd"/><stop offset="0.875" stop-color="#ffc4b3"/><stop offset="0.938" stop-color="#ffbdaa"/><stop offset="1.000" stop-color="#ffb6a1"/></linearGradient>
<linearGradient id="i27" gradientUnits="userSpaceOnUse" x1="684.3" x2="793.0" y1="0" y2="0"><stop offset="0.000" stop-color="#9debff"/><stop offset="0.062" stop-color="#a8eeff"/><stop offset="0.125" stop-color="#b4f0ff"/><stop offset="0.188" stop-color="#c0f2ff"/><stop offset="0.250" stop-color="#cdf5ff"/><stop offset="0.312" stop-color="#daf8ff"/><stop offset="0.375" stop-color="#e7faff"/><stop offset="0.438" stop-color="#f5fdff"/><stop offset="0.500" stop-color="#fffbfa"/><stop offset="0.562" stop-color="#fff0ec"/><stop offset="0.625" stop-color="#ffe5df"/><stop offset="0.688" stop-color="#ffdbd3"/><stop offset="0.750" stop-color="#ffd2c8"/><stop offset="0.812" stop-color="#ffcabd"/><stop offset="0.875" stop-color="#ffc2b4"/><stop offset="0.938" stop-color="#ffbaaa"/><stop offset="1.000" stop-color="#ffb3a2"/></linearGradient>
<linearGradient id="i28" gradientUnits="userSpaceOnUse" x1="684.3" x2="793.0" y1="0" y2="0"><stop offset="0.000" stop-color="#9de8ff"/><stop offset="0.062" stop-color="#a8eaff"/><stop offset="0.125" stop-color="#b3ecff"/><stop offset="0.188" stop-color="#bfefff"/><stop offset="0.250" stop-color="#ccf1ff"/><stop offset="0.312" stop-color="#d9f4ff"/><stop offset="0.375" stop-color="#e7f6ff"/><stop offset="0.438" stop-color="#f5f9ff"/><stop offset="0.500" stop-color="#fff7fb"/><stop offset="0.562" stop-color="#ffeced"/><stop offset="0.625" stop-color="#ffe2e0"/><stop offset="0.688" stop-color="#ffd8d4"/><stop offset="0.750" stop-color="#ffcfc9"/><stop offset="0.812" stop-color="#ffc7be"/><stop offset="0.875" stop-color="#ffbfb4"/><stop offset="0.938" stop-color="#ffb8ab"/><stop offset="1.000" stop-color="#ffb1a2"/></linearGradient>
<linearGradient id="i29" gradientUnits="userSpaceOnUse" x1="684.3" x2="793.0" y1="0" y2="0"><stop offset="0.000" stop-color="#9ce4ff"/><stop offset="0.062" stop-color="#a8e6ff"/><stop offset="0.125" stop-color="#b3e8ff"/><stop offset="0.188" stop-color="#bfebff"/><stop offset="0.250" stop-color="#ccedff"/><stop offset="0.312" stop-color="#d9f0ff"/><stop offset="0.375" stop-color="#e6f2ff"/><stop offset="0.438" stop-color="#f4f5ff"/><stop offset="0.500" stop-color="#fff4fb"/><stop offset="0.562" stop-color="#ffe9ee"/><stop offset="0.625" stop-color="#ffdfe1"/><stop offset="0.688" stop-color="#ffd6d5"/><stop offset="0.750" stop-color="#ffcdc9"/><stop offset="0.812" stop-color="#ffc4bf"/><stop offset="0.875" stop-color="#ffbdb5"/><stop offset="0.938" stop-color="#ffb5ac"/><stop offset="1.000" stop-color="#ffaea3"/></linearGradient>
<linearGradient id="i30" gradientUnits="userSpaceOnUse" x1="684.3" x2="793.0" y1="0" y2="0"><stop offset="0.000" stop-color="#9ce0ff"/><stop offset="0.062" stop-color="#a7e2ff"/><stop offset="0.125" stop-color="#b3e5ff"/><stop offset="0.188" stop-color="#bfe7ff"/><stop offset="0.250" stop-color="#cbe9ff"/><stop offset="0.312" stop-color="#d8ecff"/><stop offset="0.375" stop-color="#e5eeff"/><stop offset="0.438" stop-color="#f3f1ff"/><stop offset="0.500" stop-color="#fff1fc"/><stop offset="0.562" stop-color="#ffe6ee"/><stop offset="0.625" stop-color="#ffdce1"/><stop offset="0.688" stop-color="#ffd3d5"/><stop offset="0.750" stop-color="#ffcaca"/><stop offset="0.812" stop-color="#ffc2c0"/><stop offset="0.875" stop-color="#ffbab6"/><stop offset="0.938" stop-color="#ffb3ad"/><stop offset="1.000" stop-color="#ffaca4"/></linearGradient>
<linearGradient id="i31" gradientUnits="userSpaceOnUse" x1="684.3" x2="793.0" y1="0" y2="0"><stop offset="0.000" stop-color="#9cddff"/><stop offset="0.062" stop-color="#a7dfff"/><stop offset="0.125" stop-color="#b2e1ff"/><stop offset="0.188" stop-color="#bee3ff"/><stop offset="0.250" stop-color="#cbe5ff"/><stop offset="0.312" stop-color="#d7e8ff"/><stop offset="0.375" stop-color="#e5eaff"/><stop offset="0.438" stop-color="#f3edff"/><stop offset="0.500" stop-color="#ffedfd"/><stop offset="0.562" stop-color="#ffe3ef"/><stop offset="0.625" stop-color="#ffd9e2"/><stop offset="0.688" stop-color="#ffd0d6"/><stop offset="0.750" stop-color="#ffc7cb"/><stop offset="0.812" stop-color="#ffbfc0"/><stop offset="0.875" stop-color="#ffb7b7"/><stop offset="0.938" stop-color="#ffb0ad"/><stop offset="1.000" stop-color="#ffaaa5"/></linearGradient>
<linearGradient id="i32" gradientUnits="userSpaceOnUse" x1="684.3" x2="793.0" y1="0" y2="0"><stop offset="0.000" stop-color="#9cd9ff"/><stop offset="0.062" stop-color="#a7dbff"/><stop offset="0.125" stop-color="#b2ddff"/><stop offset="0.188" stop-color="#bedfff"/><stop offset="0.250" stop-color="#cae2ff"/><stop offset="0.312" stop-color="#d7e4ff"/><stop offset="0.375" stop-color="#e4e6ff"/><stop offset="0.438" stop-color="#f2e9ff"/><stop offset="0.500" stop-color="#ffeafe"/><stop offset="0.562" stop-color="#ffe0f0"/><stop offset="0.625" stop-color="#ffd6e3"/><stop offset="0.688" stop-color="#ffcdd7"/><stop offset="0.750" stop-color="#ffc4cc"/><stop offset="0.812" stop-color="#ffbcc1"/><stop offset="0.875" stop-color="#ffb5b7"/><stop offset="0.938" stop-color="#ffaeae"/><stop offset="1.000" stop-color="#ffa7a5"/></linearGradient>
<linearGradient id="i33" gradientUnits="userSpaceOnUse" x1="684.3" x2="793.0" y1="0" y2="0"><stop offset="0.000" stop-color="#9cd6ff"/><stop offset="0.062" stop-color="#a7d8ff"/><stop offset="0.125" stop-color="#b2daff"/><stop offset="0.188" stop-color="#bedcff"/><stop offset="0.250" stop-color="#cadeff"/><stop offset="0.312" stop-color="#d6e0ff"/><stop offset="0.375" stop-color="#e4e2ff"/><stop offset="0.438" stop-color="#f1e5ff"/><stop offset="0.500" stop-color="#ffe7ff"/><stop offset="0.562" stop-color="#ffdcf1"/><stop offset="0.625" stop-color="#ffd3e4"/><stop offset="0.688" stop-color="#ffcad8"/><stop offset="0.750" stop-color="#ffc2cc"/><stop offset="0.812" stop-color="#ffbac2"/><stop offset="0.875" stop-color="#ffb2b8"/><stop offset="0.938" stop-color="#ffabaf"/><stop offset="1.000" stop-color="#ffa5a6"/></linearGradient>
<linearGradient id="i34" gradientUnits="userSpaceOnUse" x1="684.3" x2="793.0" y1="0" y2="0"><stop offset="0.000" stop-color="#9bd2ff"/><stop offset="0.062" stop-color="#a6d4ff"/><stop offset="0.125" stop-color="#b1d6ff"/><stop offset="0.188" stop-color="#bdd8ff"/><stop offset="0.250" stop-color="#c9daff"/><stop offset="0.312" stop-color="#d6dcff"/><stop offset="0.375" stop-color="#e3dfff"/><stop offset="0.438" stop-color="#f1e1ff"/><stop offset="0.500" stop-color="#ffe3ff"/><stop offset="0.562" stop-color="#ffd9f1"/><stop offset="0.625" stop-color="#ffd0e4"/><stop offset="0.688" stop-color="#ffc7d8"/><stop offset="0.750" stop-color="#ffbfcd"/><stop offset="0.812" stop-color="#ffb7c3"/><stop offset="0.875" stop-color="#ffb0b9"/><stop offset="0.938" stop-color="#ffa9b0"/><stop offset="1.000" stop-color="#ffa3a7"/></linearGradient>
<linearGradient id="i35" gradientUnits="userSpaceOnUse" x1="684.3" x2="793.0" y1="0" y2="0"><stop offset="0.000" stop-color="#9bcfff"/><stop offset="0.062" stop-color="#a6d1ff"/><stop offset="0.125" stop-color="#b1d3ff"/><stop offset="0.188" stop-color="#bdd5ff"/><stop offset="0.250" stop-color="#c9d7ff"/><stop offset="0.312" stop-color="#d5d9ff"/><stop offset="0.375" stop-color="#e2dbff"/><stop offset="0.438" stop-color="#f0ddff"/><stop offset="0.500" stop-color="#fedfff"/><stop offset="0.562" stop-color="#ffd6f2"/><stop offset="0.625" stop-color="#ffcde5"/><stop offset="0.688" stop-color="#ffc4d9"/><stop offset="0.750" stop-color="#ffbcce"/><stop offset="0.812" stop-color="#ffb4c3"/><stop offset="0.875" stop-color="#ffadba"/><stop offset="0.938" stop-color="#ffa7b0"/><stop offset="1.000" stop-color="#ffa0a8"/></linearGradient>
<linearGradient id="i36" gradientUnits="userSpaceOnUse" x1="684.3" x2="793.0" y1="0" y2="0"><stop offset="0.000" stop-color="#9bcbff"/><stop offset="0.062" stop-color="#a6cdff"/><stop offset="0.125" stop-color="#b1cfff"/><stop offset="0.188" stop-color="#bcd1ff"/><stop offset="0.250" stop-color="#c8d3ff"/><stop offset="0.312" stop-color="#d5d5ff"/><stop offset="0.375" stop-color="#e2d7ff"/><stop offset="0.438" stop-color="#efd9ff"/><stop offset="0.500" stop-color="#fddbff"/><stop offset="0.562" stop-color="#ffd3f3"/><stop offset="0.625" stop-color="#ffcae6"/><stop offset="0.688" stop-color="#ffc1da"/><stop offset="0.750" stop-color="#ffb9cf"/><stop offset="0.812" stop-color="#ffb2c4"/><stop offset="0.875" stop-color="#ffabba"/><stop offset="0.938" stop-color="#ffa4b1"/><stop offset="1.000" stop-color="#ff9ea8"/></linearGradient>
<linearGradient id="i37" gradientUnits="userSpaceOnUse" x1="684.3" x2="793.0" y1="0" y2="0"><stop offset="0.000" stop-color="#9bc8ff"/><stop offset="0.062" stop-color="#a5caff"/><stop offset="0.125" stop-color="#b1ccff"/><stop offset="0.188" stop-color="#bccdff"/><stop offset="0.250" stop-color="#c8cfff"/><stop offset="0.312" stop-color="#d4d1ff"/><stop offset="0.375" stop-color="#e1d3ff"/><stop offset="0.438" stop-color="#efd5ff"/><stop offset="0.500" stop-color="#fcd8ff"/><stop offset="0.562" stop-color="#ffd0f4"/><stop offset="0.625" stop-color="#ffc7e7"/><stop offset="0.688" stop-color="#ffbfdb"/><stop offset="0.750" stop-color="#ffb7cf"/><stop offset="0.812" stop-color="#ffafc5"/><stop offset="0.875" stop-color="#ffa8bb"/><stop offset="0.938" stop-color="#ffa2b2"/><stop offset="1.000" stop-color="#ff9ca9"/></linearGradient>
<linearGradient id="i38" gradientUnits="userSpaceOnUse" x1="684.3" x2="793.0" y1="0" y2="0"><stop offset="0.000" stop-color="#9bc5ff"/><stop offset="0.062" stop-color="#a5c6ff"/><stop offset="0.125" stop-color="#b0c8ff"/><stop offset="0.188" stop-color="#bccaff"/><stop offset="0.250" stop-color="#c8ccff"/><stop offset="0.312" stop-color="#d4ceff"/><stop offset="0.375" stop-color="#e1d0ff"/><stop offset="0.438" stop-color="#eed2ff"/><stop offset="0.500" stop-color="#fcd4ff"/><stop offset="0.562" stop-color="#ffcdf4"/><stop offset="0.625" stop-color="#ffc4e8"/><stop offset="0.688" stop-color="#ffbcdb"/><stop offset="0.750" stop-color="#ffb4d0"/><stop offset="0.812" stop-color="#ffadc6"/><stop offset="0.875" stop-color="#ffa6bc"/><stop offset="0.938" stop-color="#ffa0b2"/><stop offset="1.000" stop-color="#ff99aa"/></linearGradient>
<linearGradient id="i39" gradientUnits="userSpaceOnUse" x1="684.3" x2="793.0" y1="0" y2="0"><stop offset="0.000" stop-color="#9ac2ff"/><stop offset="0.062" stop-color="#a5c3ff"/><stop offset="0.125" stop-color="#b0c5ff"/><stop offset="0.188" stop-color="#bbc7ff"/><stop offset="0.250" stop-color="#c7c8ff"/><stop offset="0.312" stop-color="#d3caff"/><stop offset="0.375" stop-color="#e0ccff"/><stop offset="0.438" stop-color="#edceff"/><stop offset="0.500" stop-color="#fbd0ff"/><stop offset="0.562" stop-color="#ffcaf5"/><stop offset="0.625" stop-color="#ffc1e8"/><stop offset="0.688" stop-color="#ffb9dc"/><stop offset="0.750" stop-color="#ffb1d1"/><stop offset="0.812" stop-color="#ffaac6"/><stop offset="0.875" stop-color="#ffa4bc"/><stop offset="0.938" stop-color="#ff9db3"/><stop offset="1.000" stop-color="#ff97aa"/></linearGradient>
<linearGradient id="i40" gradientUnits="userSpaceOnUse" x1="684.3" x2="793.0" y1="0" y2="0"><stop offset="0.000" stop-color="#9abeff"/><stop offset="0.062" stop-color="#a5c0ff"/><stop offset="0.125" stop-color="#b0c2ff"/><stop offset="0.188" stop-color="#bbc3ff"/><stop offset="0.250" stop-color="#c7c5ff"/><stop offset="0.312" stop-color="#d3c7ff"/><stop offset="0.375" stop-color="#e0c9ff"/><stop offset="0.438" stop-color="#edcaff"/><stop offset="0.500" stop-color="#faccff"/><stop offset="0.562" stop-color="#ffc7f6"/><stop offset="0.625" stop-color="#ffbee9"/><stop offset="0.688" stop-color="#ffb6dd"/><stop offset="0.750" stop-color="#ffafd2"/><stop offset="0.812" stop-color="#ffa8c7"/><stop offset="0.875" stop-color="#ffa1bd"/><stop offset="0.938" stop-color="#ff9bb4"/><stop offset="1.000" stop-color="#ff95ab"/></linearGradient>
<linearGradient id="i41" gradientUnits="userSpaceOnUse" x1="684.3" x2="793.0" y1="0" y2="0"><stop offset="0.000" stop-color="#9abbff"/><stop offset="0.062" stop-color="#a4bdff"/><stop offset="0.125" stop-color="#afbeff"/><stop offset="0.188" stop-color="#bbc0ff"/><stop offset="0.250" stop-color="#c6c2ff"/><stop offset="0.312" stop-color="#d2c3ff"/><stop offset="0.375" stop-color="#dfc5ff"/><stop offset="0.438" stop-color="#ecc7ff"/><stop offset="0.500" stop-color="#fac9ff"/><stop offset="0.562" stop-color="#ffc4f7"/><stop offset="0.625" stop-color="#ffbcea"/><stop offset="0.688" stop-color="#ffb4de"/><stop offset="0.750" stop-color="#ffacd2"/><stop offset="0.812" stop-color="#ffa5c8"/><stop offset="0.875" stop-color="#ff9fbe"/><stop offset="0.938" stop-color="#ff99b5"/><stop offset="1.000" stop-color="#ff93ac"/></linearGradient>
<linearGradient id="i42" gradientUnits="userSpaceOnUse" x1="684.3" x2="793.0" y1="0" y2="0"><stop offset="0.000" stop-color="#9ab8ff"/><stop offset="0.062" stop-color="#a4baff"/><stop offset="0.125" stop-color="#afbbff"/><stop offset="0.188" stop-color="#babdff"/><stop offset="0.250" stop-color="#c6beff"/><stop offset="0.312" stop-color="#d2c0ff"/><stop offset="0.375" stop-color="#dec2ff"/><stop offset="0.438" stop-color="#ebc3ff"/><stop offset="0.500" stop-color="#f9c5ff"/><stop offset="0.562" stop-color="#ffc1f7"/><stop offset="0.625" stop-color="#ffb9ea"/><stop offset="0.688" stop-color="#ffb1de"/><stop offset="0.750" stop-color="#ffaad3"/><stop offset="0.812" stop-color="#ffa3c9"/><stop offset="0.875" stop-color="#ff9cbf"/><stop offset="0.938" stop-color="#ff96b5"/><stop offset="1.000" stop-color="#ff91ad"/></linearGradient>
<linearGradient id="i43" gradientUnits="userSpaceOnUse" x1="684.3" x2="793.0" y1="0" y2="0"><stop offset="0.000" stop-color="#9ab5ff"/><stop offset="0.062" stop-color="#a4b6ff"/><stop offset="0.125" stop-color="#afb8ff"/><stop offset="0.188" stop-color="#bab9ff"/><stop offset="0.250" stop-color="#c5bbff"/><stop offset="0.312" stop-color="#d1bdff"/><stop offset="0.375" stop-color="#debeff"/><stop offset="0.438" stop-color="#ebc0ff"/><stop offset="0.500" stop-color="#f8c2ff"/><stop offset="0.562" stop-color="#ffbef8"/><stop offset="0.625" stop-color="#ffb6eb"/><stop offset="0.688" stop-color="#ffaedf"/><stop offset="0.750" stop-color="#ffa7d4"/><stop offset="0.812" stop-color="#ffa0c9"/><stop offset="0.875" stop-color="#ff9abf"/><stop offset="0.938" stop-color="#ff94b6"/><stop offset="1.000" stop-color="#ff8ead"/></linearGradient>
<linearGradient id="i44" gradientUnits="userSpaceOnUse" x1="684.3" x2="793.0" y1="0" y2="0"><stop offset="0.000" stop-color="#99b2ff"/><stop offset="0.062" stop-color="#a4b3ff"/><stop offset="0.125" stop-color="#aeb5ff"/><stop offset="0.188" stop-color="#bab6ff"/><stop offset="0.250" stop-color="#c5b8ff"/><stop offset="0.312" stop-color="#d1b9ff"/><stop offset="0.375" stop-color="#ddbbff"/><stop offset="0.438" stop-color="#eabcff"/><stop offset="0.500" stop-color="#f7beff"/><stop offset="0.562" stop-color="#ffbbf9"/><stop offset="0.625" stop-color="#ffb3ec"/><stop offset="0.688" stop-color="#fface0"/><stop offset="0.750" stop-color="#ffa5d5"/><stop offset="0.812" stop-color="#ff9eca"/><stop offset="0.875" stop-color="#ff98c0"/><stop offset="0.938" stop-color="#ff92b7"/><stop offset="1.000" stop-color="#ff8cae"/></linearGradient>
<linearGradient id="i45" gradientUnits="userSpaceOnUse" x1="684.3" x2="793.0" y1="0" y2="0"><stop offset="0.000" stop-color="#99afff"/><stop offset="0.062" stop-color="#a4b0ff"/><stop offset="0.125" stop-color="#aeb2ff"/><stop offset="0.188" stop-color="#b9b3ff"/><stop offset="0.250" stop-color="#c5b4ff"/><stop offset="0.312" stop-color="#d1b6ff"/><stop offset="0.375" stop-color="#ddb8ff"/><stop offset="0.438" stop-color="#eab9ff"/><stop offset="0.500" stop-color="#f7bbff"/><stop offset="0.562" stop-color="#ffb8fa"/><stop offset="0.625" stop-color="#ffb0ed"/><stop offset="0.688" stop-color="#ffa9e1"/><stop offset="0.750" stop-color="#ffa2d5"/><stop offset="0.812" stop-color="#ff9bcb"/><stop offset="0.875" stop-color="#ff95c1"/><stop offset="0.938" stop-color="#ff90b7"/><stop offset="1.000" stop-color="#ff8aaf"/></linearGradient>
<linearGradient id="i46" gradientUnits="userSpaceOnUse" x1="684.3" x2="793.0" y1="0" y2="0"><stop offset="0.000" stop-color="#99acff"/><stop offset="0.062" stop-color="#a3adff"/><stop offset="0.125" stop-color="#aeafff"/><stop offset="0.188" stop-color="#b9b0ff"/><stop offset="0.250" stop-color="#c4b1ff"/><stop offset="0.312" stop-color="#d0b3ff"/><stop offset="0.375" stop-color="#dcb4ff"/><stop offset="0.438" stop-color="#e9b6ff"/><stop offset="0.500" stop-color="#f6b7ff"/><stop offset="0.562" stop-color="#ffb6fa"/><stop offset="0.625" stop-color="#ffaeed"/><stop offset="0.688" stop-color="#ffa6e1"/><stop offset="0.750" stop-color="#ffa0d6"/><stop offset="0.812" stop-color="#ff99cb"/><stop offset="0.875" stop-color="#ff93c2"/><stop offset="0.938" stop-color="#ff8db8"/><stop offset="1.000" stop-color="#ff88af"/></linearGradient>
</defs><g clip-path="url(#ins)"><g filter="url(#vb)">
<rect x="683.3" y="24" width="110.7" height="3" fill="url(#i0)"/>
<rect x="683.3" y="26" width="110.7" height="3" fill="url(#i1)"/>
<rect x="683.3" y="28" width="110.7" height="3" fill="url(#i2)"/>
<rect x="683.3" y="30" width="110.7" height="3" fill="url(#i3)"/>
<rect x="683.3" y="32" width="110.7" height="3" fill="url(#i4)"/>
<rect x="683.3" y="34" width="110.7" height="3" fill="url(#i5)"/>
<rect x="683.3" y="36" width="110.7" height="3" fill="url(#i6)"/>
<rect x="683.3" y="38" width="110.7" height="3" fill="url(#i7)"/>
<rect x="683.3" y="40" width="110.7" height="3" fill="url(#i8)"/>
<rect x="683.3" y="42" width="110.7" height="3" fill="url(#i9)"/>
<rect x="683.3" y="44" width="110.7" height="3" fill="url(#i10)"/>
<rect x="683.3" y="46" width="110.7" height="3" fill="url(#i11)"/>
<rect x="683.3" y="48" width="110.7" height="3" fill="url(#i12)"/>
<rect x="683.3" y="50" width="110.7" height="3" fill="url(#i13)"/>
<rect x="683.3" y="52" width="110.7" height="3" fill="url(#i14)"/>
<rect x="683.3" y="54" width="110.7" height="3" fill="url(#i15)"/>
<rect x="683.3" y="56" width="110.7" height="3" fill="url(#i16)"/>
<rect x="683.3" y="58" width="110.7" height="3" fill="url(#i17)"/>
<rect x="683.3" y="60" width="110.7" height="3" fill="url(#i18)"/>
<rect x="683.3" y="62" width="110.7" height="3" fill="url(#i19)"/>
<rect x="683.3" y="64" width="110.7" height="3" fill="url(#i20)"/>
<rect x="683.3" y="66" width="110.7" height="3" fill="url(#i21)"/>
<rect x="683.3" y="68" width="110.7" height="3" fill="url(#i22)"/>
<rect x="683.3" y="70" width="110.7" height="3" fill="url(#i23)"/>
<rect x="683.3" y="72" width="110.7" height="3" fill="url(#i24)"/>
<rect x="683.3" y="74" width="110.7" height="3" fill="url(#i25)"/>
<rect x="683.3" y="76" width="110.7" height="3" fill="url(#i26)"/>
<rect x="683.3" y="78" width="110.7" height="3" fill="url(#i27)"/>
<rect x="683.3" y="80" width="110.7" height="3" fill="url(#i28)"/>
<rect x="683.3" y="82" width="110.7" height="3" fill="url(#i29)"/>
<rect x="683.3" y="84" width="110.7" height="3" fill="url(#i30)"/>
<rect x="683.3" y="86" width="110.7" height="3" fill="url(#i31)"/>
<rect x="683.3" y="88" width="110.7" height="3" fill="url(#i32)"/>
<rect x="683.3" y="90" width="110.7" height="3" fill="url(#i33)"/>
<rect x="683.3" y="92" width="110.7" height="3" fill="url(#i34)"/>
<rect x="683.3" y="94" width="110.7" height="3" fill="url(#i35)"/>
<rect x="683.3" y="96" width="110.7" height="3" fill="url(#i36)"/>
<rect x="683.3" y="98" width="110.7" height="3" fill="url(#i37)"/>
<rect x="683.3" y="100" width="110.7" height="3" fill="url(#i38)"/>
<rect x="683.3" y="102" width="110.7" height="3" fill="url(#i39)"/>
<rect x="683.3" y="104" width="110.7" height="3" fill="url(#i40)"/>
<rect x="683.3" y="106" width="110.7" height="3" fill="url(#i41)"/>
<rect x="683.3" y="108" width="110.7" height="3" fill="url(#i42)"/>
<rect x="683.3" y="110" width="110.7" height="3" fill="url(#i43)"/>
<rect x="683.3" y="112" width="110.7" height="3" fill="url(#i44)"/>
<rect x="683.3" y="114" width="110.7" height="3" fill="url(#i45)"/>
<rect x="683.3" y="116" width="110.7" height="3" fill="url(#i46)"/>
</g></g>
<rect x="684.3" y="24.6" width="108.7" height="93.2" fill="none" stroke="#9a9a9a" stroke-width="0.8"/>
<rect x="735.3" y="67.2" width="6.4" height="6.4" fill="none" stroke="#1a1a1a" stroke-width="1.0"/>
<circle cx="727.6" cy="109.5" r="2.2" fill="#fff" stroke="#000" stroke-width="0.9"/>
<defs><clipPath id="tclip"><rect x="467.5" y="298" width="319.8" height="106"/></clipPath></defs>
<rect x="467.5" y="300.1" width="319.8" height="20.1" fill="#131313"/>
<rect x="467.5" y="300.1" width="319.8" height="9.7" fill="#262626"/>
<rect x="467.5" y="320.2" width="319.8" height="17.4" fill="#464646"/>
<rect x="467.5" y="337.6" width="319.8" height="17.4" fill="#747474"/>
<rect x="467.5" y="355.0" width="319.8" height="17.3" fill="#464646"/>
<rect x="467.5" y="372.3" width="319.8" height="17.3" fill="#747474"/>
<rect x="467.5" y="389.6" width="319.8" height="14.4" fill="#464646"/>
<rect x="467.5" y="300.1" width="7.2" height="103.9" fill="#000"/>
<rect x="467.5" y="320.0" width="7.2" height="84" fill="#2a2a2a"/>
<rect x="473.9" y="320.0" width="0.8" height="84" fill="#222"/>
<rect x="787.3" y="319.6" width="8.4" height="84.2" fill="#5c5c5c"/>
<rect x="787.3" y="319.6" width="8.4" height="11.4" fill="#747474"/>
<rect x="787.3" y="390.6" width="8.4" height="13.0" fill="#747474"/>
<rect x="788.8" y="331.6" width="5.4" height="46" fill="#3a3a3a" rx="1.5"/>
<path d="M788.9,327.4 L791.5,322.8 L794.1,327.4Z" fill="#1c1c1c"/>
<path d="M788.9,394.6 L791.5,399.2 L794.1,394.6Z" fill="#1c1c1c"/>
<rect x="467.5" y="403.7" width="328.2" height="7.3" fill="#2c2c2c"/>
<rect x="475.2" y="403.7" width="312" height="7.3" fill="#3e3e3e"/>
<rect x="483" y="404.4" width="260.5" height="6.6" fill="#5e5e5e"/>
<rect x="475.2" y="404.2" width="7.4" height="6.8" fill="#808080"/>
<rect x="780.4" y="404.2" width="6.6" height="6.8" fill="#808080"/>
<path d="M480.8,405.0 L477.0,407.9 L480.8,410.8Z" fill="#1c1c1c"/>
<path d="M782.4,405.0 L786.0,407.9 L782.4,410.8Z" fill="#1c1c1c"/>
<text x="514.70" y="313.80" font-size="11" text-anchor="start" fill="#f2f2f2" textLength="20.5" lengthAdjust="spacingAndGlyphs" >White</text>
<text x="555.70" y="313.80" font-size="11" text-anchor="start" fill="#f2f2f2" textLength="13.5" lengthAdjust="spacingAndGlyphs" >Red</text>
<text x="591.70" y="313.80" font-size="11" text-anchor="start" fill="#f2f2f2" textLength="21.5" lengthAdjust="spacingAndGlyphs" >Green</text>
<text x="632.60" y="313.80" font-size="11" text-anchor="start" fill="#f2f2f2" textLength="15.0" lengthAdjust="spacingAndGlyphs" >Blue</text>
<text x="668.30" y="313.80" font-size="11" text-anchor="start" fill="#f2f2f2" textLength="17.5" lengthAdjust="spacingAndGlyphs" >Cyan</text>
<text x="709.90" y="313.80" font-size="11" text-anchor="start" fill="#f2f2f2" textLength="30.0" lengthAdjust="spacingAndGlyphs" >Magenta</text>
<text x="750.30" y="313.80" font-size="11" text-anchor="start" fill="#f2f2f2" textLength="21.5" lengthAdjust="spacingAndGlyphs" >Yellow</text>
<g clip-path="url(#tclip)">
<text x="476.60" y="332.20" font-size="11" text-anchor="start" fill="#f2f2f2" textLength="30.0" lengthAdjust="spacingAndGlyphs" >x: CIE31</text>
<text x="514.70" y="332.20" font-size="11" text-anchor="start" fill="#f2f2f2" textLength="25.3" lengthAdjust="spacingAndGlyphs" >0.3065</text>
<text x="555.70" y="332.20" font-size="11" text-anchor="start" fill="#f2f2f2" textLength="25.3" lengthAdjust="spacingAndGlyphs" >0.6424</text>
<text x="591.70" y="332.20" font-size="11" text-anchor="start" fill="#f2f2f2" textLength="25.3" lengthAdjust="spacingAndGlyphs" >0.2417</text>
<text x="632.60" y="332.20" font-size="11" text-anchor="start" fill="#f2f2f2" textLength="25.3" lengthAdjust="spacingAndGlyphs" >0.1467</text>
<text x="668.30" y="332.20" font-size="11" text-anchor="start" fill="#f2f2f2" textLength="25.3" lengthAdjust="spacingAndGlyphs" >0.1832</text>
<text x="709.90" y="332.20" font-size="11" text-anchor="start" fill="#f2f2f2" textLength="25.3" lengthAdjust="spacingAndGlyphs" >0.3305</text>
<text x="750.30" y="332.20" font-size="11" text-anchor="start" fill="#f2f2f2" textLength="25.3" lengthAdjust="spacingAndGlyphs" >0.4433</text>
<text x="476.60" y="349.60" font-size="11" text-anchor="start" fill="#f2f2f2" textLength="30.0" lengthAdjust="spacingAndGlyphs" >y: CIE31</text>
<text x="514.70" y="349.60" font-size="11" text-anchor="start" fill="#f2f2f2" textLength="25.3" lengthAdjust="spacingAndGlyphs" >0.3036</text>
<text x="555.70" y="349.60" font-size="11" text-anchor="start" fill="#f2f2f2" textLength="25.3" lengthAdjust="spacingAndGlyphs" >0.3258</text>
<text x="591.70" y="349.60" font-size="11" text-anchor="start" fill="#f2f2f2" textLength="25.3" lengthAdjust="spacingAndGlyphs" >0.7090</text>
<text x="632.60" y="349.60" font-size="11" text-anchor="start" fill="#f2f2f2" textLength="25.3" lengthAdjust="spacingAndGlyphs" >0.0437</text>
<text x="668.30" y="349.60" font-size="11" text-anchor="start" fill="#f2f2f2" textLength="25.3" lengthAdjust="spacingAndGlyphs" >0.3130</text>
<text x="709.90" y="349.60" font-size="11" text-anchor="start" fill="#f2f2f2" textLength="25.3" lengthAdjust="spacingAndGlyphs" >0.1457</text>
<text x="750.30" y="349.60" font-size="11" text-anchor="start" fill="#f2f2f2" textLength="25.3" lengthAdjust="spacingAndGlyphs" >0.5012</text>
<text x="476.60" y="367.00" font-size="11" text-anchor="start" fill="#f2f2f2" textLength="5.0" lengthAdjust="spacingAndGlyphs" >Y</text>
<text x="514.70" y="367.00" font-size="11" text-anchor="start" fill="#f2f2f2" textLength="34.8" lengthAdjust="spacingAndGlyphs" >397.9440</text>
<text x="555.70" y="367.00" font-size="11" text-anchor="start" fill="#f2f2f2" textLength="29.8" lengthAdjust="spacingAndGlyphs" >96.3747</text>
<text x="591.70" y="367.00" font-size="11" text-anchor="start" fill="#f2f2f2" textLength="34.8" lengthAdjust="spacingAndGlyphs" >329.5149</text>
<text x="632.60" y="367.00" font-size="11" text-anchor="start" fill="#f2f2f2" textLength="29.8" lengthAdjust="spacingAndGlyphs" >29.9768</text>
<text x="668.30" y="367.00" font-size="11" text-anchor="start" fill="#f2f2f2" textLength="34.8" lengthAdjust="spacingAndGlyphs" >327.1967</text>
<text x="709.90" y="367.00" font-size="11" text-anchor="start" fill="#f2f2f2" textLength="29.8" lengthAdjust="spacingAndGlyphs" >94.0180</text>
<text x="750.30" y="367.00" font-size="11" text-anchor="start" fill="#f2f2f2" textLength="34.8" lengthAdjust="spacingAndGlyphs" >368.3294</text>
<text x="476.60" y="384.30" font-size="11" text-anchor="start" fill="#f2f2f2" textLength="33.5" lengthAdjust="spacingAndGlyphs" >Target Y</text>
<text x="514.70" y="384.30" font-size="11" text-anchor="start" fill="#f2f2f2" textLength="34.8" lengthAdjust="spacingAndGlyphs" >397.9440</text>
<text x="555.70" y="384.30" font-size="11" text-anchor="start" fill="#f2f2f2" textLength="29.8" lengthAdjust="spacingAndGlyphs" >91.1248</text>
<text x="591.70" y="384.30" font-size="11" text-anchor="start" fill="#f2f2f2" textLength="34.8" lengthAdjust="spacingAndGlyphs" >275.2701</text>
<text x="632.60" y="384.30" font-size="11" text-anchor="start" fill="#f2f2f2" textLength="29.8" lengthAdjust="spacingAndGlyphs" >31.5491</text>
<text x="668.30" y="384.30" font-size="11" text-anchor="start" fill="#f2f2f2" textLength="34.8" lengthAdjust="spacingAndGlyphs" >306.3155</text>
<text x="709.90" y="384.30" font-size="11" text-anchor="start" fill="#f2f2f2" textLength="34.8" lengthAdjust="spacingAndGlyphs" >122.6739</text>
<text x="750.30" y="384.30" font-size="11" text-anchor="start" fill="#f2f2f2" textLength="34.8" lengthAdjust="spacingAndGlyphs" >366.3949</text>
<text x="476.60" y="401.60" font-size="11" text-anchor="start" fill="#f2f2f2" textLength="32.5" lengthAdjust="spacingAndGlyphs" >ΔE 2000</text>
<text x="514.70" y="401.60" font-size="11" text-anchor="start" fill="#f2f2f2" textLength="29.8" lengthAdjust="spacingAndGlyphs" >13.2801</text>
<text x="555.70" y="401.60" font-size="11" text-anchor="start" fill="#f2f2f2" textLength="25.3" lengthAdjust="spacingAndGlyphs" >7.1171</text>
<text x="591.70" y="401.60" font-size="11" text-anchor="start" fill="#f2f2f2" textLength="25.3" lengthAdjust="spacingAndGlyphs" >5.0672</text>
<text x="632.60" y="401.60" font-size="11" text-anchor="start" fill="#f2f2f2" textLength="25.3" lengthAdjust="spacingAndGlyphs" >5.7629</text>
<text x="668.30" y="401.60" font-size="11" text-anchor="start" fill="#f2f2f2" textLength="25.3" lengthAdjust="spacingAndGlyphs" >4.3270</text>
<text x="709.90" y="401.60" font-size="11" text-anchor="start" fill="#f2f2f2" textLength="25.3" lengthAdjust="spacingAndGlyphs" >3.4172</text>
<text x="750.30" y="401.60" font-size="11" text-anchor="start" fill="#f2f2f2" textLength="25.3" lengthAdjust="spacingAndGlyphs" >6.2329</text>
</g>
<path d="M643.8,344.8 H685.2 Q687.6,344.8 687.6,347.2 V386.3 Q687.6,388.7 685.2,388.7 H643.8 Q641.3,388.7 641.3,386.3 V347.2 Q641.3,344.8 643.8,344.8 Z M655.0,355.2 L662.8,355.2 L669.5,362.8 L669.5,366.8 L676.8,366.8 L676.8,371.6 L666.8,371.6 L666.8,367.2 Z" fill="#848484" fill-opacity="0.55" fill-rule="evenodd"/>
<rect x="641.6" y="345.1" width="45.7" height="43.3" rx="2.2" fill="none" stroke="#b4b4b4" stroke-opacity="0.35" stroke-width="0.7"/>
<text x="696.2" y="369.6" font-size="29.5" font-weight="400" font-family='"Liberation Sans", "Noto Sans CJK SC", sans-serif' fill="#000" stroke="#fff" stroke-width="2" stroke-linejoin="round" paint-order="stroke" textLength="82.4" lengthAdjust="spacingAndGlyphs">数码多</text>
<text x="696.4" y="385.3" font-size="14" fill="#000" stroke="#fff" stroke-width="1.8" stroke-linejoin="round" paint-order="stroke" textLength="82.6" lengthAdjust="spacingAndGlyphs">Soomal.com</text>
</svg></body></html>
